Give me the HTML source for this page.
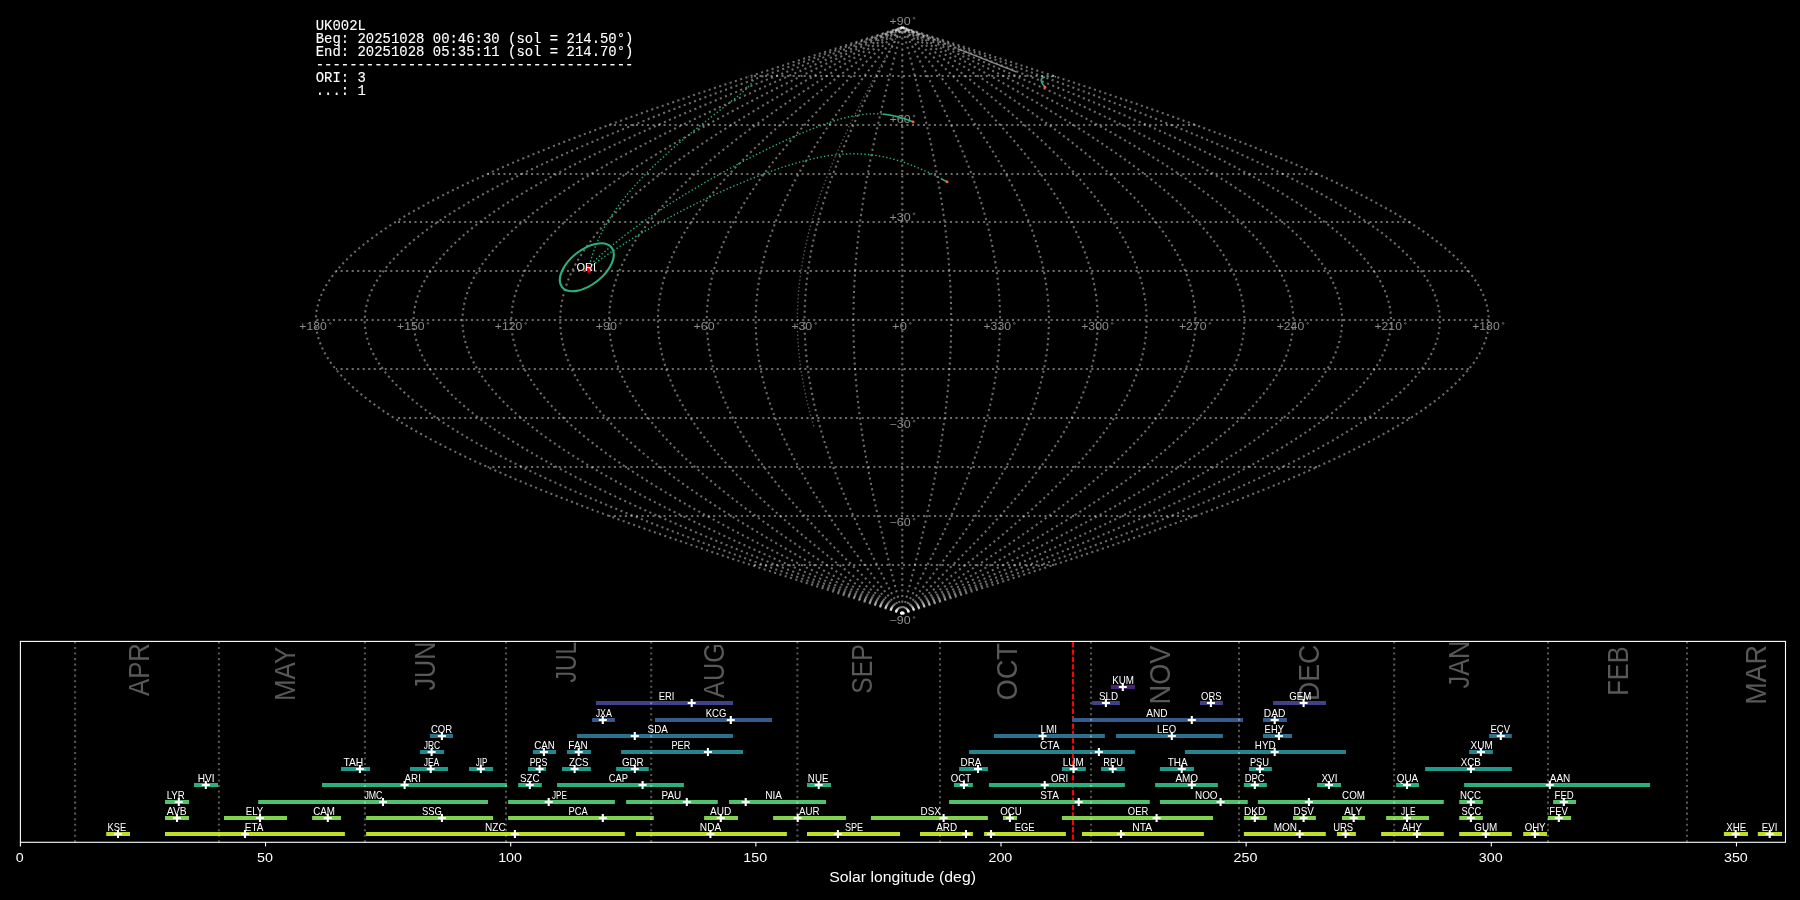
<!DOCTYPE html>
<html><head><meta charset="utf-8"><title>UK002L</title>
<style>html,body{margin:0;padding:0;background:#000;width:1800px;height:900px;overflow:hidden}svg{display:block;will-change:transform}</style>
</head><body><svg width="1800" height="900" viewBox="0 0 1800 900" font-family="Liberation Sans, sans-serif"><g fill="none" stroke="#ffffff" stroke-opacity="0.42" stroke-width="2.08" stroke-dasharray="2.08 3.44"><polyline points="1054.08,565 1053.24,565 1052.4,565 1051.55,565 1050.71,565 1049.87,565 1049.02,565 1048.18,565 1047.34,565 1046.49,565 1045.65,565 1044.81,565 1043.96,565 1043.12,565 1042.28,565 1041.43,565 1040.59,565 1039.75,565 1038.9,565 1038.06,565 1037.22,565 1036.37,565 1035.53,565 1034.69,565 1033.84,565 1033,565 1032.16,565 1031.31,565 1030.47,565 1029.63,565 1028.78,565 1027.94,565 1027.1,565 1026.26,565 1025.41,565 1024.57,565 1023.73,565 1022.88,565 1022.04,565 1021.2,565 1020.35,565 1019.51,565 1018.67,565 1017.82,565 1016.98,565 1016.14,565 1015.29,565 1014.45,565 1013.61,565 1012.76,565 1011.92,565 1011.08,565 1010.23,565 1009.39,565 1008.55,565 1007.7,565 1006.86,565 1006.02,565 1005.17,565 1004.33,565 1003.49,565 1002.64,565 1001.8,565 1000.96,565 1000.11,565 999.27,565 998.43,565 997.59,565 996.74,565 995.9,565 995.06,565 994.21,565 993.37,565 992.53,565 991.68,565 990.84,565 990,565 989.15,565 988.31,565 987.47,565 986.62,565 985.78,565 984.94,565 984.09,565 983.25,565 982.41,565 981.56,565 980.72,565 979.88,565 979.03,565 978.19,565 977.35,565 976.5,565 975.66,565 974.82,565 973.97,565 973.13,565 972.29,565 971.45,565 970.6,565 969.76,565 968.92,565 968.07,565 967.23,565 966.39,565 965.54,565 964.7,565 963.86,565 963.01,565 962.17,565 961.33,565 960.48,565 959.64,565 958.8,565 957.95,565 957.11,565 956.27,565 955.42,565 954.58,565 953.74,565 952.89,565 952.05,565 951.21,565 950.36,565 949.52,565 948.68,565 947.83,565 946.99,565 946.15,565 945.3,565 944.46,565 943.62,565 942.78,565 941.93,565 941.09,565 940.25,565 939.4,565 938.56,565 937.72,565 936.87,565 936.03,565 935.19,565 934.34,565 933.5,565 932.66,565 931.81,565 930.97,565 930.13,565 929.28,565 928.44,565 927.6,565 926.75,565 925.91,565 925.07,565 924.22,565 923.38,565 922.54,565 921.69,565 920.85,565 920.01,565 919.16,565 918.32,565 917.48,565 916.63,565 915.79,565 914.95,565 914.11,565 913.26,565 912.42,565 911.58,565 910.73,565 909.89,565 909.05,565 908.2,565 907.36,565 906.52,565 905.67,565 904.83,565 903.99,565 903.14,565 902.3,565 901.46,565 900.61,565 899.77,565 898.93,565 898.08,565 897.24,565 896.4,565 895.55,565 894.71,565 893.87,565 893.02,565 892.18,565 891.34,565 890.49,565 889.65,565 888.81,565 887.97,565 887.12,565 886.28,565 885.44,565 884.59,565 883.75,565 882.91,565 882.06,565 881.22,565 880.38,565 879.53,565 878.69,565 877.85,565 877,565 876.16,565 875.32,565 874.47,565 873.63,565 872.79,565 871.94,565 871.1,565 870.26,565 869.41,565 868.57,565 867.73,565 866.88,565 866.04,565 865.2,565 864.35,565 863.51,565 862.67,565 861.82,565 860.98,565 860.14,565 859.3,565 858.45,565 857.61,565 856.77,565 855.92,565 855.08,565 854.24,565 853.39,565 852.55,565 851.71,565 850.86,565 850.02,565 849.18,565 848.33,565 847.49,565 846.65,565 845.8,565 844.96,565 844.12,565 843.27,565 842.43,565 841.59,565 840.74,565 839.9,565 839.06,565 838.21,565 837.37,565 836.53,565 835.68,565 834.84,565 834,565 833.15,565 832.31,565 831.47,565 830.63,565 829.78,565 828.94,565 828.1,565 827.25,565 826.41,565 825.57,565 824.72,565 823.88,565 823.04,565 822.19,565 821.35,565 820.51,565 819.66,565 818.82,565 817.98,565 817.13,565 816.29,565 815.45,565 814.6,565 813.76,565 812.92,565 812.07,565 811.23,565 810.39,565 809.54,565 808.7,565 807.86,565 807.01,565 806.17,565 805.33,565 804.49,565 803.64,565 802.8,565 801.96,565 801.11,565 800.27,565 799.43,565 798.58,565 797.74,565 796.9,565 796.05,565 795.21,565 794.37,565 793.52,565 792.68,565 791.84,565 790.99,565 790.15,565 789.31,565 788.46,565 787.62,565 786.78,565 785.93,565 785.09,565 784.25,565 783.4,565 782.56,565 781.72,565 780.87,565 780.03,565 779.19,565 778.34,565 777.5,565 776.66,565 775.82,565 774.97,565 774.13,565 773.29,565 772.44,565 771.6,565 770.76,565 769.91,565 769.07,565 768.23,565 767.38,565 766.54,565 765.7,565 764.85,565 764.01,565 763.17,565 762.32,565 761.48,565 760.64,565 759.79,565 758.95,565 758.11,565 757.26,565 756.42,565 755.58,565 754.73,565 753.89,565 753.05,565 752.2,565 751.36,565 750.52,565"/><polyline points="1195.52,516 1193.89,516 1192.26,516 1190.63,516 1189,516 1187.38,516 1185.75,516 1184.12,516 1182.49,516 1180.86,516 1179.23,516 1177.6,516 1175.97,516 1174.34,516 1172.71,516 1171.09,516 1169.46,516 1167.83,516 1166.2,516 1164.57,516 1162.94,516 1161.31,516 1159.68,516 1158.05,516 1156.42,516 1154.8,516 1153.17,516 1151.54,516 1149.91,516 1148.28,516 1146.65,516 1145.02,516 1143.39,516 1141.76,516 1140.13,516 1138.51,516 1136.88,516 1135.25,516 1133.62,516 1131.99,516 1130.36,516 1128.73,516 1127.1,516 1125.47,516 1123.84,516 1122.21,516 1120.59,516 1118.96,516 1117.33,516 1115.7,516 1114.07,516 1112.44,516 1110.81,516 1109.18,516 1107.55,516 1105.92,516 1104.3,516 1102.67,516 1101.04,516 1099.41,516 1097.78,516 1096.15,516 1094.52,516 1092.89,516 1091.26,516 1089.63,516 1088.01,516 1086.38,516 1084.75,516 1083.12,516 1081.49,516 1079.86,516 1078.23,516 1076.6,516 1074.97,516 1073.35,516 1071.72,516 1070.09,516 1068.46,516 1066.83,516 1065.2,516 1063.57,516 1061.94,516 1060.31,516 1058.68,516 1057.06,516 1055.43,516 1053.8,516 1052.17,516 1050.54,516 1048.91,516 1047.28,516 1045.65,516 1044.02,516 1042.39,516 1040.76,516 1039.14,516 1037.51,516 1035.88,516 1034.25,516 1032.62,516 1030.99,516 1029.36,516 1027.73,516 1026.1,516 1024.47,516 1022.85,516 1021.22,516 1019.59,516 1017.96,516 1016.33,516 1014.7,516 1013.07,516 1011.44,516 1009.81,516 1008.18,516 1006.56,516 1004.93,516 1003.3,516 1001.67,516 1000.04,516 998.41,516 996.78,516 995.15,516 993.52,516 991.89,516 990.27,516 988.64,516 987.01,516 985.38,516 983.75,516 982.12,516 980.49,516 978.86,516 977.23,516 975.61,516 973.98,516 972.35,516 970.72,516 969.09,516 967.46,516 965.83,516 964.2,516 962.57,516 960.94,516 959.31,516 957.69,516 956.06,516 954.43,516 952.8,516 951.17,516 949.54,516 947.91,516 946.28,516 944.65,516 943.02,516 941.4,516 939.77,516 938.14,516 936.51,516 934.88,516 933.25,516 931.62,516 929.99,516 928.36,516 926.74,516 925.11,516 923.48,516 921.85,516 920.22,516 918.59,516 916.96,516 915.33,516 913.7,516 912.07,516 910.44,516 908.82,516 907.19,516 905.56,516 903.93,516 902.3,516 900.67,516 899.04,516 897.41,516 895.78,516 894.15,516 892.53,516 890.9,516 889.27,516 887.64,516 886.01,516 884.38,516 882.75,516 881.12,516 879.49,516 877.86,516 876.24,516 874.61,516 872.98,516 871.35,516 869.72,516 868.09,516 866.46,516 864.83,516 863.2,516 861.57,516 859.95,516 858.32,516 856.69,516 855.06,516 853.43,516 851.8,516 850.17,516 848.54,516 846.91,516 845.28,516 843.66,516 842.03,516 840.4,516 838.77,516 837.14,516 835.51,516 833.88,516 832.25,516 830.62,516 828.99,516 827.37,516 825.74,516 824.11,516 822.48,516 820.85,516 819.22,516 817.59,516 815.96,516 814.33,516 812.7,516 811.08,516 809.45,516 807.82,516 806.19,516 804.56,516 802.93,516 801.3,516 799.67,516 798.04,516 796.41,516 794.79,516 793.16,516 791.53,516 789.9,516 788.27,516 786.64,516 785.01,516 783.38,516 781.75,516 780.12,516 778.5,516 776.87,516 775.24,516 773.61,516 771.98,516 770.35,516 768.72,516 767.09,516 765.46,516 763.83,516 762.21,516 760.58,516 758.95,516 757.32,516 755.69,516 754.06,516 752.43,516 750.8,516 749.17,516 747.54,516 745.92,516 744.29,516 742.66,516 741.03,516 739.4,516 737.77,516 736.14,516 734.51,516 732.88,516 731.25,516 729.63,516 728,516 726.37,516 724.74,516 723.11,516 721.48,516 719.85,516 718.22,516 716.59,516 714.96,516 713.34,516 711.71,516 710.08,516 708.45,516 706.82,516 705.19,516 703.56,516 701.93,516 700.3,516 698.67,516 697.05,516 695.42,516 693.79,516 692.16,516 690.53,516 688.9,516 687.27,516 685.64,516 684.01,516 682.38,516 680.76,516 679.13,516 677.5,516 675.87,516 674.24,516 672.61,516 670.98,516 669.35,516 667.72,516 666.09,516 664.47,516 662.84,516 661.21,516 659.58,516 657.95,516 656.32,516 654.69,516 653.06,516 651.43,516 649.8,516 648.18,516 646.55,516 644.92,516 643.29,516 641.66,516 640.03,516 638.4,516 636.77,516 635.14,516 633.51,516 631.89,516 630.26,516 628.63,516 627,516 625.37,516 623.74,516 622.11,516 620.48,516 618.85,516 617.22,516 615.6,516 613.97,516 612.34,516 610.71,516 609.08,516"/><polyline points="1316.98,467 1314.67,467 1312.37,467 1310.06,467 1307.76,467 1305.46,467 1303.15,467 1300.85,467 1298.55,467 1296.24,467 1293.94,467 1291.63,467 1289.33,467 1287.03,467 1284.72,467 1282.42,467 1280.12,467 1277.81,467 1275.51,467 1273.2,467 1270.9,467 1268.6,467 1266.29,467 1263.99,467 1261.69,467 1259.38,467 1257.08,467 1254.77,467 1252.47,467 1250.17,467 1247.86,467 1245.56,467 1243.26,467 1240.95,467 1238.65,467 1236.34,467 1234.04,467 1231.74,467 1229.43,467 1227.13,467 1224.83,467 1222.52,467 1220.22,467 1217.91,467 1215.61,467 1213.31,467 1211,467 1208.7,467 1206.4,467 1204.09,467 1201.79,467 1199.48,467 1197.18,467 1194.88,467 1192.57,467 1190.27,467 1187.97,467 1185.66,467 1183.36,467 1181.05,467 1178.75,467 1176.45,467 1174.14,467 1171.84,467 1169.54,467 1167.23,467 1164.93,467 1162.62,467 1160.32,467 1158.02,467 1155.71,467 1153.41,467 1151.11,467 1148.8,467 1146.5,467 1144.19,467 1141.89,467 1139.59,467 1137.28,467 1134.98,467 1132.68,467 1130.37,467 1128.07,467 1125.76,467 1123.46,467 1121.16,467 1118.85,467 1116.55,467 1114.25,467 1111.94,467 1109.64,467 1107.33,467 1105.03,467 1102.73,467 1100.42,467 1098.12,467 1095.82,467 1093.51,467 1091.21,467 1088.9,467 1086.6,467 1084.3,467 1081.99,467 1079.69,467 1077.39,467 1075.08,467 1072.78,467 1070.47,467 1068.17,467 1065.87,467 1063.56,467 1061.26,467 1058.96,467 1056.65,467 1054.35,467 1052.04,467 1049.74,467 1047.44,467 1045.13,467 1042.83,467 1040.53,467 1038.22,467 1035.92,467 1033.61,467 1031.31,467 1029.01,467 1026.7,467 1024.4,467 1022.1,467 1019.79,467 1017.49,467 1015.18,467 1012.88,467 1010.58,467 1008.27,467 1005.97,467 1003.67,467 1001.36,467 999.06,467 996.75,467 994.45,467 992.15,467 989.84,467 987.54,467 985.24,467 982.93,467 980.63,467 978.32,467 976.02,467 973.72,467 971.41,467 969.11,467 966.81,467 964.5,467 962.2,467 959.89,467 957.59,467 955.29,467 952.98,467 950.68,467 948.38,467 946.07,467 943.77,467 941.46,467 939.16,467 936.86,467 934.55,467 932.25,467 929.95,467 927.64,467 925.34,467 923.03,467 920.73,467 918.43,467 916.12,467 913.82,467 911.52,467 909.21,467 906.91,467 904.6,467 902.3,467 900,467 897.69,467 895.39,467 893.08,467 890.78,467 888.48,467 886.17,467 883.87,467 881.57,467 879.26,467 876.96,467 874.65,467 872.35,467 870.05,467 867.74,467 865.44,467 863.14,467 860.83,467 858.53,467 856.22,467 853.92,467 851.62,467 849.31,467 847.01,467 844.71,467 842.4,467 840.1,467 837.79,467 835.49,467 833.19,467 830.88,467 828.58,467 826.28,467 823.97,467 821.67,467 819.36,467 817.06,467 814.76,467 812.45,467 810.15,467 807.85,467 805.54,467 803.24,467 800.93,467 798.63,467 796.33,467 794.02,467 791.72,467 789.42,467 787.11,467 784.81,467 782.5,467 780.2,467 777.9,467 775.59,467 773.29,467 770.99,467 768.68,467 766.38,467 764.07,467 761.77,467 759.47,467 757.16,467 754.86,467 752.56,467 750.25,467 747.95,467 745.64,467 743.34,467 741.04,467 738.73,467 736.43,467 734.13,467 731.82,467 729.52,467 727.21,467 724.91,467 722.61,467 720.3,467 718,467 715.7,467 713.39,467 711.09,467 708.78,467 706.48,467 704.18,467 701.87,467 699.57,467 697.27,467 694.96,467 692.66,467 690.35,467 688.05,467 685.75,467 683.44,467 681.14,467 678.84,467 676.53,467 674.23,467 671.92,467 669.62,467 667.32,467 665.01,467 662.71,467 660.41,467 658.1,467 655.8,467 653.49,467 651.19,467 648.89,467 646.58,467 644.28,467 641.98,467 639.67,467 637.37,467 635.06,467 632.76,467 630.46,467 628.15,467 625.85,467 623.55,467 621.24,467 618.94,467 616.63,467 614.33,467 612.03,467 609.72,467 607.42,467 605.12,467 602.81,467 600.51,467 598.2,467 595.9,467 593.6,467 591.29,467 588.99,467 586.69,467 584.38,467 582.08,467 579.77,467 577.47,467 575.17,467 572.86,467 570.56,467 568.26,467 565.95,467 563.65,467 561.34,467 559.04,467 556.74,467 554.43,467 552.13,467 549.83,467 547.52,467 545.22,467 542.91,467 540.61,467 538.31,467 536,467 533.7,467 531.4,467 529.09,467 526.79,467 524.48,467 522.18,467 519.88,467 517.57,467 515.27,467 512.97,467 510.66,467 508.36,467 506.05,467 503.75,467 501.45,467 499.14,467 496.84,467 494.54,467 492.23,467 489.93,467 487.62,467"/><polyline points="1410.17,418 1407.35,418 1404.53,418 1401.71,418 1398.89,418 1396.06,418 1393.24,418 1390.42,418 1387.6,418 1384.78,418 1381.96,418 1379.14,418 1376.31,418 1373.49,418 1370.67,418 1367.85,418 1365.03,418 1362.21,418 1359.38,418 1356.56,418 1353.74,418 1350.92,418 1348.1,418 1345.28,418 1342.46,418 1339.63,418 1336.81,418 1333.99,418 1331.17,418 1328.35,418 1325.53,418 1322.71,418 1319.88,418 1317.06,418 1314.24,418 1311.42,418 1308.6,418 1305.78,418 1302.95,418 1300.13,418 1297.31,418 1294.49,418 1291.67,418 1288.85,418 1286.03,418 1283.2,418 1280.38,418 1277.56,418 1274.74,418 1271.92,418 1269.1,418 1266.27,418 1263.45,418 1260.63,418 1257.81,418 1254.99,418 1252.17,418 1249.35,418 1246.52,418 1243.7,418 1240.88,418 1238.06,418 1235.24,418 1232.42,418 1229.6,418 1226.77,418 1223.95,418 1221.13,418 1218.31,418 1215.49,418 1212.67,418 1209.84,418 1207.02,418 1204.2,418 1201.38,418 1198.56,418 1195.74,418 1192.92,418 1190.09,418 1187.27,418 1184.45,418 1181.63,418 1178.81,418 1175.99,418 1173.17,418 1170.34,418 1167.52,418 1164.7,418 1161.88,418 1159.06,418 1156.24,418 1153.41,418 1150.59,418 1147.77,418 1144.95,418 1142.13,418 1139.31,418 1136.49,418 1133.66,418 1130.84,418 1128.02,418 1125.2,418 1122.38,418 1119.56,418 1116.73,418 1113.91,418 1111.09,418 1108.27,418 1105.45,418 1102.63,418 1099.81,418 1096.98,418 1094.16,418 1091.34,418 1088.52,418 1085.7,418 1082.88,418 1080.06,418 1077.23,418 1074.41,418 1071.59,418 1068.77,418 1065.95,418 1063.13,418 1060.3,418 1057.48,418 1054.66,418 1051.84,418 1049.02,418 1046.2,418 1043.38,418 1040.55,418 1037.73,418 1034.91,418 1032.09,418 1029.27,418 1026.45,418 1023.62,418 1020.8,418 1017.98,418 1015.16,418 1012.34,418 1009.52,418 1006.7,418 1003.87,418 1001.05,418 998.23,418 995.41,418 992.59,418 989.77,418 986.95,418 984.12,418 981.3,418 978.48,418 975.66,418 972.84,418 970.02,418 967.19,418 964.37,418 961.55,418 958.73,418 955.91,418 953.09,418 950.27,418 947.44,418 944.62,418 941.8,418 938.98,418 936.16,418 933.34,418 930.52,418 927.69,418 924.87,418 922.05,418 919.23,418 916.41,418 913.59,418 910.76,418 907.94,418 905.12,418 902.3,418 899.48,418 896.66,418 893.84,418 891.01,418 888.19,418 885.37,418 882.55,418 879.73,418 876.91,418 874.08,418 871.26,418 868.44,418 865.62,418 862.8,418 859.98,418 857.16,418 854.33,418 851.51,418 848.69,418 845.87,418 843.05,418 840.23,418 837.41,418 834.58,418 831.76,418 828.94,418 826.12,418 823.3,418 820.48,418 817.65,418 814.83,418 812.01,418 809.19,418 806.37,418 803.55,418 800.73,418 797.9,418 795.08,418 792.26,418 789.44,418 786.62,418 783.8,418 780.98,418 778.15,418 775.33,418 772.51,418 769.69,418 766.87,418 764.05,418 761.22,418 758.4,418 755.58,418 752.76,418 749.94,418 747.12,418 744.3,418 741.47,418 738.65,418 735.83,418 733.01,418 730.19,418 727.37,418 724.54,418 721.72,418 718.9,418 716.08,418 713.26,418 710.44,418 707.62,418 704.79,418 701.97,418 699.15,418 696.33,418 693.51,418 690.69,418 687.87,418 685.04,418 682.22,418 679.4,418 676.58,418 673.76,418 670.94,418 668.11,418 665.29,418 662.47,418 659.65,418 656.83,418 654.01,418 651.19,418 648.36,418 645.54,418 642.72,418 639.9,418 637.08,418 634.26,418 631.43,418 628.61,418 625.79,418 622.97,418 620.15,418 617.33,418 614.51,418 611.68,418 608.86,418 606.04,418 603.22,418 600.4,418 597.58,418 594.76,418 591.93,418 589.11,418 586.29,418 583.47,418 580.65,418 577.83,418 575,418 572.18,418 569.36,418 566.54,418 563.72,418 560.9,418 558.08,418 555.25,418 552.43,418 549.61,418 546.79,418 543.97,418 541.15,418 538.33,418 535.5,418 532.68,418 529.86,418 527.04,418 524.22,418 521.4,418 518.57,418 515.75,418 512.93,418 510.11,418 507.29,418 504.47,418 501.65,418 498.82,418 496,418 493.18,418 490.36,418 487.54,418 484.72,418 481.89,418 479.07,418 476.25,418 473.43,418 470.61,418 467.79,418 464.97,418 462.14,418 459.32,418 456.5,418 453.68,418 450.86,418 448.04,418 445.22,418 442.39,418 439.57,418 436.75,418 433.93,418 431.11,418 428.29,418 425.46,418 422.64,418 419.82,418 417,418 414.18,418 411.36,418 408.54,418 405.71,418 402.89,418 400.07,418 397.25,418 394.43,418"/><polyline points="1468.76,369 1465.61,369 1462.46,369 1459.32,369 1456.17,369 1453.02,369 1449.88,369 1446.73,369 1443.58,369 1440.43,369 1437.29,369 1434.14,369 1430.99,369 1427.85,369 1424.7,369 1421.55,369 1418.41,369 1415.26,369 1412.11,369 1408.96,369 1405.82,369 1402.67,369 1399.52,369 1396.38,369 1393.23,369 1390.08,369 1386.94,369 1383.79,369 1380.64,369 1377.49,369 1374.35,369 1371.2,369 1368.05,369 1364.91,369 1361.76,369 1358.61,369 1355.47,369 1352.32,369 1349.17,369 1346.03,369 1342.88,369 1339.73,369 1336.58,369 1333.44,369 1330.29,369 1327.14,369 1324,369 1320.85,369 1317.7,369 1314.56,369 1311.41,369 1308.26,369 1305.11,369 1301.97,369 1298.82,369 1295.67,369 1292.53,369 1289.38,369 1286.23,369 1283.09,369 1279.94,369 1276.79,369 1273.64,369 1270.5,369 1267.35,369 1264.2,369 1261.06,369 1257.91,369 1254.76,369 1251.62,369 1248.47,369 1245.32,369 1242.17,369 1239.03,369 1235.88,369 1232.73,369 1229.59,369 1226.44,369 1223.29,369 1220.15,369 1217,369 1213.85,369 1210.7,369 1207.56,369 1204.41,369 1201.26,369 1198.12,369 1194.97,369 1191.82,369 1188.68,369 1185.53,369 1182.38,369 1179.23,369 1176.09,369 1172.94,369 1169.79,369 1166.65,369 1163.5,369 1160.35,369 1157.21,369 1154.06,369 1150.91,369 1147.76,369 1144.62,369 1141.47,369 1138.32,369 1135.18,369 1132.03,369 1128.88,369 1125.74,369 1122.59,369 1119.44,369 1116.3,369 1113.15,369 1110,369 1106.85,369 1103.71,369 1100.56,369 1097.41,369 1094.27,369 1091.12,369 1087.97,369 1084.83,369 1081.68,369 1078.53,369 1075.38,369 1072.24,369 1069.09,369 1065.94,369 1062.8,369 1059.65,369 1056.5,369 1053.36,369 1050.21,369 1047.06,369 1043.91,369 1040.77,369 1037.62,369 1034.47,369 1031.33,369 1028.18,369 1025.03,369 1021.89,369 1018.74,369 1015.59,369 1012.44,369 1009.3,369 1006.15,369 1003,369 999.86,369 996.71,369 993.56,369 990.42,369 987.27,369 984.12,369 980.97,369 977.83,369 974.68,369 971.53,369 968.39,369 965.24,369 962.09,369 958.95,369 955.8,369 952.65,369 949.5,369 946.36,369 943.21,369 940.06,369 936.92,369 933.77,369 930.62,369 927.48,369 924.33,369 921.18,369 918.03,369 914.89,369 911.74,369 908.59,369 905.45,369 902.3,369 899.15,369 896.01,369 892.86,369 889.71,369 886.57,369 883.42,369 880.27,369 877.12,369 873.98,369 870.83,369 867.68,369 864.54,369 861.39,369 858.24,369 855.1,369 851.95,369 848.8,369 845.65,369 842.51,369 839.36,369 836.21,369 833.07,369 829.92,369 826.77,369 823.63,369 820.48,369 817.33,369 814.18,369 811.04,369 807.89,369 804.74,369 801.6,369 798.45,369 795.3,369 792.16,369 789.01,369 785.86,369 782.71,369 779.57,369 776.42,369 773.27,369 770.13,369 766.98,369 763.83,369 760.69,369 757.54,369 754.39,369 751.24,369 748.1,369 744.95,369 741.8,369 738.66,369 735.51,369 732.36,369 729.22,369 726.07,369 722.92,369 719.77,369 716.63,369 713.48,369 710.33,369 707.19,369 704.04,369 700.89,369 697.75,369 694.6,369 691.45,369 688.3,369 685.16,369 682.01,369 678.86,369 675.72,369 672.57,369 669.42,369 666.28,369 663.13,369 659.98,369 656.84,369 653.69,369 650.54,369 647.39,369 644.25,369 641.1,369 637.95,369 634.81,369 631.66,369 628.51,369 625.37,369 622.22,369 619.07,369 615.92,369 612.78,369 609.63,369 606.48,369 603.34,369 600.19,369 597.04,369 593.9,369 590.75,369 587.6,369 584.45,369 581.31,369 578.16,369 575.01,369 571.87,369 568.72,369 565.57,369 562.43,369 559.28,369 556.13,369 552.98,369 549.84,369 546.69,369 543.54,369 540.4,369 537.25,369 534.1,369 530.96,369 527.81,369 524.66,369 521.51,369 518.37,369 515.22,369 512.07,369 508.93,369 505.78,369 502.63,369 499.49,369 496.34,369 493.19,369 490.04,369 486.9,369 483.75,369 480.6,369 477.46,369 474.31,369 471.16,369 468.02,369 464.87,369 461.72,369 458.57,369 455.43,369 452.28,369 449.13,369 445.99,369 442.84,369 439.69,369 436.55,369 433.4,369 430.25,369 427.11,369 423.96,369 420.81,369 417.66,369 414.52,369 411.37,369 408.22,369 405.08,369 401.93,369 398.78,369 395.64,369 392.49,369 389.34,369 386.19,369 383.05,369 379.9,369 376.75,369 373.61,369 370.46,369 367.31,369 364.17,369 361.02,369 357.87,369 354.72,369 351.58,369 348.43,369 345.28,369 342.14,369 338.99,369 335.84,369"/><polyline points="1488.74,320 1485.48,320 1482.22,320 1478.97,320 1475.71,320 1472.45,320 1469.19,320 1465.93,320 1462.68,320 1459.42,320 1456.16,320 1452.9,320 1449.64,320 1446.39,320 1443.13,320 1439.87,320 1436.61,320 1433.35,320 1430.1,320 1426.84,320 1423.58,320 1420.32,320 1417.06,320 1413.81,320 1410.55,320 1407.29,320 1404.03,320 1400.77,320 1397.52,320 1394.26,320 1391,320 1387.74,320 1384.48,320 1381.23,320 1377.97,320 1374.71,320 1371.45,320 1368.19,320 1364.94,320 1361.68,320 1358.42,320 1355.16,320 1351.9,320 1348.65,320 1345.39,320 1342.13,320 1338.87,320 1335.61,320 1332.36,320 1329.1,320 1325.84,320 1322.58,320 1319.32,320 1316.07,320 1312.81,320 1309.55,320 1306.29,320 1303.03,320 1299.78,320 1296.52,320 1293.26,320 1290,320 1286.74,320 1283.49,320 1280.23,320 1276.97,320 1273.71,320 1270.45,320 1267.2,320 1263.94,320 1260.68,320 1257.42,320 1254.16,320 1250.91,320 1247.65,320 1244.39,320 1241.13,320 1237.87,320 1234.62,320 1231.36,320 1228.1,320 1224.84,320 1221.58,320 1218.33,320 1215.07,320 1211.81,320 1208.55,320 1205.29,320 1202.04,320 1198.78,320 1195.52,320 1192.26,320 1189,320 1185.75,320 1182.49,320 1179.23,320 1175.97,320 1172.71,320 1169.46,320 1166.2,320 1162.94,320 1159.68,320 1156.42,320 1153.17,320 1149.91,320 1146.65,320 1143.39,320 1140.13,320 1136.88,320 1133.62,320 1130.36,320 1127.1,320 1123.84,320 1120.59,320 1117.33,320 1114.07,320 1110.81,320 1107.55,320 1104.3,320 1101.04,320 1097.78,320 1094.52,320 1091.26,320 1088.01,320 1084.75,320 1081.49,320 1078.23,320 1074.97,320 1071.72,320 1068.46,320 1065.2,320 1061.94,320 1058.68,320 1055.43,320 1052.17,320 1048.91,320 1045.65,320 1042.39,320 1039.14,320 1035.88,320 1032.62,320 1029.36,320 1026.1,320 1022.85,320 1019.59,320 1016.33,320 1013.07,320 1009.81,320 1006.56,320 1003.3,320 1000.04,320 996.78,320 993.52,320 990.27,320 987.01,320 983.75,320 980.49,320 977.23,320 973.98,320 970.72,320 967.46,320 964.2,320 960.94,320 957.69,320 954.43,320 951.17,320 947.91,320 944.65,320 941.4,320 938.14,320 934.88,320 931.62,320 928.36,320 925.11,320 921.85,320 918.59,320 915.33,320 912.07,320 908.82,320 905.56,320 902.3,320 899.04,320 895.78,320 892.53,320 889.27,320 886.01,320 882.75,320 879.49,320 876.24,320 872.98,320 869.72,320 866.46,320 863.2,320 859.95,320 856.69,320 853.43,320 850.17,320 846.91,320 843.66,320 840.4,320 837.14,320 833.88,320 830.62,320 827.37,320 824.11,320 820.85,320 817.59,320 814.33,320 811.08,320 807.82,320 804.56,320 801.3,320 798.04,320 794.79,320 791.53,320 788.27,320 785.01,320 781.75,320 778.5,320 775.24,320 771.98,320 768.72,320 765.46,320 762.21,320 758.95,320 755.69,320 752.43,320 749.17,320 745.92,320 742.66,320 739.4,320 736.14,320 732.88,320 729.63,320 726.37,320 723.11,320 719.85,320 716.59,320 713.34,320 710.08,320 706.82,320 703.56,320 700.3,320 697.05,320 693.79,320 690.53,320 687.27,320 684.01,320 680.76,320 677.5,320 674.24,320 670.98,320 667.72,320 664.47,320 661.21,320 657.95,320 654.69,320 651.43,320 648.18,320 644.92,320 641.66,320 638.4,320 635.14,320 631.89,320 628.63,320 625.37,320 622.11,320 618.85,320 615.6,320 612.34,320 609.08,320 605.82,320 602.56,320 599.31,320 596.05,320 592.79,320 589.53,320 586.27,320 583.02,320 579.76,320 576.5,320 573.24,320 569.98,320 566.73,320 563.47,320 560.21,320 556.95,320 553.69,320 550.44,320 547.18,320 543.92,320 540.66,320 537.4,320 534.15,320 530.89,320 527.63,320 524.37,320 521.11,320 517.86,320 514.6,320 511.34,320 508.08,320 504.82,320 501.57,320 498.31,320 495.05,320 491.79,320 488.53,320 485.28,320 482.02,320 478.76,320 475.5,320 472.24,320 468.99,320 465.73,320 462.47,320 459.21,320 455.95,320 452.7,320 449.44,320 446.18,320 442.92,320 439.66,320 436.41,320 433.15,320 429.89,320 426.63,320 423.37,320 420.12,320 416.86,320 413.6,320 410.34,320 407.08,320 403.83,320 400.57,320 397.31,320 394.05,320 390.79,320 387.54,320 384.28,320 381.02,320 377.76,320 374.5,320 371.25,320 367.99,320 364.73,320 361.47,320 358.21,320 354.96,320 351.7,320 348.44,320 345.18,320 341.92,320 338.67,320 335.41,320 332.15,320 328.89,320 325.63,320 322.38,320 319.12,320 315.86,320"/><polyline points="1468.76,271 1465.61,271 1462.46,271 1459.32,271 1456.17,271 1453.02,271 1449.88,271 1446.73,271 1443.58,271 1440.43,271 1437.29,271 1434.14,271 1430.99,271 1427.85,271 1424.7,271 1421.55,271 1418.41,271 1415.26,271 1412.11,271 1408.96,271 1405.82,271 1402.67,271 1399.52,271 1396.38,271 1393.23,271 1390.08,271 1386.94,271 1383.79,271 1380.64,271 1377.49,271 1374.35,271 1371.2,271 1368.05,271 1364.91,271 1361.76,271 1358.61,271 1355.47,271 1352.32,271 1349.17,271 1346.03,271 1342.88,271 1339.73,271 1336.58,271 1333.44,271 1330.29,271 1327.14,271 1324,271 1320.85,271 1317.7,271 1314.56,271 1311.41,271 1308.26,271 1305.11,271 1301.97,271 1298.82,271 1295.67,271 1292.53,271 1289.38,271 1286.23,271 1283.09,271 1279.94,271 1276.79,271 1273.64,271 1270.5,271 1267.35,271 1264.2,271 1261.06,271 1257.91,271 1254.76,271 1251.62,271 1248.47,271 1245.32,271 1242.17,271 1239.03,271 1235.88,271 1232.73,271 1229.59,271 1226.44,271 1223.29,271 1220.15,271 1217,271 1213.85,271 1210.7,271 1207.56,271 1204.41,271 1201.26,271 1198.12,271 1194.97,271 1191.82,271 1188.68,271 1185.53,271 1182.38,271 1179.23,271 1176.09,271 1172.94,271 1169.79,271 1166.65,271 1163.5,271 1160.35,271 1157.21,271 1154.06,271 1150.91,271 1147.76,271 1144.62,271 1141.47,271 1138.32,271 1135.18,271 1132.03,271 1128.88,271 1125.74,271 1122.59,271 1119.44,271 1116.3,271 1113.15,271 1110,271 1106.85,271 1103.71,271 1100.56,271 1097.41,271 1094.27,271 1091.12,271 1087.97,271 1084.83,271 1081.68,271 1078.53,271 1075.38,271 1072.24,271 1069.09,271 1065.94,271 1062.8,271 1059.65,271 1056.5,271 1053.36,271 1050.21,271 1047.06,271 1043.91,271 1040.77,271 1037.62,271 1034.47,271 1031.33,271 1028.18,271 1025.03,271 1021.89,271 1018.74,271 1015.59,271 1012.44,271 1009.3,271 1006.15,271 1003,271 999.86,271 996.71,271 993.56,271 990.42,271 987.27,271 984.12,271 980.97,271 977.83,271 974.68,271 971.53,271 968.39,271 965.24,271 962.09,271 958.95,271 955.8,271 952.65,271 949.5,271 946.36,271 943.21,271 940.06,271 936.92,271 933.77,271 930.62,271 927.48,271 924.33,271 921.18,271 918.03,271 914.89,271 911.74,271 908.59,271 905.45,271 902.3,271 899.15,271 896.01,271 892.86,271 889.71,271 886.57,271 883.42,271 880.27,271 877.12,271 873.98,271 870.83,271 867.68,271 864.54,271 861.39,271 858.24,271 855.1,271 851.95,271 848.8,271 845.65,271 842.51,271 839.36,271 836.21,271 833.07,271 829.92,271 826.77,271 823.63,271 820.48,271 817.33,271 814.18,271 811.04,271 807.89,271 804.74,271 801.6,271 798.45,271 795.3,271 792.16,271 789.01,271 785.86,271 782.71,271 779.57,271 776.42,271 773.27,271 770.13,271 766.98,271 763.83,271 760.69,271 757.54,271 754.39,271 751.24,271 748.1,271 744.95,271 741.8,271 738.66,271 735.51,271 732.36,271 729.22,271 726.07,271 722.92,271 719.77,271 716.63,271 713.48,271 710.33,271 707.19,271 704.04,271 700.89,271 697.75,271 694.6,271 691.45,271 688.3,271 685.16,271 682.01,271 678.86,271 675.72,271 672.57,271 669.42,271 666.28,271 663.13,271 659.98,271 656.84,271 653.69,271 650.54,271 647.39,271 644.25,271 641.1,271 637.95,271 634.81,271 631.66,271 628.51,271 625.37,271 622.22,271 619.07,271 615.92,271 612.78,271 609.63,271 606.48,271 603.34,271 600.19,271 597.04,271 593.9,271 590.75,271 587.6,271 584.45,271 581.31,271 578.16,271 575.01,271 571.87,271 568.72,271 565.57,271 562.43,271 559.28,271 556.13,271 552.98,271 549.84,271 546.69,271 543.54,271 540.4,271 537.25,271 534.1,271 530.96,271 527.81,271 524.66,271 521.51,271 518.37,271 515.22,271 512.07,271 508.93,271 505.78,271 502.63,271 499.49,271 496.34,271 493.19,271 490.04,271 486.9,271 483.75,271 480.6,271 477.46,271 474.31,271 471.16,271 468.02,271 464.87,271 461.72,271 458.57,271 455.43,271 452.28,271 449.13,271 445.99,271 442.84,271 439.69,271 436.55,271 433.4,271 430.25,271 427.11,271 423.96,271 420.81,271 417.66,271 414.52,271 411.37,271 408.22,271 405.08,271 401.93,271 398.78,271 395.64,271 392.49,271 389.34,271 386.19,271 383.05,271 379.9,271 376.75,271 373.61,271 370.46,271 367.31,271 364.17,271 361.02,271 357.87,271 354.72,271 351.58,271 348.43,271 345.28,271 342.14,271 338.99,271 335.84,271"/><polyline points="1410.17,222 1407.35,222 1404.53,222 1401.71,222 1398.89,222 1396.06,222 1393.24,222 1390.42,222 1387.6,222 1384.78,222 1381.96,222 1379.14,222 1376.31,222 1373.49,222 1370.67,222 1367.85,222 1365.03,222 1362.21,222 1359.38,222 1356.56,222 1353.74,222 1350.92,222 1348.1,222 1345.28,222 1342.46,222 1339.63,222 1336.81,222 1333.99,222 1331.17,222 1328.35,222 1325.53,222 1322.71,222 1319.88,222 1317.06,222 1314.24,222 1311.42,222 1308.6,222 1305.78,222 1302.95,222 1300.13,222 1297.31,222 1294.49,222 1291.67,222 1288.85,222 1286.03,222 1283.2,222 1280.38,222 1277.56,222 1274.74,222 1271.92,222 1269.1,222 1266.27,222 1263.45,222 1260.63,222 1257.81,222 1254.99,222 1252.17,222 1249.35,222 1246.52,222 1243.7,222 1240.88,222 1238.06,222 1235.24,222 1232.42,222 1229.6,222 1226.77,222 1223.95,222 1221.13,222 1218.31,222 1215.49,222 1212.67,222 1209.84,222 1207.02,222 1204.2,222 1201.38,222 1198.56,222 1195.74,222 1192.92,222 1190.09,222 1187.27,222 1184.45,222 1181.63,222 1178.81,222 1175.99,222 1173.17,222 1170.34,222 1167.52,222 1164.7,222 1161.88,222 1159.06,222 1156.24,222 1153.41,222 1150.59,222 1147.77,222 1144.95,222 1142.13,222 1139.31,222 1136.49,222 1133.66,222 1130.84,222 1128.02,222 1125.2,222 1122.38,222 1119.56,222 1116.73,222 1113.91,222 1111.09,222 1108.27,222 1105.45,222 1102.63,222 1099.81,222 1096.98,222 1094.16,222 1091.34,222 1088.52,222 1085.7,222 1082.88,222 1080.06,222 1077.23,222 1074.41,222 1071.59,222 1068.77,222 1065.95,222 1063.13,222 1060.3,222 1057.48,222 1054.66,222 1051.84,222 1049.02,222 1046.2,222 1043.38,222 1040.55,222 1037.73,222 1034.91,222 1032.09,222 1029.27,222 1026.45,222 1023.62,222 1020.8,222 1017.98,222 1015.16,222 1012.34,222 1009.52,222 1006.7,222 1003.87,222 1001.05,222 998.23,222 995.41,222 992.59,222 989.77,222 986.95,222 984.12,222 981.3,222 978.48,222 975.66,222 972.84,222 970.02,222 967.19,222 964.37,222 961.55,222 958.73,222 955.91,222 953.09,222 950.27,222 947.44,222 944.62,222 941.8,222 938.98,222 936.16,222 933.34,222 930.52,222 927.69,222 924.87,222 922.05,222 919.23,222 916.41,222 913.59,222 910.76,222 907.94,222 905.12,222 902.3,222 899.48,222 896.66,222 893.84,222 891.01,222 888.19,222 885.37,222 882.55,222 879.73,222 876.91,222 874.08,222 871.26,222 868.44,222 865.62,222 862.8,222 859.98,222 857.16,222 854.33,222 851.51,222 848.69,222 845.87,222 843.05,222 840.23,222 837.41,222 834.58,222 831.76,222 828.94,222 826.12,222 823.3,222 820.48,222 817.65,222 814.83,222 812.01,222 809.19,222 806.37,222 803.55,222 800.73,222 797.9,222 795.08,222 792.26,222 789.44,222 786.62,222 783.8,222 780.98,222 778.15,222 775.33,222 772.51,222 769.69,222 766.87,222 764.05,222 761.22,222 758.4,222 755.58,222 752.76,222 749.94,222 747.12,222 744.3,222 741.47,222 738.65,222 735.83,222 733.01,222 730.19,222 727.37,222 724.54,222 721.72,222 718.9,222 716.08,222 713.26,222 710.44,222 707.62,222 704.79,222 701.97,222 699.15,222 696.33,222 693.51,222 690.69,222 687.87,222 685.04,222 682.22,222 679.4,222 676.58,222 673.76,222 670.94,222 668.11,222 665.29,222 662.47,222 659.65,222 656.83,222 654.01,222 651.19,222 648.36,222 645.54,222 642.72,222 639.9,222 637.08,222 634.26,222 631.43,222 628.61,222 625.79,222 622.97,222 620.15,222 617.33,222 614.51,222 611.68,222 608.86,222 606.04,222 603.22,222 600.4,222 597.58,222 594.76,222 591.93,222 589.11,222 586.29,222 583.47,222 580.65,222 577.83,222 575,222 572.18,222 569.36,222 566.54,222 563.72,222 560.9,222 558.08,222 555.25,222 552.43,222 549.61,222 546.79,222 543.97,222 541.15,222 538.33,222 535.5,222 532.68,222 529.86,222 527.04,222 524.22,222 521.4,222 518.57,222 515.75,222 512.93,222 510.11,222 507.29,222 504.47,222 501.65,222 498.82,222 496,222 493.18,222 490.36,222 487.54,222 484.72,222 481.89,222 479.07,222 476.25,222 473.43,222 470.61,222 467.79,222 464.97,222 462.14,222 459.32,222 456.5,222 453.68,222 450.86,222 448.04,222 445.22,222 442.39,222 439.57,222 436.75,222 433.93,222 431.11,222 428.29,222 425.46,222 422.64,222 419.82,222 417,222 414.18,222 411.36,222 408.54,222 405.71,222 402.89,222 400.07,222 397.25,222 394.43,222"/><polyline points="1316.98,174 1314.67,174 1312.37,174 1310.06,174 1307.76,174 1305.46,174 1303.15,174 1300.85,174 1298.55,174 1296.24,174 1293.94,174 1291.63,174 1289.33,174 1287.03,174 1284.72,174 1282.42,174 1280.12,174 1277.81,174 1275.51,174 1273.2,174 1270.9,174 1268.6,174 1266.29,174 1263.99,174 1261.69,174 1259.38,174 1257.08,174 1254.77,174 1252.47,174 1250.17,174 1247.86,174 1245.56,174 1243.26,174 1240.95,174 1238.65,174 1236.34,174 1234.04,174 1231.74,174 1229.43,174 1227.13,174 1224.83,174 1222.52,174 1220.22,174 1217.91,174 1215.61,174 1213.31,174 1211,174 1208.7,174 1206.4,174 1204.09,174 1201.79,174 1199.48,174 1197.18,174 1194.88,174 1192.57,174 1190.27,174 1187.97,174 1185.66,174 1183.36,174 1181.05,174 1178.75,174 1176.45,174 1174.14,174 1171.84,174 1169.54,174 1167.23,174 1164.93,174 1162.62,174 1160.32,174 1158.02,174 1155.71,174 1153.41,174 1151.11,174 1148.8,174 1146.5,174 1144.19,174 1141.89,174 1139.59,174 1137.28,174 1134.98,174 1132.68,174 1130.37,174 1128.07,174 1125.76,174 1123.46,174 1121.16,174 1118.85,174 1116.55,174 1114.25,174 1111.94,174 1109.64,174 1107.33,174 1105.03,174 1102.73,174 1100.42,174 1098.12,174 1095.82,174 1093.51,174 1091.21,174 1088.9,174 1086.6,174 1084.3,174 1081.99,174 1079.69,174 1077.39,174 1075.08,174 1072.78,174 1070.47,174 1068.17,174 1065.87,174 1063.56,174 1061.26,174 1058.96,174 1056.65,174 1054.35,174 1052.04,174 1049.74,174 1047.44,174 1045.13,174 1042.83,174 1040.53,174 1038.22,174 1035.92,174 1033.61,174 1031.31,174 1029.01,174 1026.7,174 1024.4,174 1022.1,174 1019.79,174 1017.49,174 1015.18,174 1012.88,174 1010.58,174 1008.27,174 1005.97,174 1003.67,174 1001.36,174 999.06,174 996.75,174 994.45,174 992.15,174 989.84,174 987.54,174 985.24,174 982.93,174 980.63,174 978.32,174 976.02,174 973.72,174 971.41,174 969.11,174 966.81,174 964.5,174 962.2,174 959.89,174 957.59,174 955.29,174 952.98,174 950.68,174 948.38,174 946.07,174 943.77,174 941.46,174 939.16,174 936.86,174 934.55,174 932.25,174 929.95,174 927.64,174 925.34,174 923.03,174 920.73,174 918.43,174 916.12,174 913.82,174 911.52,174 909.21,174 906.91,174 904.6,174 902.3,174 900,174 897.69,174 895.39,174 893.08,174 890.78,174 888.48,174 886.17,174 883.87,174 881.57,174 879.26,174 876.96,174 874.65,174 872.35,174 870.05,174 867.74,174 865.44,174 863.14,174 860.83,174 858.53,174 856.22,174 853.92,174 851.62,174 849.31,174 847.01,174 844.71,174 842.4,174 840.1,174 837.79,174 835.49,174 833.19,174 830.88,174 828.58,174 826.28,174 823.97,174 821.67,174 819.36,174 817.06,174 814.76,174 812.45,174 810.15,174 807.85,174 805.54,174 803.24,174 800.93,174 798.63,174 796.33,174 794.02,174 791.72,174 789.42,174 787.11,174 784.81,174 782.5,174 780.2,174 777.9,174 775.59,174 773.29,174 770.99,174 768.68,174 766.38,174 764.07,174 761.77,174 759.47,174 757.16,174 754.86,174 752.56,174 750.25,174 747.95,174 745.64,174 743.34,174 741.04,174 738.73,174 736.43,174 734.13,174 731.82,174 729.52,174 727.21,174 724.91,174 722.61,174 720.3,174 718,174 715.7,174 713.39,174 711.09,174 708.78,174 706.48,174 704.18,174 701.87,174 699.57,174 697.27,174 694.96,174 692.66,174 690.35,174 688.05,174 685.75,174 683.44,174 681.14,174 678.84,174 676.53,174 674.23,174 671.92,174 669.62,174 667.32,174 665.01,174 662.71,174 660.41,174 658.1,174 655.8,174 653.49,174 651.19,174 648.89,174 646.58,174 644.28,174 641.98,174 639.67,174 637.37,174 635.06,174 632.76,174 630.46,174 628.15,174 625.85,174 623.55,174 621.24,174 618.94,174 616.63,174 614.33,174 612.03,174 609.72,174 607.42,174 605.12,174 602.81,174 600.51,174 598.2,174 595.9,174 593.6,174 591.29,174 588.99,174 586.69,174 584.38,174 582.08,174 579.77,174 577.47,174 575.17,174 572.86,174 570.56,174 568.26,174 565.95,174 563.65,174 561.34,174 559.04,174 556.74,174 554.43,174 552.13,174 549.83,174 547.52,174 545.22,174 542.91,174 540.61,174 538.31,174 536,174 533.7,174 531.4,174 529.09,174 526.79,174 524.48,174 522.18,174 519.88,174 517.57,174 515.27,174 512.97,174 510.66,174 508.36,174 506.05,174 503.75,174 501.45,174 499.14,174 496.84,174 494.54,174 492.23,174 489.93,174 487.62,174"/><polyline points="1195.52,125 1193.89,125 1192.26,125 1190.63,125 1189,125 1187.38,125 1185.75,125 1184.12,125 1182.49,125 1180.86,125 1179.23,125 1177.6,125 1175.97,125 1174.34,125 1172.71,125 1171.09,125 1169.46,125 1167.83,125 1166.2,125 1164.57,125 1162.94,125 1161.31,125 1159.68,125 1158.05,125 1156.42,125 1154.8,125 1153.17,125 1151.54,125 1149.91,125 1148.28,125 1146.65,125 1145.02,125 1143.39,125 1141.76,125 1140.13,125 1138.51,125 1136.88,125 1135.25,125 1133.62,125 1131.99,125 1130.36,125 1128.73,125 1127.1,125 1125.47,125 1123.84,125 1122.21,125 1120.59,125 1118.96,125 1117.33,125 1115.7,125 1114.07,125 1112.44,125 1110.81,125 1109.18,125 1107.55,125 1105.92,125 1104.3,125 1102.67,125 1101.04,125 1099.41,125 1097.78,125 1096.15,125 1094.52,125 1092.89,125 1091.26,125 1089.63,125 1088.01,125 1086.38,125 1084.75,125 1083.12,125 1081.49,125 1079.86,125 1078.23,125 1076.6,125 1074.97,125 1073.35,125 1071.72,125 1070.09,125 1068.46,125 1066.83,125 1065.2,125 1063.57,125 1061.94,125 1060.31,125 1058.68,125 1057.06,125 1055.43,125 1053.8,125 1052.17,125 1050.54,125 1048.91,125 1047.28,125 1045.65,125 1044.02,125 1042.39,125 1040.76,125 1039.14,125 1037.51,125 1035.88,125 1034.25,125 1032.62,125 1030.99,125 1029.36,125 1027.73,125 1026.1,125 1024.47,125 1022.85,125 1021.22,125 1019.59,125 1017.96,125 1016.33,125 1014.7,125 1013.07,125 1011.44,125 1009.81,125 1008.18,125 1006.56,125 1004.93,125 1003.3,125 1001.67,125 1000.04,125 998.41,125 996.78,125 995.15,125 993.52,125 991.89,125 990.27,125 988.64,125 987.01,125 985.38,125 983.75,125 982.12,125 980.49,125 978.86,125 977.23,125 975.61,125 973.98,125 972.35,125 970.72,125 969.09,125 967.46,125 965.83,125 964.2,125 962.57,125 960.94,125 959.31,125 957.69,125 956.06,125 954.43,125 952.8,125 951.17,125 949.54,125 947.91,125 946.28,125 944.65,125 943.02,125 941.4,125 939.77,125 938.14,125 936.51,125 934.88,125 933.25,125 931.62,125 929.99,125 928.36,125 926.74,125 925.11,125 923.48,125 921.85,125 920.22,125 918.59,125 916.96,125 915.33,125 913.7,125 912.07,125 910.44,125 908.82,125 907.19,125 905.56,125 903.93,125 902.3,125 900.67,125 899.04,125 897.41,125 895.78,125 894.15,125 892.53,125 890.9,125 889.27,125 887.64,125 886.01,125 884.38,125 882.75,125 881.12,125 879.49,125 877.86,125 876.24,125 874.61,125 872.98,125 871.35,125 869.72,125 868.09,125 866.46,125 864.83,125 863.2,125 861.57,125 859.95,125 858.32,125 856.69,125 855.06,125 853.43,125 851.8,125 850.17,125 848.54,125 846.91,125 845.28,125 843.66,125 842.03,125 840.4,125 838.77,125 837.14,125 835.51,125 833.88,125 832.25,125 830.62,125 828.99,125 827.37,125 825.74,125 824.11,125 822.48,125 820.85,125 819.22,125 817.59,125 815.96,125 814.33,125 812.7,125 811.08,125 809.45,125 807.82,125 806.19,125 804.56,125 802.93,125 801.3,125 799.67,125 798.04,125 796.41,125 794.79,125 793.16,125 791.53,125 789.9,125 788.27,125 786.64,125 785.01,125 783.38,125 781.75,125 780.12,125 778.5,125 776.87,125 775.24,125 773.61,125 771.98,125 770.35,125 768.72,125 767.09,125 765.46,125 763.83,125 762.21,125 760.58,125 758.95,125 757.32,125 755.69,125 754.06,125 752.43,125 750.8,125 749.17,125 747.54,125 745.92,125 744.29,125 742.66,125 741.03,125 739.4,125 737.77,125 736.14,125 734.51,125 732.88,125 731.25,125 729.63,125 728,125 726.37,125 724.74,125 723.11,125 721.48,125 719.85,125 718.22,125 716.59,125 714.96,125 713.34,125 711.71,125 710.08,125 708.45,125 706.82,125 705.19,125 703.56,125 701.93,125 700.3,125 698.67,125 697.05,125 695.42,125 693.79,125 692.16,125 690.53,125 688.9,125 687.27,125 685.64,125 684.01,125 682.38,125 680.76,125 679.13,125 677.5,125 675.87,125 674.24,125 672.61,125 670.98,125 669.35,125 667.72,125 666.09,125 664.47,125 662.84,125 661.21,125 659.58,125 657.95,125 656.32,125 654.69,125 653.06,125 651.43,125 649.8,125 648.18,125 646.55,125 644.92,125 643.29,125 641.66,125 640.03,125 638.4,125 636.77,125 635.14,125 633.51,125 631.89,125 630.26,125 628.63,125 627,125 625.37,125 623.74,125 622.11,125 620.48,125 618.85,125 617.22,125 615.6,125 613.97,125 612.34,125 610.71,125 609.08,125"/><polyline points="1054.08,76 1053.24,76 1052.4,76 1051.55,76 1050.71,76 1049.87,76 1049.02,76 1048.18,76 1047.34,76 1046.49,76 1045.65,76 1044.81,76 1043.96,76 1043.12,76 1042.28,76 1041.43,76 1040.59,76 1039.75,76 1038.9,76 1038.06,76 1037.22,76 1036.37,76 1035.53,76 1034.69,76 1033.84,76 1033,76 1032.16,76 1031.31,76 1030.47,76 1029.63,76 1028.78,76 1027.94,76 1027.1,76 1026.26,76 1025.41,76 1024.57,76 1023.73,76 1022.88,76 1022.04,76 1021.2,76 1020.35,76 1019.51,76 1018.67,76 1017.82,76 1016.98,76 1016.14,76 1015.29,76 1014.45,76 1013.61,76 1012.76,76 1011.92,76 1011.08,76 1010.23,76 1009.39,76 1008.55,76 1007.7,76 1006.86,76 1006.02,76 1005.17,76 1004.33,76 1003.49,76 1002.64,76 1001.8,76 1000.96,76 1000.11,76 999.27,76 998.43,76 997.59,76 996.74,76 995.9,76 995.06,76 994.21,76 993.37,76 992.53,76 991.68,76 990.84,76 990,76 989.15,76 988.31,76 987.47,76 986.62,76 985.78,76 984.94,76 984.09,76 983.25,76 982.41,76 981.56,76 980.72,76 979.88,76 979.03,76 978.19,76 977.35,76 976.5,76 975.66,76 974.82,76 973.97,76 973.13,76 972.29,76 971.45,76 970.6,76 969.76,76 968.92,76 968.07,76 967.23,76 966.39,76 965.54,76 964.7,76 963.86,76 963.01,76 962.17,76 961.33,76 960.48,76 959.64,76 958.8,76 957.95,76 957.11,76 956.27,76 955.42,76 954.58,76 953.74,76 952.89,76 952.05,76 951.21,76 950.36,76 949.52,76 948.68,76 947.83,76 946.99,76 946.15,76 945.3,76 944.46,76 943.62,76 942.78,76 941.93,76 941.09,76 940.25,76 939.4,76 938.56,76 937.72,76 936.87,76 936.03,76 935.19,76 934.34,76 933.5,76 932.66,76 931.81,76 930.97,76 930.13,76 929.28,76 928.44,76 927.6,76 926.75,76 925.91,76 925.07,76 924.22,76 923.38,76 922.54,76 921.69,76 920.85,76 920.01,76 919.16,76 918.32,76 917.48,76 916.63,76 915.79,76 914.95,76 914.11,76 913.26,76 912.42,76 911.58,76 910.73,76 909.89,76 909.05,76 908.2,76 907.36,76 906.52,76 905.67,76 904.83,76 903.99,76 903.14,76 902.3,76 901.46,76 900.61,76 899.77,76 898.93,76 898.08,76 897.24,76 896.4,76 895.55,76 894.71,76 893.87,76 893.02,76 892.18,76 891.34,76 890.49,76 889.65,76 888.81,76 887.97,76 887.12,76 886.28,76 885.44,76 884.59,76 883.75,76 882.91,76 882.06,76 881.22,76 880.38,76 879.53,76 878.69,76 877.85,76 877,76 876.16,76 875.32,76 874.47,76 873.63,76 872.79,76 871.94,76 871.1,76 870.26,76 869.41,76 868.57,76 867.73,76 866.88,76 866.04,76 865.2,76 864.35,76 863.51,76 862.67,76 861.82,76 860.98,76 860.14,76 859.3,76 858.45,76 857.61,76 856.77,76 855.92,76 855.08,76 854.24,76 853.39,76 852.55,76 851.71,76 850.86,76 850.02,76 849.18,76 848.33,76 847.49,76 846.65,76 845.8,76 844.96,76 844.12,76 843.27,76 842.43,76 841.59,76 840.74,76 839.9,76 839.06,76 838.21,76 837.37,76 836.53,76 835.68,76 834.84,76 834,76 833.15,76 832.31,76 831.47,76 830.63,76 829.78,76 828.94,76 828.1,76 827.25,76 826.41,76 825.57,76 824.72,76 823.88,76 823.04,76 822.19,76 821.35,76 820.51,76 819.66,76 818.82,76 817.98,76 817.13,76 816.29,76 815.45,76 814.6,76 813.76,76 812.92,76 812.07,76 811.23,76 810.39,76 809.54,76 808.7,76 807.86,76 807.01,76 806.17,76 805.33,76 804.49,76 803.64,76 802.8,76 801.96,76 801.11,76 800.27,76 799.43,76 798.58,76 797.74,76 796.9,76 796.05,76 795.21,76 794.37,76 793.52,76 792.68,76 791.84,76 790.99,76 790.15,76 789.31,76 788.46,76 787.62,76 786.78,76 785.93,76 785.09,76 784.25,76 783.4,76 782.56,76 781.72,76 780.87,76 780.03,76 779.19,76 778.34,76 777.5,76 776.66,76 775.82,76 774.97,76 774.13,76 773.29,76 772.44,76 771.6,76 770.76,76 769.91,76 769.07,76 768.23,76 767.38,76 766.54,76 765.7,76 764.85,76 764.01,76 763.17,76 762.32,76 761.48,76 760.64,76 759.79,76 758.95,76 758.11,76 757.26,76 756.42,76 755.58,76 754.73,76 753.89,76 753.05,76 752.2,76 751.36,76 750.52,76"/><polyline points="902.3,613.67 907.42,612.04 912.53,610.41 917.65,608.78 922.77,607.15 927.88,605.52 932.99,603.9 938.1,602.27 943.21,600.64 948.31,599.01 953.41,597.38 958.51,595.75 963.6,594.12 968.69,592.49 973.77,590.86 978.85,589.24 983.92,587.61 988.98,585.98 994.04,584.35 999.09,582.72 1004.13,581.09 1009.17,579.46 1014.2,577.83 1019.22,576.2 1024.23,574.57 1029.23,572.94 1034.22,571.32 1039.2,569.69 1044.17,568.06 1049.13,566.43 1054.08,564.8 1059.02,563.17 1063.94,561.54 1068.86,559.91 1073.76,558.28 1078.65,556.65 1083.52,555.03 1088.38,553.4 1093.23,551.77 1098.06,550.14 1102.87,548.51 1107.68,546.88 1112.46,545.25 1117.23,543.62 1121.98,541.99 1126.72,540.37 1131.44,538.74 1136.14,537.11 1140.83,535.48 1145.49,533.85 1150.14,532.22 1154.77,530.59 1159.38,528.96 1163.97,527.33 1168.54,525.7 1173.09,524.08 1177.62,522.45 1182.12,520.82 1186.61,519.19 1191.08,517.56 1195.52,515.93 1199.94,514.3 1204.34,512.67 1208.71,511.04 1213.07,509.41 1217.39,507.78 1221.7,506.16 1225.98,504.53 1230.23,502.9 1234.46,501.27 1238.67,499.64 1242.85,498.01 1247,496.38 1251.13,494.75 1255.23,493.12 1259.3,491.5 1263.35,489.87 1267.37,488.24 1271.36,486.61 1275.32,484.98 1279.26,483.35 1283.16,481.72 1287.04,480.09 1290.89,478.46 1294.7,476.83 1298.49,475.2 1302.25,473.58 1305.98,471.95 1309.68,470.32 1313.34,468.69 1316.98,467.06 1320.58,465.43 1324.15,463.8 1327.69,462.17 1331.2,460.54 1334.67,458.91 1338.11,457.29 1341.52,455.66 1344.89,454.03 1348.23,452.4 1351.54,450.77 1354.81,449.14 1358.05,447.51 1361.25,445.88 1364.42,444.25 1367.55,442.62 1370.65,441 1373.71,439.37 1376.74,437.74 1379.73,436.11 1382.68,434.48 1385.6,432.85 1388.48,431.22 1391.32,429.59 1394.13,427.96 1396.9,426.33 1399.63,424.71 1402.32,423.08 1404.98,421.45 1407.59,419.82 1410.17,418.19 1412.71,416.56 1415.21,414.93 1417.67,413.3 1420.1,411.67 1422.48,410.04 1424.82,408.42 1427.13,406.79 1429.39,405.16 1431.61,403.53 1433.8,401.9 1435.94,400.27 1438.04,398.64 1440.1,397.01 1442.12,395.38 1444.1,393.75 1446.04,392.13 1447.93,390.5 1449.79,388.87 1451.6,387.24 1453.37,385.61 1455.1,383.98 1456.79,382.35 1458.43,380.72 1460.04,379.09 1461.6,377.46 1463.12,375.84 1464.59,374.21 1466.02,372.58 1467.41,370.95 1468.76,369.32 1470.06,367.69 1471.32,366.06 1472.54,364.43 1473.71,362.8 1474.84,361.18 1475.92,359.55 1476.97,357.92 1477.97,356.29 1478.92,354.66 1479.83,353.03 1480.7,351.4 1481.52,349.77 1482.3,348.14 1483.03,346.51 1483.72,344.88 1484.37,343.26 1484.97,341.63 1485.53,340 1486.04,338.37 1486.51,336.74 1486.93,335.11 1487.31,333.48 1487.65,331.85 1487.94,330.22 1488.18,328.59 1488.38,326.97 1488.54,325.34 1488.65,323.71 1488.72,322.08 1488.74,320.45 1488.72,318.82 1488.65,317.19 1488.54,315.56 1488.38,313.93 1488.18,312.31 1487.94,310.68 1487.65,309.05 1487.31,307.42 1486.93,305.79 1486.51,304.16 1486.04,302.53 1485.53,300.9 1484.97,299.27 1484.37,297.64 1483.72,296.01 1483.03,294.39 1482.3,292.76 1481.52,291.13 1480.7,289.5 1479.83,287.87 1478.92,286.24 1477.97,284.61 1476.97,282.98 1475.92,281.35 1474.84,279.72 1473.71,278.1 1472.54,276.47 1471.32,274.84 1470.06,273.21 1468.76,271.58 1467.41,269.95 1466.02,268.32 1464.59,266.69 1463.12,265.06 1461.6,263.44 1460.04,261.81 1458.43,260.18 1456.79,258.55 1455.1,256.92 1453.37,255.29 1451.6,253.66 1449.79,252.03 1447.93,250.4 1446.04,248.77 1444.1,247.14 1442.12,245.52 1440.1,243.89 1438.04,242.26 1435.94,240.63 1433.8,239 1431.61,237.37 1429.39,235.74 1427.13,234.11 1424.82,232.48 1422.48,230.85 1420.1,229.23 1417.67,227.6 1415.21,225.97 1412.71,224.34 1410.17,222.71 1407.59,221.08 1404.98,219.45 1402.32,217.82 1399.63,216.19 1396.9,214.56 1394.13,212.94 1391.32,211.31 1388.48,209.68 1385.6,208.05 1382.68,206.42 1379.73,204.79 1376.74,203.16 1373.71,201.53 1370.65,199.9 1367.55,198.27 1364.42,196.65 1361.25,195.02 1358.05,193.39 1354.81,191.76 1351.54,190.13 1348.23,188.5 1344.89,186.87 1341.52,185.24 1338.11,183.61 1334.67,181.98 1331.2,180.36 1327.69,178.73 1324.15,177.1 1320.58,175.47 1316.98,173.84 1313.34,172.21 1309.68,170.58 1305.98,168.95 1302.25,167.32 1298.49,165.69 1294.7,164.07 1290.89,162.44 1287.04,160.81 1283.16,159.18 1279.26,157.55 1275.32,155.92 1271.36,154.29 1267.37,152.66 1263.35,151.03 1259.3,149.41 1255.23,147.78 1251.13,146.15 1247,144.52 1242.85,142.89 1238.67,141.26 1234.46,139.63 1230.23,138 1225.98,136.37 1221.7,134.74 1217.39,133.11 1213.07,131.49 1208.71,129.86 1204.34,128.23 1199.94,126.6 1195.52,124.97 1191.08,123.34 1186.61,121.71 1182.12,120.08 1177.62,118.45 1173.09,116.82 1168.54,115.2 1163.97,113.57 1159.38,111.94 1154.77,110.31 1150.14,108.68 1145.49,107.05 1140.83,105.42 1136.14,103.79 1131.44,102.16 1126.72,100.53 1121.98,98.91 1117.23,97.28 1112.46,95.65 1107.68,94.02 1102.87,92.39 1098.06,90.76 1093.23,89.13 1088.38,87.5 1083.52,85.87 1078.65,84.24 1073.76,82.62 1068.86,80.99 1063.94,79.36 1059.02,77.73 1054.08,76.1 1049.13,74.47 1044.17,72.84 1039.2,71.21 1034.22,69.58 1029.23,67.95 1024.23,66.33 1019.22,64.7 1014.2,63.07 1009.17,61.44 1004.13,59.81 999.09,58.18 994.04,56.55 988.98,54.92 983.92,53.29 978.85,51.66 973.77,50.04 968.69,48.41 963.6,46.78 958.51,45.15 953.41,43.52 948.31,41.89 943.21,40.26 938.1,38.63 932.99,37 927.88,35.38 922.77,33.75 917.65,32.12 912.53,30.49 907.42,28.86 902.3,27.23"/><polyline points="902.3,613.67 906.99,612.04 911.68,610.41 916.37,608.78 921.06,607.15 925.75,605.52 930.43,603.9 935.12,602.27 939.8,600.64 944.48,599.01 949.15,597.38 953.82,595.75 958.49,594.12 963.15,592.49 967.81,590.86 972.47,589.24 977.12,587.61 981.76,585.98 986.39,584.35 991.02,582.72 995.65,581.09 1000.26,579.46 1004.87,577.83 1009.47,576.2 1014.07,574.57 1018.65,572.94 1023.23,571.32 1027.79,569.69 1032.35,568.06 1036.9,566.43 1041.43,564.8 1045.96,563.17 1050.47,561.54 1054.98,559.91 1059.47,558.28 1063.95,556.65 1068.42,555.03 1072.87,553.4 1077.32,551.77 1081.74,550.14 1086.16,548.51 1090.56,546.88 1094.95,545.25 1099.32,543.62 1103.68,541.99 1108.02,540.37 1112.35,538.74 1116.66,537.11 1120.95,535.48 1125.23,533.85 1129.49,532.22 1133.73,530.59 1137.96,528.96 1142.16,527.33 1146.35,525.7 1150.52,524.08 1154.67,522.45 1158.81,520.82 1162.92,519.19 1167.01,517.56 1171.09,515.93 1175.14,514.3 1179.17,512.67 1183.18,511.04 1187.17,509.41 1191.14,507.78 1195.08,506.16 1199,504.53 1202.91,502.9 1206.78,501.27 1210.64,499.64 1214.47,498.01 1218.28,496.38 1222.06,494.75 1225.82,493.12 1229.55,491.5 1233.26,489.87 1236.95,488.24 1240.6,486.61 1244.24,484.98 1247.84,483.35 1251.42,481.72 1254.98,480.09 1258.5,478.46 1262,476.83 1265.48,475.2 1268.92,473.58 1272.34,471.95 1275.73,470.32 1279.09,468.69 1282.42,467.06 1285.72,465.43 1289,463.8 1292.24,462.17 1295.45,460.54 1298.64,458.91 1301.79,457.29 1304.92,455.66 1308.01,454.03 1311.07,452.4 1314.1,450.77 1317.1,449.14 1320.07,447.51 1323.01,445.88 1325.91,444.25 1328.78,442.62 1331.62,441 1334.43,439.37 1337.2,437.74 1339.94,436.11 1342.65,434.48 1345.33,432.85 1347.97,431.22 1350.57,429.59 1353.14,427.96 1355.68,426.33 1358.19,424.71 1360.65,423.08 1363.09,421.45 1365.49,419.82 1367.85,418.19 1370.18,416.56 1372.47,414.93 1374.73,413.3 1376.95,411.67 1379.13,410.04 1381.28,408.42 1383.39,406.79 1385.46,405.16 1387.5,403.53 1389.5,401.9 1391.47,400.27 1393.39,398.64 1395.28,397.01 1397.14,395.38 1398.95,393.75 1400.73,392.13 1402.46,390.5 1404.16,388.87 1405.83,387.24 1407.45,385.61 1409.04,383.98 1410.58,382.35 1412.09,380.72 1413.56,379.09 1414.99,377.46 1416.38,375.84 1417.73,374.21 1419.05,372.58 1420.32,370.95 1421.55,369.32 1422.75,367.69 1423.9,366.06 1425.02,364.43 1426.09,362.8 1427.13,361.18 1428.12,359.55 1429.08,357.92 1429.99,356.29 1430.87,354.66 1431.7,353.03 1432.5,351.4 1433.25,349.77 1433.97,348.14 1434.64,346.51 1435.27,344.88 1435.86,343.26 1436.41,341.63 1436.93,340 1437.4,338.37 1437.82,336.74 1438.21,335.11 1438.56,333.48 1438.87,331.85 1439.13,330.22 1439.36,328.59 1439.54,326.97 1439.69,325.34 1439.79,323.71 1439.85,322.08 1439.87,320.45 1439.85,318.82 1439.79,317.19 1439.69,315.56 1439.54,313.93 1439.36,312.31 1439.13,310.68 1438.87,309.05 1438.56,307.42 1438.21,305.79 1437.82,304.16 1437.4,302.53 1436.93,300.9 1436.41,299.27 1435.86,297.64 1435.27,296.01 1434.64,294.39 1433.97,292.76 1433.25,291.13 1432.5,289.5 1431.7,287.87 1430.87,286.24 1429.99,284.61 1429.08,282.98 1428.12,281.35 1427.13,279.72 1426.09,278.1 1425.02,276.47 1423.9,274.84 1422.75,273.21 1421.55,271.58 1420.32,269.95 1419.05,268.32 1417.73,266.69 1416.38,265.06 1414.99,263.44 1413.56,261.81 1412.09,260.18 1410.58,258.55 1409.04,256.92 1407.45,255.29 1405.83,253.66 1404.16,252.03 1402.46,250.4 1400.73,248.77 1398.95,247.14 1397.14,245.52 1395.28,243.89 1393.39,242.26 1391.47,240.63 1389.5,239 1387.5,237.37 1385.46,235.74 1383.39,234.11 1381.28,232.48 1379.13,230.85 1376.95,229.23 1374.73,227.6 1372.47,225.97 1370.18,224.34 1367.85,222.71 1365.49,221.08 1363.09,219.45 1360.65,217.82 1358.19,216.19 1355.68,214.56 1353.14,212.94 1350.57,211.31 1347.97,209.68 1345.33,208.05 1342.65,206.42 1339.94,204.79 1337.2,203.16 1334.43,201.53 1331.62,199.9 1328.78,198.27 1325.91,196.65 1323.01,195.02 1320.07,193.39 1317.1,191.76 1314.1,190.13 1311.07,188.5 1308.01,186.87 1304.92,185.24 1301.79,183.61 1298.64,181.98 1295.45,180.36 1292.24,178.73 1289,177.1 1285.72,175.47 1282.42,173.84 1279.09,172.21 1275.73,170.58 1272.34,168.95 1268.92,167.32 1265.48,165.69 1262,164.07 1258.5,162.44 1254.98,160.81 1251.42,159.18 1247.84,157.55 1244.24,155.92 1240.6,154.29 1236.95,152.66 1233.26,151.03 1229.55,149.41 1225.82,147.78 1222.06,146.15 1218.28,144.52 1214.47,142.89 1210.64,141.26 1206.78,139.63 1202.91,138 1199,136.37 1195.08,134.74 1191.14,133.11 1187.17,131.49 1183.18,129.86 1179.17,128.23 1175.14,126.6 1171.09,124.97 1167.01,123.34 1162.92,121.71 1158.81,120.08 1154.67,118.45 1150.52,116.82 1146.35,115.2 1142.16,113.57 1137.96,111.94 1133.73,110.31 1129.49,108.68 1125.23,107.05 1120.95,105.42 1116.66,103.79 1112.35,102.16 1108.02,100.53 1103.68,98.91 1099.32,97.28 1094.95,95.65 1090.56,94.02 1086.16,92.39 1081.74,90.76 1077.32,89.13 1072.87,87.5 1068.42,85.87 1063.95,84.24 1059.47,82.62 1054.98,80.99 1050.47,79.36 1045.96,77.73 1041.43,76.1 1036.9,74.47 1032.35,72.84 1027.79,71.21 1023.23,69.58 1018.65,67.95 1014.07,66.33 1009.47,64.7 1004.87,63.07 1000.26,61.44 995.65,59.81 991.02,58.18 986.39,56.55 981.76,54.92 977.12,53.29 972.47,51.66 967.81,50.04 963.15,48.41 958.49,46.78 953.82,45.15 949.15,43.52 944.48,41.89 939.8,40.26 935.12,38.63 930.43,37 925.75,35.38 921.06,33.75 916.37,32.12 911.68,30.49 906.99,28.86 902.3,27.23"/><polyline points="902.3,613.67 906.56,612.04 910.83,610.41 915.09,608.78 919.36,607.15 923.62,605.52 927.88,603.9 932.13,602.27 936.39,600.64 940.64,599.01 944.89,597.38 949.14,595.75 953.38,594.12 957.62,592.49 961.86,590.86 966.09,589.24 970.31,587.61 974.53,585.98 978.75,584.35 982.96,582.72 987.16,581.09 991.36,579.46 995.55,577.83 999.73,576.2 1003.91,574.57 1008.07,572.94 1012.23,571.32 1016.38,569.69 1020.53,568.06 1024.66,566.43 1028.78,564.8 1032.9,563.17 1037,561.54 1041.1,559.91 1045.18,558.28 1049.25,556.65 1053.32,555.03 1057.37,553.4 1061.41,551.77 1065.43,550.14 1069.45,548.51 1073.45,546.88 1077.43,545.25 1081.41,543.62 1085.37,541.99 1089.32,540.37 1093.25,538.74 1097.17,537.11 1101.07,535.48 1104.96,533.85 1108.83,532.22 1112.69,530.59 1116.53,528.96 1120.36,527.33 1124.17,525.7 1127.96,524.08 1131.73,522.45 1135.49,520.82 1139.23,519.19 1142.95,517.56 1146.65,515.93 1150.33,514.3 1154,512.67 1157.65,511.04 1161.27,509.41 1164.88,507.78 1168.47,506.16 1172.03,504.53 1175.58,502.9 1179.1,501.27 1182.61,499.64 1186.09,498.01 1189.55,496.38 1192.99,494.75 1196.41,493.12 1199.8,491.5 1203.17,489.87 1206.52,488.24 1209.85,486.61 1213.15,484.98 1216.43,483.35 1219.69,481.72 1222.92,480.09 1226.12,478.46 1229.3,476.83 1232.46,475.2 1235.59,473.58 1238.7,471.95 1241.78,470.32 1244.83,468.69 1247.86,467.06 1250.87,465.43 1253.84,463.8 1256.79,462.17 1259.71,460.54 1262.61,458.91 1265.47,457.29 1268.31,455.66 1271.13,454.03 1273.91,452.4 1276.67,450.77 1279.39,449.14 1282.09,447.51 1284.76,445.88 1287.4,444.25 1290.01,442.62 1292.59,441 1295.14,439.37 1297.67,437.74 1300.16,436.11 1302.62,434.48 1305.05,432.85 1307.45,431.22 1309.82,429.59 1312.16,427.96 1314.47,426.33 1316.74,424.71 1318.99,423.08 1321.2,421.45 1323.38,419.82 1325.53,418.19 1327.64,416.56 1329.73,414.93 1331.78,413.3 1333.8,411.67 1335.78,410.04 1337.73,408.42 1339.65,406.79 1341.54,405.16 1343.39,403.53 1345.21,401.9 1347,400.27 1348.75,398.64 1350.47,397.01 1352.15,395.38 1353.8,393.75 1355.41,392.13 1357,390.5 1358.54,388.87 1360.05,387.24 1361.53,385.61 1362.97,383.98 1364.37,382.35 1365.75,380.72 1367.08,379.09 1368.38,377.46 1369.65,375.84 1370.88,374.21 1372.07,372.58 1373.23,370.95 1374.35,369.32 1375.43,367.69 1376.48,366.06 1377.5,364.43 1378.47,362.8 1379.42,361.18 1380.32,359.55 1381.19,357.92 1382.02,356.29 1382.82,354.66 1383.58,353.03 1384.3,351.4 1384.98,349.77 1385.63,348.14 1386.24,346.51 1386.82,344.88 1387.36,343.26 1387.86,341.63 1388.32,340 1388.75,338.37 1389.14,336.74 1389.49,335.11 1389.81,333.48 1390.09,331.85 1390.33,330.22 1390.53,328.59 1390.7,326.97 1390.83,325.34 1390.93,323.71 1390.98,322.08 1391,320.45 1390.98,318.82 1390.93,317.19 1390.83,315.56 1390.7,313.93 1390.53,312.31 1390.33,310.68 1390.09,309.05 1389.81,307.42 1389.49,305.79 1389.14,304.16 1388.75,302.53 1388.32,300.9 1387.86,299.27 1387.36,297.64 1386.82,296.01 1386.24,294.39 1385.63,292.76 1384.98,291.13 1384.3,289.5 1383.58,287.87 1382.82,286.24 1382.02,284.61 1381.19,282.98 1380.32,281.35 1379.42,279.72 1378.47,278.1 1377.5,276.47 1376.48,274.84 1375.43,273.21 1374.35,271.58 1373.23,269.95 1372.07,268.32 1370.88,266.69 1369.65,265.06 1368.38,263.44 1367.08,261.81 1365.75,260.18 1364.37,258.55 1362.97,256.92 1361.53,255.29 1360.05,253.66 1358.54,252.03 1357,250.4 1355.41,248.77 1353.8,247.14 1352.15,245.52 1350.47,243.89 1348.75,242.26 1347,240.63 1345.21,239 1343.39,237.37 1341.54,235.74 1339.65,234.11 1337.73,232.48 1335.78,230.85 1333.8,229.23 1331.78,227.6 1329.73,225.97 1327.64,224.34 1325.53,222.71 1323.38,221.08 1321.2,219.45 1318.99,217.82 1316.74,216.19 1314.47,214.56 1312.16,212.94 1309.82,211.31 1307.45,209.68 1305.05,208.05 1302.62,206.42 1300.16,204.79 1297.67,203.16 1295.14,201.53 1292.59,199.9 1290.01,198.27 1287.4,196.65 1284.76,195.02 1282.09,193.39 1279.39,191.76 1276.67,190.13 1273.91,188.5 1271.13,186.87 1268.31,185.24 1265.47,183.61 1262.61,181.98 1259.71,180.36 1256.79,178.73 1253.84,177.1 1250.87,175.47 1247.86,173.84 1244.83,172.21 1241.78,170.58 1238.7,168.95 1235.59,167.32 1232.46,165.69 1229.3,164.07 1226.12,162.44 1222.92,160.81 1219.69,159.18 1216.43,157.55 1213.15,155.92 1209.85,154.29 1206.52,152.66 1203.17,151.03 1199.8,149.41 1196.41,147.78 1192.99,146.15 1189.55,144.52 1186.09,142.89 1182.61,141.26 1179.1,139.63 1175.58,138 1172.03,136.37 1168.47,134.74 1164.88,133.11 1161.27,131.49 1157.65,129.86 1154,128.23 1150.33,126.6 1146.65,124.97 1142.95,123.34 1139.23,121.71 1135.49,120.08 1131.73,118.45 1127.96,116.82 1124.17,115.2 1120.36,113.57 1116.53,111.94 1112.69,110.31 1108.83,108.68 1104.96,107.05 1101.07,105.42 1097.17,103.79 1093.25,102.16 1089.32,100.53 1085.37,98.91 1081.41,97.28 1077.43,95.65 1073.45,94.02 1069.45,92.39 1065.43,90.76 1061.41,89.13 1057.37,87.5 1053.32,85.87 1049.25,84.24 1045.18,82.62 1041.1,80.99 1037,79.36 1032.9,77.73 1028.78,76.1 1024.66,74.47 1020.53,72.84 1016.38,71.21 1012.23,69.58 1008.07,67.95 1003.91,66.33 999.73,64.7 995.55,63.07 991.36,61.44 987.16,59.81 982.96,58.18 978.75,56.55 974.53,54.92 970.31,53.29 966.09,51.66 961.86,50.04 957.62,48.41 953.38,46.78 949.14,45.15 944.89,43.52 940.64,41.89 936.39,40.26 932.13,38.63 927.88,37 923.62,35.38 919.36,33.75 915.09,32.12 910.83,30.49 906.56,28.86 902.3,27.23"/><polyline points="902.3,613.67 906.14,612.04 909.98,610.41 913.81,608.78 917.65,607.15 921.49,605.52 925.32,603.9 929.15,602.27 932.98,600.64 936.81,599.01 940.63,597.38 944.46,595.75 948.27,594.12 952.09,592.49 955.9,590.86 959.71,589.24 963.51,587.61 967.31,585.98 971.1,584.35 974.89,582.72 978.68,581.09 982.45,579.46 986.22,577.83 989.99,576.2 993.75,574.57 997.5,572.94 1001.24,571.32 1004.98,569.69 1008.7,568.06 1012.42,566.43 1016.14,564.8 1019.84,563.17 1023.53,561.54 1027.22,559.91 1030.89,558.28 1034.56,556.65 1038.21,555.03 1041.86,553.4 1045.49,551.77 1049.12,550.14 1052.73,548.51 1056.33,546.88 1059.92,545.25 1063.5,543.62 1067.06,541.99 1070.62,540.37 1074.16,538.74 1077.68,537.11 1081.19,535.48 1084.69,533.85 1088.18,532.22 1091.65,530.59 1095.11,528.96 1098.55,527.33 1101.98,525.7 1105.39,524.08 1108.79,522.45 1112.17,520.82 1115.53,519.19 1118.88,517.56 1122.21,515.93 1125.53,514.3 1128.83,512.67 1132.11,511.04 1135.37,509.41 1138.62,507.78 1141.85,506.16 1145.06,504.53 1148.25,502.9 1151.42,501.27 1154.58,499.64 1157.71,498.01 1160.83,496.38 1163.92,494.75 1167,493.12 1170.05,491.5 1173.09,489.87 1176.1,488.24 1179.09,486.61 1182.07,484.98 1185.02,483.35 1187.95,481.72 1190.85,480.09 1193.74,478.46 1196.6,476.83 1199.44,475.2 1202.26,473.58 1205.06,471.95 1207.83,470.32 1210.58,468.69 1213.31,467.06 1216.01,465.43 1218.69,463.8 1221.34,462.17 1223.97,460.54 1226.58,458.91 1229.16,457.29 1231.71,455.66 1234.24,454.03 1236.75,452.4 1239.23,450.77 1241.68,449.14 1244.11,447.51 1246.51,445.88 1248.89,444.25 1251.24,442.62 1253.56,441 1255.86,439.37 1258.13,437.74 1260.37,436.11 1262.59,434.48 1264.78,432.85 1266.94,431.22 1269.07,429.59 1271.17,427.96 1273.25,426.33 1275.3,424.71 1277.32,423.08 1279.31,421.45 1281.27,419.82 1283.2,418.19 1285.11,416.56 1286.98,414.93 1288.83,413.3 1290.65,411.67 1292.43,410.04 1294.19,408.42 1295.92,406.79 1297.62,405.16 1299.28,403.53 1300.92,401.9 1302.53,400.27 1304.1,398.64 1305.65,397.01 1307.17,395.38 1308.65,393.75 1310.1,392.13 1311.53,390.5 1312.92,388.87 1314.28,387.24 1315.61,385.61 1316.9,383.98 1318.17,382.35 1319.4,380.72 1320.6,379.09 1321.77,377.46 1322.91,375.84 1324.02,374.21 1325.09,372.58 1326.13,370.95 1327.14,369.32 1328.12,367.69 1329.07,366.06 1329.98,364.43 1330.86,362.8 1331.7,361.18 1332.52,359.55 1333.3,357.92 1334.05,356.29 1334.77,354.66 1335.45,353.03 1336.1,351.4 1336.71,349.77 1337.3,348.14 1337.85,346.51 1338.37,344.88 1338.85,343.26 1339.3,341.63 1339.72,340 1340.11,338.37 1340.46,336.74 1340.77,335.11 1341.06,333.48 1341.31,331.85 1341.53,330.22 1341.71,328.59 1341.86,326.97 1341.98,325.34 1342.06,323.71 1342.11,322.08 1342.13,320.45 1342.11,318.82 1342.06,317.19 1341.98,315.56 1341.86,313.93 1341.71,312.31 1341.53,310.68 1341.31,309.05 1341.06,307.42 1340.77,305.79 1340.46,304.16 1340.11,302.53 1339.72,300.9 1339.3,299.27 1338.85,297.64 1338.37,296.01 1337.85,294.39 1337.3,292.76 1336.71,291.13 1336.1,289.5 1335.45,287.87 1334.77,286.24 1334.05,284.61 1333.3,282.98 1332.52,281.35 1331.7,279.72 1330.86,278.1 1329.98,276.47 1329.07,274.84 1328.12,273.21 1327.14,271.58 1326.13,269.95 1325.09,268.32 1324.02,266.69 1322.91,265.06 1321.77,263.44 1320.6,261.81 1319.4,260.18 1318.17,258.55 1316.9,256.92 1315.61,255.29 1314.28,253.66 1312.92,252.03 1311.53,250.4 1310.1,248.77 1308.65,247.14 1307.17,245.52 1305.65,243.89 1304.1,242.26 1302.53,240.63 1300.92,239 1299.28,237.37 1297.62,235.74 1295.92,234.11 1294.19,232.48 1292.43,230.85 1290.65,229.23 1288.83,227.6 1286.98,225.97 1285.11,224.34 1283.2,222.71 1281.27,221.08 1279.31,219.45 1277.32,217.82 1275.3,216.19 1273.25,214.56 1271.17,212.94 1269.07,211.31 1266.94,209.68 1264.78,208.05 1262.59,206.42 1260.37,204.79 1258.13,203.16 1255.86,201.53 1253.56,199.9 1251.24,198.27 1248.89,196.65 1246.51,195.02 1244.11,193.39 1241.68,191.76 1239.23,190.13 1236.75,188.5 1234.24,186.87 1231.71,185.24 1229.16,183.61 1226.58,181.98 1223.97,180.36 1221.34,178.73 1218.69,177.1 1216.01,175.47 1213.31,173.84 1210.58,172.21 1207.83,170.58 1205.06,168.95 1202.26,167.32 1199.44,165.69 1196.6,164.07 1193.74,162.44 1190.85,160.81 1187.95,159.18 1185.02,157.55 1182.07,155.92 1179.09,154.29 1176.1,152.66 1173.09,151.03 1170.05,149.41 1167,147.78 1163.92,146.15 1160.83,144.52 1157.71,142.89 1154.58,141.26 1151.42,139.63 1148.25,138 1145.06,136.37 1141.85,134.74 1138.62,133.11 1135.37,131.49 1132.11,129.86 1128.83,128.23 1125.53,126.6 1122.21,124.97 1118.88,123.34 1115.53,121.71 1112.17,120.08 1108.79,118.45 1105.39,116.82 1101.98,115.2 1098.55,113.57 1095.11,111.94 1091.65,110.31 1088.18,108.68 1084.69,107.05 1081.19,105.42 1077.68,103.79 1074.16,102.16 1070.62,100.53 1067.06,98.91 1063.5,97.28 1059.92,95.65 1056.33,94.02 1052.73,92.39 1049.12,90.76 1045.49,89.13 1041.86,87.5 1038.21,85.87 1034.56,84.24 1030.89,82.62 1027.22,80.99 1023.53,79.36 1019.84,77.73 1016.14,76.1 1012.42,74.47 1008.7,72.84 1004.98,71.21 1001.24,69.58 997.5,67.95 993.75,66.33 989.99,64.7 986.22,63.07 982.45,61.44 978.68,59.81 974.89,58.18 971.1,56.55 967.31,54.92 963.51,53.29 959.71,51.66 955.9,50.04 952.09,48.41 948.27,46.78 944.46,45.15 940.63,43.52 936.81,41.89 932.98,40.26 929.15,38.63 925.32,37 921.49,35.38 917.65,33.75 913.81,32.12 909.98,30.49 906.14,28.86 902.3,27.23"/><polyline points="902.3,613.67 905.71,612.04 909.12,610.41 912.53,608.78 915.94,607.15 919.35,605.52 922.76,603.9 926.17,602.27 929.57,600.64 932.97,599.01 936.37,597.38 939.77,595.75 943.17,594.12 946.56,592.49 949.95,590.86 953.33,589.24 956.71,587.61 960.09,585.98 963.46,584.35 966.83,582.72 970.19,581.09 973.55,579.46 976.9,577.83 980.24,576.2 983.59,574.57 986.92,572.94 990.25,571.32 993.57,569.69 996.88,568.06 1000.19,566.43 1003.49,564.8 1006.78,563.17 1010.06,561.54 1013.34,559.91 1016.61,558.28 1019.86,556.65 1023.11,555.03 1026.35,553.4 1029.58,551.77 1032.81,550.14 1036.02,548.51 1039.22,546.88 1042.41,545.25 1045.59,543.62 1048.76,541.99 1051.91,540.37 1055.06,538.74 1058.19,537.11 1061.32,535.48 1064.43,533.85 1067.53,532.22 1070.61,530.59 1073.69,528.96 1076.75,527.33 1079.79,525.7 1082.83,524.08 1085.84,522.45 1088.85,520.82 1091.84,519.19 1094.82,517.56 1097.78,515.93 1100.73,514.3 1103.66,512.67 1106.58,511.04 1109.48,509.41 1112.36,507.78 1115.23,506.16 1118.09,504.53 1120.92,502.9 1123.74,501.27 1126.55,499.64 1129.33,498.01 1132.1,496.38 1134.85,494.75 1137.59,493.12 1140.3,491.5 1143,489.87 1145.68,488.24 1148.34,486.61 1150.98,484.98 1153.6,483.35 1156.21,481.72 1158.79,480.09 1161.36,478.46 1163.9,476.83 1166.43,475.2 1168.93,473.58 1171.42,471.95 1173.88,470.32 1176.33,468.69 1178.75,467.06 1181.15,465.43 1183.53,463.8 1185.89,462.17 1188.23,460.54 1190.55,458.91 1192.84,457.29 1195.11,455.66 1197.36,454.03 1199.59,452.4 1201.79,450.77 1203.97,449.14 1206.13,447.51 1208.27,445.88 1210.38,444.25 1212.47,442.62 1214.53,441 1216.58,439.37 1218.59,437.74 1220.59,436.11 1222.56,434.48 1224.5,432.85 1226.42,431.22 1228.32,429.59 1230.19,427.96 1232.03,426.33 1233.85,424.71 1235.65,423.08 1237.42,421.45 1239.16,419.82 1240.88,418.19 1242.57,416.56 1244.24,414.93 1245.88,413.3 1247.5,411.67 1249.09,410.04 1250.65,408.42 1252.18,406.79 1253.69,405.16 1255.17,403.53 1256.63,401.9 1258.06,400.27 1259.46,398.64 1260.83,397.01 1262.18,395.38 1263.5,393.75 1264.79,392.13 1266.06,390.5 1267.29,388.87 1268.5,387.24 1269.68,385.61 1270.84,383.98 1271.96,382.35 1273.06,380.72 1274.13,379.09 1275.17,377.46 1276.18,375.84 1277.16,374.21 1278.11,372.58 1279.04,370.95 1279.94,369.32 1280.81,367.69 1281.65,366.06 1282.46,364.43 1283.24,362.8 1283.99,361.18 1284.72,359.55 1285.41,357.92 1286.08,356.29 1286.71,354.66 1287.32,353.03 1287.9,351.4 1288.45,349.77 1288.97,348.14 1289.46,346.51 1289.92,344.88 1290.35,343.26 1290.75,341.63 1291.12,340 1291.46,338.37 1291.77,336.74 1292.05,335.11 1292.31,333.48 1292.53,331.85 1292.72,330.22 1292.89,328.59 1293.02,326.97 1293.13,325.34 1293.2,323.71 1293.25,322.08 1293.26,320.45 1293.25,318.82 1293.2,317.19 1293.13,315.56 1293.02,313.93 1292.89,312.31 1292.72,310.68 1292.53,309.05 1292.31,307.42 1292.05,305.79 1291.77,304.16 1291.46,302.53 1291.12,300.9 1290.75,299.27 1290.35,297.64 1289.92,296.01 1289.46,294.39 1288.97,292.76 1288.45,291.13 1287.9,289.5 1287.32,287.87 1286.71,286.24 1286.08,284.61 1285.41,282.98 1284.72,281.35 1283.99,279.72 1283.24,278.1 1282.46,276.47 1281.65,274.84 1280.81,273.21 1279.94,271.58 1279.04,269.95 1278.11,268.32 1277.16,266.69 1276.18,265.06 1275.17,263.44 1274.13,261.81 1273.06,260.18 1271.96,258.55 1270.84,256.92 1269.68,255.29 1268.5,253.66 1267.29,252.03 1266.06,250.4 1264.79,248.77 1263.5,247.14 1262.18,245.52 1260.83,243.89 1259.46,242.26 1258.06,240.63 1256.63,239 1255.17,237.37 1253.69,235.74 1252.18,234.11 1250.65,232.48 1249.09,230.85 1247.5,229.23 1245.88,227.6 1244.24,225.97 1242.57,224.34 1240.88,222.71 1239.16,221.08 1237.42,219.45 1235.65,217.82 1233.85,216.19 1232.03,214.56 1230.19,212.94 1228.32,211.31 1226.42,209.68 1224.5,208.05 1222.56,206.42 1220.59,204.79 1218.59,203.16 1216.58,201.53 1214.53,199.9 1212.47,198.27 1210.38,196.65 1208.27,195.02 1206.13,193.39 1203.97,191.76 1201.79,190.13 1199.59,188.5 1197.36,186.87 1195.11,185.24 1192.84,183.61 1190.55,181.98 1188.23,180.36 1185.89,178.73 1183.53,177.1 1181.15,175.47 1178.75,173.84 1176.33,172.21 1173.88,170.58 1171.42,168.95 1168.93,167.32 1166.43,165.69 1163.9,164.07 1161.36,162.44 1158.79,160.81 1156.21,159.18 1153.6,157.55 1150.98,155.92 1148.34,154.29 1145.68,152.66 1143,151.03 1140.3,149.41 1137.59,147.78 1134.85,146.15 1132.1,144.52 1129.33,142.89 1126.55,141.26 1123.74,139.63 1120.92,138 1118.09,136.37 1115.23,134.74 1112.36,133.11 1109.48,131.49 1106.58,129.86 1103.66,128.23 1100.73,126.6 1097.78,124.97 1094.82,123.34 1091.84,121.71 1088.85,120.08 1085.84,118.45 1082.83,116.82 1079.79,115.2 1076.75,113.57 1073.69,111.94 1070.61,110.31 1067.53,108.68 1064.43,107.05 1061.32,105.42 1058.19,103.79 1055.06,102.16 1051.91,100.53 1048.76,98.91 1045.59,97.28 1042.41,95.65 1039.22,94.02 1036.02,92.39 1032.81,90.76 1029.58,89.13 1026.35,87.5 1023.11,85.87 1019.86,84.24 1016.61,82.62 1013.34,80.99 1010.06,79.36 1006.78,77.73 1003.49,76.1 1000.19,74.47 996.88,72.84 993.57,71.21 990.25,69.58 986.92,67.95 983.59,66.33 980.24,64.7 976.9,63.07 973.55,61.44 970.19,59.81 966.83,58.18 963.46,56.55 960.09,54.92 956.71,53.29 953.33,51.66 949.95,50.04 946.56,48.41 943.17,46.78 939.77,45.15 936.37,43.52 932.97,41.89 929.57,40.26 926.17,38.63 922.76,37 919.35,35.38 915.94,33.75 912.53,32.12 909.12,30.49 905.71,28.86 902.3,27.23"/><polyline points="902.3,613.67 905.29,612.04 908.27,610.41 911.25,608.78 914.24,607.15 917.22,605.52 920.2,603.9 923.18,602.27 926.16,600.64 929.14,599.01 932.12,597.38 935.09,595.75 938.06,594.12 941.03,592.49 943.99,590.86 946.95,589.24 949.91,587.61 952.86,585.98 955.81,584.35 958.76,582.72 961.7,581.09 964.64,579.46 967.57,577.83 970.5,576.2 973.42,574.57 976.34,572.94 979.25,571.32 982.16,569.69 985.06,568.06 987.95,566.43 990.84,564.8 993.72,563.17 996.59,561.54 999.46,559.91 1002.32,558.28 1005.17,556.65 1008.01,555.03 1010.85,553.4 1013.67,551.77 1016.49,550.14 1019.3,548.51 1022.1,546.88 1024.89,545.25 1027.68,543.62 1030.45,541.99 1033.21,540.37 1035.97,538.74 1038.71,537.11 1041.44,535.48 1044.16,533.85 1046.87,532.22 1049.57,530.59 1052.26,528.96 1054.94,527.33 1057.61,525.7 1060.26,524.08 1062.9,522.45 1065.53,520.82 1068.15,519.19 1070.75,517.56 1073.35,515.93 1075.92,514.3 1078.49,512.67 1081.04,511.04 1083.58,509.41 1086.1,507.78 1088.62,506.16 1091.11,504.53 1093.59,502.9 1096.06,501.27 1098.51,499.64 1100.95,498.01 1103.38,496.38 1105.78,494.75 1108.17,493.12 1110.55,491.5 1112.91,489.87 1115.26,488.24 1117.58,486.61 1119.9,484.98 1122.19,483.35 1124.47,481.72 1126.73,480.09 1128.98,478.46 1131.2,476.83 1133.41,475.2 1135.6,473.58 1137.78,471.95 1139.94,470.32 1142.07,468.69 1144.19,467.06 1146.3,465.43 1148.38,463.8 1150.44,462.17 1152.49,460.54 1154.52,458.91 1156.52,457.29 1158.51,455.66 1160.48,454.03 1162.43,452.4 1164.36,450.77 1166.27,449.14 1168.15,447.51 1170.02,445.88 1171.87,444.25 1173.7,442.62 1175.51,441 1177.29,439.37 1179.06,437.74 1180.8,436.11 1182.52,434.48 1184.23,432.85 1185.91,431.22 1187.56,429.59 1189.2,427.96 1190.82,426.33 1192.41,424.71 1193.98,423.08 1195.53,421.45 1197.05,419.82 1198.56,418.19 1200.04,416.56 1201.5,414.93 1202.93,413.3 1204.35,411.67 1205.74,410.04 1207.1,408.42 1208.45,406.79 1209.77,405.16 1211.07,403.53 1212.34,401.9 1213.59,400.27 1214.81,398.64 1216.02,397.01 1217.2,395.38 1218.35,393.75 1219.48,392.13 1220.59,390.5 1221.67,388.87 1222.73,387.24 1223.76,385.61 1224.77,383.98 1225.75,382.35 1226.71,380.72 1227.65,379.09 1228.56,377.46 1229.44,375.84 1230.3,374.21 1231.14,372.58 1231.95,370.95 1232.73,369.32 1233.49,367.69 1234.23,366.06 1234.94,364.43 1235.62,362.8 1236.28,361.18 1236.91,359.55 1237.52,357.92 1238.1,356.29 1238.66,354.66 1239.19,353.03 1239.7,351.4 1240.18,349.77 1240.63,348.14 1241.06,346.51 1241.46,344.88 1241.84,343.26 1242.19,341.63 1242.52,340 1242.82,338.37 1243.09,336.74 1243.34,335.11 1243.56,333.48 1243.75,331.85 1243.92,330.22 1244.06,328.59 1244.18,326.97 1244.27,325.34 1244.34,323.71 1244.38,322.08 1244.39,320.45 1244.38,318.82 1244.34,317.19 1244.27,315.56 1244.18,313.93 1244.06,312.31 1243.92,310.68 1243.75,309.05 1243.56,307.42 1243.34,305.79 1243.09,304.16 1242.82,302.53 1242.52,300.9 1242.19,299.27 1241.84,297.64 1241.46,296.01 1241.06,294.39 1240.63,292.76 1240.18,291.13 1239.7,289.5 1239.19,287.87 1238.66,286.24 1238.1,284.61 1237.52,282.98 1236.91,281.35 1236.28,279.72 1235.62,278.1 1234.94,276.47 1234.23,274.84 1233.49,273.21 1232.73,271.58 1231.95,269.95 1231.14,268.32 1230.3,266.69 1229.44,265.06 1228.56,263.44 1227.65,261.81 1226.71,260.18 1225.75,258.55 1224.77,256.92 1223.76,255.29 1222.73,253.66 1221.67,252.03 1220.59,250.4 1219.48,248.77 1218.35,247.14 1217.2,245.52 1216.02,243.89 1214.81,242.26 1213.59,240.63 1212.34,239 1211.07,237.37 1209.77,235.74 1208.45,234.11 1207.1,232.48 1205.74,230.85 1204.35,229.23 1202.93,227.6 1201.5,225.97 1200.04,224.34 1198.56,222.71 1197.05,221.08 1195.53,219.45 1193.98,217.82 1192.41,216.19 1190.82,214.56 1189.2,212.94 1187.56,211.31 1185.91,209.68 1184.23,208.05 1182.52,206.42 1180.8,204.79 1179.06,203.16 1177.29,201.53 1175.51,199.9 1173.7,198.27 1171.87,196.65 1170.02,195.02 1168.15,193.39 1166.27,191.76 1164.36,190.13 1162.43,188.5 1160.48,186.87 1158.51,185.24 1156.52,183.61 1154.52,181.98 1152.49,180.36 1150.44,178.73 1148.38,177.1 1146.3,175.47 1144.19,173.84 1142.07,172.21 1139.94,170.58 1137.78,168.95 1135.6,167.32 1133.41,165.69 1131.2,164.07 1128.98,162.44 1126.73,160.81 1124.47,159.18 1122.19,157.55 1119.9,155.92 1117.58,154.29 1115.26,152.66 1112.91,151.03 1110.55,149.41 1108.17,147.78 1105.78,146.15 1103.38,144.52 1100.95,142.89 1098.51,141.26 1096.06,139.63 1093.59,138 1091.11,136.37 1088.62,134.74 1086.1,133.11 1083.58,131.49 1081.04,129.86 1078.49,128.23 1075.92,126.6 1073.35,124.97 1070.75,123.34 1068.15,121.71 1065.53,120.08 1062.9,118.45 1060.26,116.82 1057.61,115.2 1054.94,113.57 1052.26,111.94 1049.57,110.31 1046.87,108.68 1044.16,107.05 1041.44,105.42 1038.71,103.79 1035.97,102.16 1033.21,100.53 1030.45,98.91 1027.68,97.28 1024.89,95.65 1022.1,94.02 1019.3,92.39 1016.49,90.76 1013.67,89.13 1010.85,87.5 1008.01,85.87 1005.17,84.24 1002.32,82.62 999.46,80.99 996.59,79.36 993.72,77.73 990.84,76.1 987.95,74.47 985.06,72.84 982.16,71.21 979.25,69.58 976.34,67.95 973.42,66.33 970.5,64.7 967.57,63.07 964.64,61.44 961.7,59.81 958.76,58.18 955.81,56.55 952.86,54.92 949.91,53.29 946.95,51.66 943.99,50.04 941.03,48.41 938.06,46.78 935.09,45.15 932.12,43.52 929.14,41.89 926.16,40.26 923.18,38.63 920.2,37 917.22,35.38 914.24,33.75 911.25,32.12 908.27,30.49 905.29,28.86 902.3,27.23"/><polyline points="902.3,613.67 904.86,612.04 907.42,610.41 909.98,608.78 912.53,607.15 915.09,605.52 917.65,603.9 920.2,602.27 922.75,600.64 925.31,599.01 927.86,597.38 930.4,595.75 932.95,594.12 935.49,592.49 938.03,590.86 940.57,589.24 943.11,587.61 945.64,585.98 948.17,584.35 950.7,582.72 953.22,581.09 955.74,579.46 958.25,577.83 960.76,576.2 963.26,574.57 965.76,572.94 968.26,571.32 970.75,569.69 973.24,568.06 975.72,566.43 978.19,564.8 980.66,563.17 983.12,561.54 985.58,559.91 988.03,558.28 990.47,556.65 992.91,555.03 995.34,553.4 997.76,551.77 1000.18,550.14 1002.59,548.51 1004.99,546.88 1007.38,545.25 1009.77,543.62 1012.14,541.99 1014.51,540.37 1016.87,538.74 1019.22,537.11 1021.56,535.48 1023.9,533.85 1026.22,532.22 1028.53,530.59 1030.84,528.96 1033.13,527.33 1035.42,525.7 1037.69,524.08 1039.96,522.45 1042.21,520.82 1044.46,519.19 1046.69,517.56 1048.91,515.93 1051.12,514.3 1053.32,512.67 1055.51,511.04 1057.68,509.41 1059.85,507.78 1062,506.16 1064.14,504.53 1066.27,502.9 1068.38,501.27 1070.48,499.64 1072.57,498.01 1074.65,496.38 1076.71,494.75 1078.76,493.12 1080.8,491.5 1082.82,489.87 1084.83,488.24 1086.83,486.61 1088.81,484.98 1090.78,483.35 1092.73,481.72 1094.67,480.09 1096.59,478.46 1098.5,476.83 1100.4,475.2 1102.28,473.58 1104.14,471.95 1105.99,470.32 1107.82,468.69 1109.64,467.06 1111.44,465.43 1113.22,463.8 1114.99,462.17 1116.75,460.54 1118.48,458.91 1120.2,457.29 1121.91,455.66 1123.6,454.03 1125.27,452.4 1126.92,450.77 1128.56,449.14 1130.17,447.51 1131.78,445.88 1133.36,444.25 1134.93,442.62 1136.48,441 1138.01,439.37 1139.52,437.74 1141.01,436.11 1142.49,434.48 1143.95,432.85 1145.39,431.22 1146.81,429.59 1148.21,427.96 1149.6,426.33 1150.96,424.71 1152.31,423.08 1153.64,421.45 1154.95,419.82 1156.24,418.19 1157.51,416.56 1158.76,414.93 1159.99,413.3 1161.2,411.67 1162.39,410.04 1163.56,408.42 1164.71,406.79 1165.84,405.16 1166.96,403.53 1168.05,401.9 1169.12,400.27 1170.17,398.64 1171.2,397.01 1172.21,395.38 1173.2,393.75 1174.17,392.13 1175.12,390.5 1176.04,388.87 1176.95,387.24 1177.84,385.61 1178.7,383.98 1179.54,382.35 1180.37,380.72 1181.17,379.09 1181.95,377.46 1182.71,375.84 1183.45,374.21 1184.16,372.58 1184.86,370.95 1185.53,369.32 1186.18,367.69 1186.81,366.06 1187.42,364.43 1188,362.8 1188.57,361.18 1189.11,359.55 1189.63,357.92 1190.13,356.29 1190.61,354.66 1191.07,353.03 1191.5,351.4 1191.91,349.77 1192.3,348.14 1192.67,346.51 1193.01,344.88 1193.33,343.26 1193.64,341.63 1193.91,340 1194.17,338.37 1194.4,336.74 1194.62,335.11 1194.81,333.48 1194.97,331.85 1195.12,330.22 1195.24,328.59 1195.34,326.97 1195.42,325.34 1195.48,323.71 1195.51,322.08 1195.52,320.45 1195.51,318.82 1195.48,317.19 1195.42,315.56 1195.34,313.93 1195.24,312.31 1195.12,310.68 1194.97,309.05 1194.81,307.42 1194.62,305.79 1194.4,304.16 1194.17,302.53 1193.91,300.9 1193.64,299.27 1193.33,297.64 1193.01,296.01 1192.67,294.39 1192.3,292.76 1191.91,291.13 1191.5,289.5 1191.07,287.87 1190.61,286.24 1190.13,284.61 1189.63,282.98 1189.11,281.35 1188.57,279.72 1188,278.1 1187.42,276.47 1186.81,274.84 1186.18,273.21 1185.53,271.58 1184.86,269.95 1184.16,268.32 1183.45,266.69 1182.71,265.06 1181.95,263.44 1181.17,261.81 1180.37,260.18 1179.54,258.55 1178.7,256.92 1177.84,255.29 1176.95,253.66 1176.04,252.03 1175.12,250.4 1174.17,248.77 1173.2,247.14 1172.21,245.52 1171.2,243.89 1170.17,242.26 1169.12,240.63 1168.05,239 1166.96,237.37 1165.84,235.74 1164.71,234.11 1163.56,232.48 1162.39,230.85 1161.2,229.23 1159.99,227.6 1158.76,225.97 1157.51,224.34 1156.24,222.71 1154.95,221.08 1153.64,219.45 1152.31,217.82 1150.96,216.19 1149.6,214.56 1148.21,212.94 1146.81,211.31 1145.39,209.68 1143.95,208.05 1142.49,206.42 1141.01,204.79 1139.52,203.16 1138.01,201.53 1136.48,199.9 1134.93,198.27 1133.36,196.65 1131.78,195.02 1130.17,193.39 1128.56,191.76 1126.92,190.13 1125.27,188.5 1123.6,186.87 1121.91,185.24 1120.2,183.61 1118.48,181.98 1116.75,180.36 1114.99,178.73 1113.22,177.1 1111.44,175.47 1109.64,173.84 1107.82,172.21 1105.99,170.58 1104.14,168.95 1102.28,167.32 1100.4,165.69 1098.5,164.07 1096.59,162.44 1094.67,160.81 1092.73,159.18 1090.78,157.55 1088.81,155.92 1086.83,154.29 1084.83,152.66 1082.82,151.03 1080.8,149.41 1078.76,147.78 1076.71,146.15 1074.65,144.52 1072.57,142.89 1070.48,141.26 1068.38,139.63 1066.27,138 1064.14,136.37 1062,134.74 1059.85,133.11 1057.68,131.49 1055.51,129.86 1053.32,128.23 1051.12,126.6 1048.91,124.97 1046.69,123.34 1044.46,121.71 1042.21,120.08 1039.96,118.45 1037.69,116.82 1035.42,115.2 1033.13,113.57 1030.84,111.94 1028.53,110.31 1026.22,108.68 1023.9,107.05 1021.56,105.42 1019.22,103.79 1016.87,102.16 1014.51,100.53 1012.14,98.91 1009.77,97.28 1007.38,95.65 1004.99,94.02 1002.59,92.39 1000.18,90.76 997.76,89.13 995.34,87.5 992.91,85.87 990.47,84.24 988.03,82.62 985.58,80.99 983.12,79.36 980.66,77.73 978.19,76.1 975.72,74.47 973.24,72.84 970.75,71.21 968.26,69.58 965.76,67.95 963.26,66.33 960.76,64.7 958.25,63.07 955.74,61.44 953.22,59.81 950.7,58.18 948.17,56.55 945.64,54.92 943.11,53.29 940.57,51.66 938.03,50.04 935.49,48.41 932.95,46.78 930.4,45.15 927.86,43.52 925.31,41.89 922.75,40.26 920.2,38.63 917.65,37 915.09,35.38 912.53,33.75 909.98,32.12 907.42,30.49 904.86,28.86 902.3,27.23"/><polyline points="902.3,613.67 904.43,612.04 906.56,610.41 908.7,608.78 910.83,607.15 912.96,605.52 915.09,603.9 917.22,602.27 919.34,600.64 921.47,599.01 923.6,597.38 925.72,595.75 927.84,594.12 929.96,592.49 932.08,590.86 934.19,589.24 936.31,587.61 938.42,585.98 940.52,584.35 942.63,582.72 944.73,581.09 946.83,579.46 948.92,577.83 951.02,576.2 953.1,574.57 955.19,572.94 957.27,571.32 959.34,569.69 961.41,568.06 963.48,566.43 965.54,564.8 967.6,563.17 969.65,561.54 971.7,559.91 973.74,558.28 975.78,556.65 977.81,555.03 979.83,553.4 981.85,551.77 983.87,550.14 985.87,548.51 987.87,546.88 989.87,545.25 991.85,543.62 993.84,541.99 995.81,540.37 997.78,538.74 999.73,537.11 1001.69,535.48 1003.63,533.85 1005.57,532.22 1007.5,530.59 1009.42,528.96 1011.33,527.33 1013.23,525.7 1015.13,524.08 1017.02,522.45 1018.89,520.82 1020.76,519.19 1022.62,517.56 1024.47,515.93 1026.32,514.3 1028.15,512.67 1029.97,511.04 1031.79,509.41 1033.59,507.78 1035.38,506.16 1037.17,504.53 1038.94,502.9 1040.7,501.27 1042.45,499.64 1044.19,498.01 1045.93,496.38 1047.64,494.75 1049.35,493.12 1051.05,491.5 1052.74,489.87 1054.41,488.24 1056.07,486.61 1057.73,484.98 1059.37,483.35 1060.99,481.72 1062.61,480.09 1064.21,478.46 1065.8,476.83 1067.38,475.2 1068.95,473.58 1070.5,471.95 1072.04,470.32 1073.57,468.69 1075.08,467.06 1076.58,465.43 1078.07,463.8 1079.55,462.17 1081.01,460.54 1082.45,458.91 1083.89,457.29 1085.31,455.66 1086.71,454.03 1088.11,452.4 1089.48,450.77 1090.85,449.14 1092.2,447.51 1093.53,445.88 1094.85,444.25 1096.16,442.62 1097.45,441 1098.72,439.37 1099.98,437.74 1101.23,436.11 1102.46,434.48 1103.68,432.85 1104.88,431.22 1106.06,429.59 1107.23,427.96 1108.38,426.33 1109.52,424.71 1110.64,423.08 1111.75,421.45 1112.84,419.82 1113.91,418.19 1114.97,416.56 1116.01,414.93 1117.04,413.3 1118.05,411.67 1119.04,410.04 1120.02,408.42 1120.98,406.79 1121.92,405.16 1122.85,403.53 1123.76,401.9 1124.65,400.27 1125.52,398.64 1126.38,397.01 1127.23,395.38 1128.05,393.75 1128.86,392.13 1129.65,390.5 1130.42,388.87 1131.18,387.24 1131.91,385.61 1132.63,383.98 1133.34,382.35 1134.02,380.72 1134.69,379.09 1135.34,377.46 1135.97,375.84 1136.59,374.21 1137.18,372.58 1137.76,370.95 1138.32,369.32 1138.87,367.69 1139.39,366.06 1139.9,364.43 1140.39,362.8 1140.86,361.18 1141.31,359.55 1141.74,357.92 1142.16,356.29 1142.56,354.66 1142.94,353.03 1143.3,351.4 1143.64,349.77 1143.97,348.14 1144.27,346.51 1144.56,344.88 1144.83,343.26 1145.08,341.63 1145.31,340 1145.53,338.37 1145.72,336.74 1145.9,335.11 1146.05,333.48 1146.19,331.85 1146.32,330.22 1146.42,328.59 1146.5,326.97 1146.57,325.34 1146.61,323.71 1146.64,322.08 1146.65,320.45 1146.64,318.82 1146.61,317.19 1146.57,315.56 1146.5,313.93 1146.42,312.31 1146.32,310.68 1146.19,309.05 1146.05,307.42 1145.9,305.79 1145.72,304.16 1145.53,302.53 1145.31,300.9 1145.08,299.27 1144.83,297.64 1144.56,296.01 1144.27,294.39 1143.97,292.76 1143.64,291.13 1143.3,289.5 1142.94,287.87 1142.56,286.24 1142.16,284.61 1141.74,282.98 1141.31,281.35 1140.86,279.72 1140.39,278.1 1139.9,276.47 1139.39,274.84 1138.87,273.21 1138.32,271.58 1137.76,269.95 1137.18,268.32 1136.59,266.69 1135.97,265.06 1135.34,263.44 1134.69,261.81 1134.02,260.18 1133.34,258.55 1132.63,256.92 1131.91,255.29 1131.18,253.66 1130.42,252.03 1129.65,250.4 1128.86,248.77 1128.05,247.14 1127.23,245.52 1126.38,243.89 1125.52,242.26 1124.65,240.63 1123.76,239 1122.85,237.37 1121.92,235.74 1120.98,234.11 1120.02,232.48 1119.04,230.85 1118.05,229.23 1117.04,227.6 1116.01,225.97 1114.97,224.34 1113.91,222.71 1112.84,221.08 1111.75,219.45 1110.64,217.82 1109.52,216.19 1108.38,214.56 1107.23,212.94 1106.06,211.31 1104.88,209.68 1103.68,208.05 1102.46,206.42 1101.23,204.79 1099.98,203.16 1098.72,201.53 1097.45,199.9 1096.16,198.27 1094.85,196.65 1093.53,195.02 1092.2,193.39 1090.85,191.76 1089.48,190.13 1088.11,188.5 1086.71,186.87 1085.31,185.24 1083.89,183.61 1082.45,181.98 1081.01,180.36 1079.55,178.73 1078.07,177.1 1076.58,175.47 1075.08,173.84 1073.57,172.21 1072.04,170.58 1070.5,168.95 1068.95,167.32 1067.38,165.69 1065.8,164.07 1064.21,162.44 1062.61,160.81 1060.99,159.18 1059.37,157.55 1057.73,155.92 1056.07,154.29 1054.41,152.66 1052.74,151.03 1051.05,149.41 1049.35,147.78 1047.64,146.15 1045.93,144.52 1044.19,142.89 1042.45,141.26 1040.7,139.63 1038.94,138 1037.17,136.37 1035.38,134.74 1033.59,133.11 1031.79,131.49 1029.97,129.86 1028.15,128.23 1026.32,126.6 1024.47,124.97 1022.62,123.34 1020.76,121.71 1018.89,120.08 1017.02,118.45 1015.13,116.82 1013.23,115.2 1011.33,113.57 1009.42,111.94 1007.5,110.31 1005.57,108.68 1003.63,107.05 1001.69,105.42 999.73,103.79 997.78,102.16 995.81,100.53 993.84,98.91 991.85,97.28 989.87,95.65 987.87,94.02 985.87,92.39 983.87,90.76 981.85,89.13 979.83,87.5 977.81,85.87 975.78,84.24 973.74,82.62 971.7,80.99 969.65,79.36 967.6,77.73 965.54,76.1 963.48,74.47 961.41,72.84 959.34,71.21 957.27,69.58 955.19,67.95 953.1,66.33 951.02,64.7 948.92,63.07 946.83,61.44 944.73,59.81 942.63,58.18 940.52,56.55 938.42,54.92 936.31,53.29 934.19,51.66 932.08,50.04 929.96,48.41 927.84,46.78 925.72,45.15 923.6,43.52 921.47,41.89 919.34,40.26 917.22,38.63 915.09,37 912.96,35.38 910.83,33.75 908.7,32.12 906.56,30.49 904.43,28.86 902.3,27.23"/><polyline points="902.3,613.67 904.01,612.04 905.71,610.41 907.42,608.78 909.12,607.15 910.83,605.52 912.53,603.9 914.23,602.27 915.94,600.64 917.64,599.01 919.34,597.38 921.04,595.75 922.73,594.12 924.43,592.49 926.12,590.86 927.82,589.24 929.51,587.61 931.19,585.98 932.88,584.35 934.56,582.72 936.24,581.09 937.92,579.46 939.6,577.83 941.27,576.2 942.94,574.57 944.61,572.94 946.27,571.32 947.93,569.69 949.59,568.06 951.24,566.43 952.89,564.8 954.54,563.17 956.18,561.54 957.82,559.91 959.45,558.28 961.08,556.65 962.71,555.03 964.33,553.4 965.94,551.77 967.55,550.14 969.16,548.51 970.76,546.88 972.35,545.25 973.94,543.62 975.53,541.99 977.11,540.37 978.68,538.74 980.25,537.11 981.81,535.48 983.36,533.85 984.91,532.22 986.46,530.59 987.99,528.96 989.52,527.33 991.05,525.7 992.56,524.08 994.07,522.45 995.57,520.82 997.07,519.19 998.56,517.56 1000.04,515.93 1001.51,514.3 1002.98,512.67 1004.44,511.04 1005.89,509.41 1007.33,507.78 1008.77,506.16 1010.19,504.53 1011.61,502.9 1013.02,501.27 1014.42,499.64 1015.82,498.01 1017.2,496.38 1018.58,494.75 1019.94,493.12 1021.3,491.5 1022.65,489.87 1023.99,488.24 1025.32,486.61 1026.64,484.98 1027.95,483.35 1029.25,481.72 1030.55,480.09 1031.83,478.46 1033.1,476.83 1034.36,475.2 1035.62,473.58 1036.86,471.95 1038.09,470.32 1039.31,468.69 1040.53,467.06 1041.73,465.43 1042.92,463.8 1044.1,462.17 1045.27,460.54 1046.42,458.91 1047.57,457.29 1048.71,455.66 1049.83,454.03 1050.94,452.4 1052.05,450.77 1053.14,449.14 1054.22,447.51 1055.28,445.88 1056.34,444.25 1057.38,442.62 1058.42,441 1059.44,439.37 1060.45,437.74 1061.44,436.11 1062.43,434.48 1063.4,432.85 1064.36,431.22 1065.31,429.59 1066.24,427.96 1067.17,426.33 1068.08,424.71 1068.97,423.08 1069.86,421.45 1070.73,419.82 1071.59,418.19 1072.44,416.56 1073.27,414.93 1074.09,413.3 1074.9,411.67 1075.69,410.04 1076.47,408.42 1077.24,406.79 1078,405.16 1078.74,403.53 1079.47,401.9 1080.18,400.27 1080.88,398.64 1081.57,397.01 1082.24,395.38 1082.9,393.75 1083.55,392.13 1084.18,390.5 1084.8,388.87 1085.4,387.24 1085.99,385.61 1086.57,383.98 1087.13,382.35 1087.68,380.72 1088.21,379.09 1088.73,377.46 1089.24,375.84 1089.73,374.21 1090.21,372.58 1090.67,370.95 1091.12,369.32 1091.55,367.69 1091.97,366.06 1092.38,364.43 1092.77,362.8 1093.15,361.18 1093.51,359.55 1093.86,357.92 1094.19,356.29 1094.51,354.66 1094.81,353.03 1095.1,351.4 1095.37,349.77 1095.63,348.14 1095.88,346.51 1096.11,344.88 1096.32,343.26 1096.52,341.63 1096.71,340 1096.88,338.37 1097.04,336.74 1097.18,335.11 1097.3,333.48 1097.42,331.85 1097.51,330.22 1097.59,328.59 1097.66,326.97 1097.71,325.34 1097.75,323.71 1097.77,322.08 1097.78,320.45 1097.77,318.82 1097.75,317.19 1097.71,315.56 1097.66,313.93 1097.59,312.31 1097.51,310.68 1097.42,309.05 1097.3,307.42 1097.18,305.79 1097.04,304.16 1096.88,302.53 1096.71,300.9 1096.52,299.27 1096.32,297.64 1096.11,296.01 1095.88,294.39 1095.63,292.76 1095.37,291.13 1095.1,289.5 1094.81,287.87 1094.51,286.24 1094.19,284.61 1093.86,282.98 1093.51,281.35 1093.15,279.72 1092.77,278.1 1092.38,276.47 1091.97,274.84 1091.55,273.21 1091.12,271.58 1090.67,269.95 1090.21,268.32 1089.73,266.69 1089.24,265.06 1088.73,263.44 1088.21,261.81 1087.68,260.18 1087.13,258.55 1086.57,256.92 1085.99,255.29 1085.4,253.66 1084.8,252.03 1084.18,250.4 1083.55,248.77 1082.9,247.14 1082.24,245.52 1081.57,243.89 1080.88,242.26 1080.18,240.63 1079.47,239 1078.74,237.37 1078,235.74 1077.24,234.11 1076.47,232.48 1075.69,230.85 1074.9,229.23 1074.09,227.6 1073.27,225.97 1072.44,224.34 1071.59,222.71 1070.73,221.08 1069.86,219.45 1068.97,217.82 1068.08,216.19 1067.17,214.56 1066.24,212.94 1065.31,211.31 1064.36,209.68 1063.4,208.05 1062.43,206.42 1061.44,204.79 1060.45,203.16 1059.44,201.53 1058.42,199.9 1057.38,198.27 1056.34,196.65 1055.28,195.02 1054.22,193.39 1053.14,191.76 1052.05,190.13 1050.94,188.5 1049.83,186.87 1048.71,185.24 1047.57,183.61 1046.42,181.98 1045.27,180.36 1044.1,178.73 1042.92,177.1 1041.73,175.47 1040.53,173.84 1039.31,172.21 1038.09,170.58 1036.86,168.95 1035.62,167.32 1034.36,165.69 1033.1,164.07 1031.83,162.44 1030.55,160.81 1029.25,159.18 1027.95,157.55 1026.64,155.92 1025.32,154.29 1023.99,152.66 1022.65,151.03 1021.3,149.41 1019.94,147.78 1018.58,146.15 1017.2,144.52 1015.82,142.89 1014.42,141.26 1013.02,139.63 1011.61,138 1010.19,136.37 1008.77,134.74 1007.33,133.11 1005.89,131.49 1004.44,129.86 1002.98,128.23 1001.51,126.6 1000.04,124.97 998.56,123.34 997.07,121.71 995.57,120.08 994.07,118.45 992.56,116.82 991.05,115.2 989.52,113.57 987.99,111.94 986.46,110.31 984.91,108.68 983.36,107.05 981.81,105.42 980.25,103.79 978.68,102.16 977.11,100.53 975.53,98.91 973.94,97.28 972.35,95.65 970.76,94.02 969.16,92.39 967.55,90.76 965.94,89.13 964.33,87.5 962.71,85.87 961.08,84.24 959.45,82.62 957.82,80.99 956.18,79.36 954.54,77.73 952.89,76.1 951.24,74.47 949.59,72.84 947.93,71.21 946.27,69.58 944.61,67.95 942.94,66.33 941.27,64.7 939.6,63.07 937.92,61.44 936.24,59.81 934.56,58.18 932.88,56.55 931.19,54.92 929.51,53.29 927.82,51.66 926.12,50.04 924.43,48.41 922.73,46.78 921.04,45.15 919.34,43.52 917.64,41.89 915.94,40.26 914.23,38.63 912.53,37 910.83,35.38 909.12,33.75 907.42,32.12 905.71,30.49 904.01,28.86 902.3,27.23"/><polyline points="902.3,613.67 903.58,612.04 904.86,610.41 906.14,608.78 907.42,607.15 908.7,605.52 909.97,603.9 911.25,602.27 912.53,600.64 913.8,599.01 915.08,597.38 916.35,595.75 917.62,594.12 918.9,592.49 920.17,590.86 921.44,589.24 922.7,587.61 923.97,585.98 925.23,584.35 926.5,582.72 927.76,581.09 929.02,579.46 930.27,577.83 931.53,576.2 932.78,574.57 934.03,572.94 935.28,571.32 936.53,569.69 937.77,568.06 939.01,566.43 940.25,564.8 941.48,563.17 942.71,561.54 943.94,559.91 945.16,558.28 946.39,556.65 947.6,555.03 948.82,553.4 950.03,551.77 951.24,550.14 952.44,548.51 953.64,546.88 954.84,545.25 956.03,543.62 957.22,541.99 958.41,540.37 959.59,538.74 960.76,537.11 961.93,535.48 963.1,533.85 964.26,532.22 965.42,530.59 966.57,528.96 967.72,527.33 968.86,525.7 970,524.08 971.13,522.45 972.26,520.82 973.38,519.19 974.49,517.56 975.61,515.93 976.71,514.3 977.81,512.67 978.9,511.04 979.99,509.41 981.07,507.78 982.15,506.16 983.22,504.53 984.28,502.9 985.34,501.27 986.39,499.64 987.44,498.01 988.48,496.38 989.51,494.75 990.53,493.12 991.55,491.5 992.56,489.87 993.57,488.24 994.56,486.61 995.56,484.98 996.54,483.35 997.52,481.72 998.48,480.09 999.45,478.46 1000.4,476.83 1001.35,475.2 1002.29,473.58 1003.22,471.95 1004.14,470.32 1005.06,468.69 1005.97,467.06 1006.87,465.43 1007.76,463.8 1008.65,462.17 1009.52,460.54 1010.39,458.91 1011.25,457.29 1012.1,455.66 1012.95,454.03 1013.78,452.4 1014.61,450.77 1015.43,449.14 1016.24,447.51 1017.04,445.88 1017.83,444.25 1018.61,442.62 1019.39,441 1020.15,439.37 1020.91,437.74 1021.66,436.11 1022.4,434.48 1023.13,432.85 1023.85,431.22 1024.56,429.59 1025.26,427.96 1025.95,426.33 1026.63,424.71 1027.31,423.08 1027.97,421.45 1028.62,419.82 1029.27,418.19 1029.9,416.56 1030.53,414.93 1031.14,413.3 1031.75,411.67 1032.34,410.04 1032.93,408.42 1033.51,406.79 1034.07,405.16 1034.63,403.53 1035.17,401.9 1035.71,400.27 1036.23,398.64 1036.75,397.01 1037.26,395.38 1037.75,393.75 1038.23,392.13 1038.71,390.5 1039.17,388.87 1039.63,387.24 1040.07,385.61 1040.5,383.98 1040.92,382.35 1041.33,380.72 1041.73,379.09 1042.12,377.46 1042.5,375.84 1042.87,374.21 1043.23,372.58 1043.58,370.95 1043.91,369.32 1044.24,367.69 1044.56,366.06 1044.86,364.43 1045.15,362.8 1045.43,361.18 1045.71,359.55 1045.97,357.92 1046.22,356.29 1046.46,354.66 1046.68,353.03 1046.9,351.4 1047.1,349.77 1047.3,348.14 1047.48,346.51 1047.66,344.88 1047.82,343.26 1047.97,341.63 1048.11,340 1048.24,338.37 1048.35,336.74 1048.46,335.11 1048.55,333.48 1048.64,331.85 1048.71,330.22 1048.77,328.59 1048.82,326.97 1048.86,325.34 1048.89,323.71 1048.9,322.08 1048.91,320.45 1048.9,318.82 1048.89,317.19 1048.86,315.56 1048.82,313.93 1048.77,312.31 1048.71,310.68 1048.64,309.05 1048.55,307.42 1048.46,305.79 1048.35,304.16 1048.24,302.53 1048.11,300.9 1047.97,299.27 1047.82,297.64 1047.66,296.01 1047.48,294.39 1047.3,292.76 1047.1,291.13 1046.9,289.5 1046.68,287.87 1046.46,286.24 1046.22,284.61 1045.97,282.98 1045.71,281.35 1045.43,279.72 1045.15,278.1 1044.86,276.47 1044.56,274.84 1044.24,273.21 1043.91,271.58 1043.58,269.95 1043.23,268.32 1042.87,266.69 1042.5,265.06 1042.12,263.44 1041.73,261.81 1041.33,260.18 1040.92,258.55 1040.5,256.92 1040.07,255.29 1039.63,253.66 1039.17,252.03 1038.71,250.4 1038.23,248.77 1037.75,247.14 1037.26,245.52 1036.75,243.89 1036.23,242.26 1035.71,240.63 1035.17,239 1034.63,237.37 1034.07,235.74 1033.51,234.11 1032.93,232.48 1032.34,230.85 1031.75,229.23 1031.14,227.6 1030.53,225.97 1029.9,224.34 1029.27,222.71 1028.62,221.08 1027.97,219.45 1027.31,217.82 1026.63,216.19 1025.95,214.56 1025.26,212.94 1024.56,211.31 1023.85,209.68 1023.13,208.05 1022.4,206.42 1021.66,204.79 1020.91,203.16 1020.15,201.53 1019.39,199.9 1018.61,198.27 1017.83,196.65 1017.04,195.02 1016.24,193.39 1015.43,191.76 1014.61,190.13 1013.78,188.5 1012.95,186.87 1012.1,185.24 1011.25,183.61 1010.39,181.98 1009.52,180.36 1008.65,178.73 1007.76,177.1 1006.87,175.47 1005.97,173.84 1005.06,172.21 1004.14,170.58 1003.22,168.95 1002.29,167.32 1001.35,165.69 1000.4,164.07 999.45,162.44 998.48,160.81 997.52,159.18 996.54,157.55 995.56,155.92 994.56,154.29 993.57,152.66 992.56,151.03 991.55,149.41 990.53,147.78 989.51,146.15 988.48,144.52 987.44,142.89 986.39,141.26 985.34,139.63 984.28,138 983.22,136.37 982.15,134.74 981.07,133.11 979.99,131.49 978.9,129.86 977.81,128.23 976.71,126.6 975.61,124.97 974.49,123.34 973.38,121.71 972.26,120.08 971.13,118.45 970,116.82 968.86,115.2 967.72,113.57 966.57,111.94 965.42,110.31 964.26,108.68 963.1,107.05 961.93,105.42 960.76,103.79 959.59,102.16 958.41,100.53 957.22,98.91 956.03,97.28 954.84,95.65 953.64,94.02 952.44,92.39 951.24,90.76 950.03,89.13 948.82,87.5 947.6,85.87 946.39,84.24 945.16,82.62 943.94,80.99 942.71,79.36 941.48,77.73 940.25,76.1 939.01,74.47 937.77,72.84 936.53,71.21 935.28,69.58 934.03,67.95 932.78,66.33 931.53,64.7 930.27,63.07 929.02,61.44 927.76,59.81 926.5,58.18 925.23,56.55 923.97,54.92 922.7,53.29 921.44,51.66 920.17,50.04 918.9,48.41 917.62,46.78 916.35,45.15 915.08,43.52 913.8,41.89 912.53,40.26 911.25,38.63 909.97,37 908.7,35.38 907.42,33.75 906.14,32.12 904.86,30.49 903.58,28.86 902.3,27.23"/><polyline points="902.3,613.67 903.15,612.04 904.01,610.41 904.86,608.78 905.71,607.15 906.56,605.52 907.42,603.9 908.27,602.27 909.12,600.64 909.97,599.01 910.82,597.38 911.67,595.75 912.52,594.12 913.36,592.49 914.21,590.86 915.06,589.24 915.9,587.61 916.75,585.98 917.59,584.35 918.43,582.72 919.27,581.09 920.11,579.46 920.95,577.83 921.79,576.2 922.62,574.57 923.45,572.94 924.29,571.32 925.12,569.69 925.95,568.06 926.77,566.43 927.6,564.8 928.42,563.17 929.24,561.54 930.06,559.91 930.88,558.28 931.69,556.65 932.5,555.03 933.31,553.4 934.12,551.77 934.93,550.14 935.73,548.51 936.53,546.88 937.33,545.25 938.12,543.62 938.91,541.99 939.7,540.37 940.49,538.74 941.27,537.11 942.05,535.48 942.83,533.85 943.61,532.22 944.38,530.59 945.15,528.96 945.91,527.33 946.67,525.7 947.43,524.08 948.19,522.45 948.94,520.82 949.69,519.19 950.43,517.56 951.17,515.93 951.91,514.3 952.64,512.67 953.37,511.04 954.09,509.41 954.82,507.78 955.53,506.16 956.25,504.53 956.96,502.9 957.66,501.27 958.36,499.64 959.06,498.01 959.75,496.38 960.44,494.75 961.12,493.12 961.8,491.5 962.47,489.87 963.14,488.24 963.81,486.61 964.47,484.98 965.13,483.35 965.78,481.72 966.42,480.09 967.06,478.46 967.7,476.83 968.33,475.2 968.96,473.58 969.58,471.95 970.2,470.32 970.81,468.69 971.41,467.06 972.01,465.43 972.61,463.8 973.2,462.17 973.78,460.54 974.36,458.91 974.93,457.29 975.5,455.66 976.07,454.03 976.62,452.4 977.17,450.77 977.72,449.14 978.26,447.51 978.79,445.88 979.32,444.25 979.84,442.62 980.36,441 980.87,439.37 981.37,437.74 981.87,436.11 982.36,434.48 982.85,432.85 983.33,431.22 983.8,429.59 984.27,427.96 984.73,426.33 985.19,424.71 985.64,423.08 986.08,421.45 986.52,419.82 986.95,418.19 987.37,416.56 987.79,414.93 988.2,413.3 988.6,411.67 989,410.04 989.39,408.42 989.77,406.79 990.15,405.16 990.52,403.53 990.88,401.9 991.24,400.27 991.59,398.64 991.93,397.01 992.27,395.38 992.6,393.75 992.92,392.13 993.24,390.5 993.55,388.87 993.85,387.24 994.15,385.61 994.43,383.98 994.71,382.35 994.99,380.72 995.26,379.09 995.52,377.46 995.77,375.84 996.02,374.21 996.25,372.58 996.49,370.95 996.71,369.32 996.93,367.69 997.14,366.06 997.34,364.43 997.53,362.8 997.72,361.18 997.9,359.55 998.08,357.92 998.24,356.29 998.4,354.66 998.56,353.03 998.7,351.4 998.84,349.77 998.97,348.14 999.09,346.51 999.2,344.88 999.31,343.26 999.41,341.63 999.5,340 999.59,338.37 999.67,336.74 999.74,335.11 999.8,333.48 999.86,331.85 999.91,330.22 999.95,328.59 999.98,326.97 1000.01,325.34 1000.03,323.71 1000.04,322.08 1000.04,320.45 1000.04,318.82 1000.03,317.19 1000.01,315.56 999.98,313.93 999.95,312.31 999.91,310.68 999.86,309.05 999.8,307.42 999.74,305.79 999.67,304.16 999.59,302.53 999.5,300.9 999.41,299.27 999.31,297.64 999.2,296.01 999.09,294.39 998.97,292.76 998.84,291.13 998.7,289.5 998.56,287.87 998.4,286.24 998.24,284.61 998.08,282.98 997.9,281.35 997.72,279.72 997.53,278.1 997.34,276.47 997.14,274.84 996.93,273.21 996.71,271.58 996.49,269.95 996.25,268.32 996.02,266.69 995.77,265.06 995.52,263.44 995.26,261.81 994.99,260.18 994.71,258.55 994.43,256.92 994.15,255.29 993.85,253.66 993.55,252.03 993.24,250.4 992.92,248.77 992.6,247.14 992.27,245.52 991.93,243.89 991.59,242.26 991.24,240.63 990.88,239 990.52,237.37 990.15,235.74 989.77,234.11 989.39,232.48 989,230.85 988.6,229.23 988.2,227.6 987.79,225.97 987.37,224.34 986.95,222.71 986.52,221.08 986.08,219.45 985.64,217.82 985.19,216.19 984.73,214.56 984.27,212.94 983.8,211.31 983.33,209.68 982.85,208.05 982.36,206.42 981.87,204.79 981.37,203.16 980.87,201.53 980.36,199.9 979.84,198.27 979.32,196.65 978.79,195.02 978.26,193.39 977.72,191.76 977.17,190.13 976.62,188.5 976.07,186.87 975.5,185.24 974.93,183.61 974.36,181.98 973.78,180.36 973.2,178.73 972.61,177.1 972.01,175.47 971.41,173.84 970.81,172.21 970.2,170.58 969.58,168.95 968.96,167.32 968.33,165.69 967.7,164.07 967.06,162.44 966.42,160.81 965.78,159.18 965.13,157.55 964.47,155.92 963.81,154.29 963.14,152.66 962.47,151.03 961.8,149.41 961.12,147.78 960.44,146.15 959.75,144.52 959.06,142.89 958.36,141.26 957.66,139.63 956.96,138 956.25,136.37 955.53,134.74 954.82,133.11 954.09,131.49 953.37,129.86 952.64,128.23 951.91,126.6 951.17,124.97 950.43,123.34 949.69,121.71 948.94,120.08 948.19,118.45 947.43,116.82 946.67,115.2 945.91,113.57 945.15,111.94 944.38,110.31 943.61,108.68 942.83,107.05 942.05,105.42 941.27,103.79 940.49,102.16 939.7,100.53 938.91,98.91 938.12,97.28 937.33,95.65 936.53,94.02 935.73,92.39 934.93,90.76 934.12,89.13 933.31,87.5 932.5,85.87 931.69,84.24 930.88,82.62 930.06,80.99 929.24,79.36 928.42,77.73 927.6,76.1 926.77,74.47 925.95,72.84 925.12,71.21 924.29,69.58 923.45,67.95 922.62,66.33 921.79,64.7 920.95,63.07 920.11,61.44 919.27,59.81 918.43,58.18 917.59,56.55 916.75,54.92 915.9,53.29 915.06,51.66 914.21,50.04 913.36,48.41 912.52,46.78 911.67,45.15 910.82,43.52 909.97,41.89 909.12,40.26 908.27,38.63 907.42,37 906.56,35.38 905.71,33.75 904.86,32.12 904.01,30.49 903.15,28.86 902.3,27.23"/><polyline points="902.3,613.67 902.73,612.04 903.15,610.41 903.58,608.78 904.01,607.15 904.43,605.52 904.86,603.9 905.28,602.27 905.71,600.64 906.13,599.01 906.56,597.38 906.98,595.75 907.41,594.12 907.83,592.49 908.26,590.86 908.68,589.24 909.1,587.61 909.52,585.98 909.94,584.35 910.37,582.72 910.79,581.09 911.21,579.46 911.62,577.83 912.04,576.2 912.46,574.57 912.88,572.94 913.29,571.32 913.71,569.69 914.12,568.06 914.54,566.43 914.95,564.8 915.36,563.17 915.77,561.54 916.18,559.91 916.59,558.28 917,556.65 917.4,555.03 917.81,553.4 918.21,551.77 918.61,550.14 919.01,548.51 919.41,546.88 919.81,545.25 920.21,543.62 920.61,541.99 921,540.37 921.4,538.74 921.79,537.11 922.18,535.48 922.57,533.85 922.95,532.22 923.34,530.59 923.72,528.96 924.11,527.33 924.49,525.7 924.87,524.08 925.24,522.45 925.62,520.82 925.99,519.19 926.36,517.56 926.74,515.93 927.1,514.3 927.47,512.67 927.83,511.04 928.2,509.41 928.56,507.78 928.92,506.16 929.27,504.53 929.63,502.9 929.98,501.27 930.33,499.64 930.68,498.01 931.03,496.38 931.37,494.75 931.71,493.12 932.05,491.5 932.39,489.87 932.72,488.24 933.05,486.61 933.39,484.98 933.71,483.35 934.04,481.72 934.36,480.09 934.68,478.46 935,476.83 935.32,475.2 935.63,473.58 935.94,471.95 936.25,470.32 936.55,468.69 936.86,467.06 937.16,465.43 937.45,463.8 937.75,462.17 938.04,460.54 938.33,458.91 938.62,457.29 938.9,455.66 939.18,454.03 939.46,452.4 939.74,450.77 940.01,449.14 940.28,447.51 940.55,445.88 940.81,444.25 941.07,442.62 941.33,441 941.58,439.37 941.84,437.74 942.09,436.11 942.33,434.48 942.58,432.85 942.82,431.22 943.05,429.59 943.29,427.96 943.52,426.33 943.74,424.71 943.97,423.08 944.19,421.45 944.41,419.82 944.62,418.19 944.83,416.56 945.04,414.93 945.25,413.3 945.45,411.67 945.65,410.04 945.84,408.42 946.04,406.79 946.22,405.16 946.41,403.53 946.59,401.9 946.77,400.27 946.94,398.64 947.12,397.01 947.29,395.38 947.45,393.75 947.61,392.13 947.77,390.5 947.92,388.87 948.08,387.24 948.22,385.61 948.37,383.98 948.51,382.35 948.64,380.72 948.78,379.09 948.91,377.46 949.03,375.84 949.16,374.21 949.28,372.58 949.39,370.95 949.5,369.32 949.61,367.69 949.72,366.06 949.82,364.43 949.92,362.8 950.01,361.18 950.1,359.55 950.19,357.92 950.27,356.29 950.35,354.66 950.43,353.03 950.5,351.4 950.57,349.77 950.63,348.14 950.69,346.51 950.75,344.88 950.81,343.26 950.86,341.63 950.9,340 950.95,338.37 950.98,336.74 951.02,335.11 951.05,333.48 951.08,331.85 951.1,330.22 951.12,328.59 951.14,326.97 951.15,325.34 951.16,323.71 951.17,322.08 951.17,320.45 951.17,318.82 951.16,317.19 951.15,315.56 951.14,313.93 951.12,312.31 951.1,310.68 951.08,309.05 951.05,307.42 951.02,305.79 950.98,304.16 950.95,302.53 950.9,300.9 950.86,299.27 950.81,297.64 950.75,296.01 950.69,294.39 950.63,292.76 950.57,291.13 950.5,289.5 950.43,287.87 950.35,286.24 950.27,284.61 950.19,282.98 950.1,281.35 950.01,279.72 949.92,278.1 949.82,276.47 949.72,274.84 949.61,273.21 949.5,271.58 949.39,269.95 949.28,268.32 949.16,266.69 949.03,265.06 948.91,263.44 948.78,261.81 948.64,260.18 948.51,258.55 948.37,256.92 948.22,255.29 948.08,253.66 947.92,252.03 947.77,250.4 947.61,248.77 947.45,247.14 947.29,245.52 947.12,243.89 946.94,242.26 946.77,240.63 946.59,239 946.41,237.37 946.22,235.74 946.04,234.11 945.84,232.48 945.65,230.85 945.45,229.23 945.25,227.6 945.04,225.97 944.83,224.34 944.62,222.71 944.41,221.08 944.19,219.45 943.97,217.82 943.74,216.19 943.52,214.56 943.29,212.94 943.05,211.31 942.82,209.68 942.58,208.05 942.33,206.42 942.09,204.79 941.84,203.16 941.58,201.53 941.33,199.9 941.07,198.27 940.81,196.65 940.55,195.02 940.28,193.39 940.01,191.76 939.74,190.13 939.46,188.5 939.18,186.87 938.9,185.24 938.62,183.61 938.33,181.98 938.04,180.36 937.75,178.73 937.45,177.1 937.16,175.47 936.86,173.84 936.55,172.21 936.25,170.58 935.94,168.95 935.63,167.32 935.32,165.69 935,164.07 934.68,162.44 934.36,160.81 934.04,159.18 933.71,157.55 933.39,155.92 933.05,154.29 932.72,152.66 932.39,151.03 932.05,149.41 931.71,147.78 931.37,146.15 931.03,144.52 930.68,142.89 930.33,141.26 929.98,139.63 929.63,138 929.27,136.37 928.92,134.74 928.56,133.11 928.2,131.49 927.83,129.86 927.47,128.23 927.1,126.6 926.74,124.97 926.36,123.34 925.99,121.71 925.62,120.08 925.24,118.45 924.87,116.82 924.49,115.2 924.11,113.57 923.72,111.94 923.34,110.31 922.95,108.68 922.57,107.05 922.18,105.42 921.79,103.79 921.4,102.16 921,100.53 920.61,98.91 920.21,97.28 919.81,95.65 919.41,94.02 919.01,92.39 918.61,90.76 918.21,89.13 917.81,87.5 917.4,85.87 917,84.24 916.59,82.62 916.18,80.99 915.77,79.36 915.36,77.73 914.95,76.1 914.54,74.47 914.12,72.84 913.71,71.21 913.29,69.58 912.88,67.95 912.46,66.33 912.04,64.7 911.62,63.07 911.21,61.44 910.79,59.81 910.37,58.18 909.94,56.55 909.52,54.92 909.1,53.29 908.68,51.66 908.26,50.04 907.83,48.41 907.41,46.78 906.98,45.15 906.56,43.52 906.13,41.89 905.71,40.26 905.28,38.63 904.86,37 904.43,35.38 904.01,33.75 903.58,32.12 903.15,30.49 902.73,28.86 902.3,27.23"/><polyline points="902.3,613.67 902.3,612.04 902.3,610.41 902.3,608.78 902.3,607.15 902.3,605.52 902.3,603.9 902.3,602.27 902.3,600.64 902.3,599.01 902.3,597.38 902.3,595.75 902.3,594.12 902.3,592.49 902.3,590.86 902.3,589.24 902.3,587.61 902.3,585.98 902.3,584.35 902.3,582.72 902.3,581.09 902.3,579.46 902.3,577.83 902.3,576.2 902.3,574.57 902.3,572.94 902.3,571.32 902.3,569.69 902.3,568.06 902.3,566.43 902.3,564.8 902.3,563.17 902.3,561.54 902.3,559.91 902.3,558.28 902.3,556.65 902.3,555.03 902.3,553.4 902.3,551.77 902.3,550.14 902.3,548.51 902.3,546.88 902.3,545.25 902.3,543.62 902.3,541.99 902.3,540.37 902.3,538.74 902.3,537.11 902.3,535.48 902.3,533.85 902.3,532.22 902.3,530.59 902.3,528.96 902.3,527.33 902.3,525.7 902.3,524.08 902.3,522.45 902.3,520.82 902.3,519.19 902.3,517.56 902.3,515.93 902.3,514.3 902.3,512.67 902.3,511.04 902.3,509.41 902.3,507.78 902.3,506.16 902.3,504.53 902.3,502.9 902.3,501.27 902.3,499.64 902.3,498.01 902.3,496.38 902.3,494.75 902.3,493.12 902.3,491.5 902.3,489.87 902.3,488.24 902.3,486.61 902.3,484.98 902.3,483.35 902.3,481.72 902.3,480.09 902.3,478.46 902.3,476.83 902.3,475.2 902.3,473.58 902.3,471.95 902.3,470.32 902.3,468.69 902.3,467.06 902.3,465.43 902.3,463.8 902.3,462.17 902.3,460.54 902.3,458.91 902.3,457.29 902.3,455.66 902.3,454.03 902.3,452.4 902.3,450.77 902.3,449.14 902.3,447.51 902.3,445.88 902.3,444.25 902.3,442.62 902.3,441 902.3,439.37 902.3,437.74 902.3,436.11 902.3,434.48 902.3,432.85 902.3,431.22 902.3,429.59 902.3,427.96 902.3,426.33 902.3,424.71 902.3,423.08 902.3,421.45 902.3,419.82 902.3,418.19 902.3,416.56 902.3,414.93 902.3,413.3 902.3,411.67 902.3,410.04 902.3,408.42 902.3,406.79 902.3,405.16 902.3,403.53 902.3,401.9 902.3,400.27 902.3,398.64 902.3,397.01 902.3,395.38 902.3,393.75 902.3,392.13 902.3,390.5 902.3,388.87 902.3,387.24 902.3,385.61 902.3,383.98 902.3,382.35 902.3,380.72 902.3,379.09 902.3,377.46 902.3,375.84 902.3,374.21 902.3,372.58 902.3,370.95 902.3,369.32 902.3,367.69 902.3,366.06 902.3,364.43 902.3,362.8 902.3,361.18 902.3,359.55 902.3,357.92 902.3,356.29 902.3,354.66 902.3,353.03 902.3,351.4 902.3,349.77 902.3,348.14 902.3,346.51 902.3,344.88 902.3,343.26 902.3,341.63 902.3,340 902.3,338.37 902.3,336.74 902.3,335.11 902.3,333.48 902.3,331.85 902.3,330.22 902.3,328.59 902.3,326.97 902.3,325.34 902.3,323.71 902.3,322.08 902.3,320.45 902.3,318.82 902.3,317.19 902.3,315.56 902.3,313.93 902.3,312.31 902.3,310.68 902.3,309.05 902.3,307.42 902.3,305.79 902.3,304.16 902.3,302.53 902.3,300.9 902.3,299.27 902.3,297.64 902.3,296.01 902.3,294.39 902.3,292.76 902.3,291.13 902.3,289.5 902.3,287.87 902.3,286.24 902.3,284.61 902.3,282.98 902.3,281.35 902.3,279.72 902.3,278.1 902.3,276.47 902.3,274.84 902.3,273.21 902.3,271.58 902.3,269.95 902.3,268.32 902.3,266.69 902.3,265.06 902.3,263.44 902.3,261.81 902.3,260.18 902.3,258.55 902.3,256.92 902.3,255.29 902.3,253.66 902.3,252.03 902.3,250.4 902.3,248.77 902.3,247.14 902.3,245.52 902.3,243.89 902.3,242.26 902.3,240.63 902.3,239 902.3,237.37 902.3,235.74 902.3,234.11 902.3,232.48 902.3,230.85 902.3,229.23 902.3,227.6 902.3,225.97 902.3,224.34 902.3,222.71 902.3,221.08 902.3,219.45 902.3,217.82 902.3,216.19 902.3,214.56 902.3,212.94 902.3,211.31 902.3,209.68 902.3,208.05 902.3,206.42 902.3,204.79 902.3,203.16 902.3,201.53 902.3,199.9 902.3,198.27 902.3,196.65 902.3,195.02 902.3,193.39 902.3,191.76 902.3,190.13 902.3,188.5 902.3,186.87 902.3,185.24 902.3,183.61 902.3,181.98 902.3,180.36 902.3,178.73 902.3,177.1 902.3,175.47 902.3,173.84 902.3,172.21 902.3,170.58 902.3,168.95 902.3,167.32 902.3,165.69 902.3,164.07 902.3,162.44 902.3,160.81 902.3,159.18 902.3,157.55 902.3,155.92 902.3,154.29 902.3,152.66 902.3,151.03 902.3,149.41 902.3,147.78 902.3,146.15 902.3,144.52 902.3,142.89 902.3,141.26 902.3,139.63 902.3,138 902.3,136.37 902.3,134.74 902.3,133.11 902.3,131.49 902.3,129.86 902.3,128.23 902.3,126.6 902.3,124.97 902.3,123.34 902.3,121.71 902.3,120.08 902.3,118.45 902.3,116.82 902.3,115.2 902.3,113.57 902.3,111.94 902.3,110.31 902.3,108.68 902.3,107.05 902.3,105.42 902.3,103.79 902.3,102.16 902.3,100.53 902.3,98.91 902.3,97.28 902.3,95.65 902.3,94.02 902.3,92.39 902.3,90.76 902.3,89.13 902.3,87.5 902.3,85.87 902.3,84.24 902.3,82.62 902.3,80.99 902.3,79.36 902.3,77.73 902.3,76.1 902.3,74.47 902.3,72.84 902.3,71.21 902.3,69.58 902.3,67.95 902.3,66.33 902.3,64.7 902.3,63.07 902.3,61.44 902.3,59.81 902.3,58.18 902.3,56.55 902.3,54.92 902.3,53.29 902.3,51.66 902.3,50.04 902.3,48.41 902.3,46.78 902.3,45.15 902.3,43.52 902.3,41.89 902.3,40.26 902.3,38.63 902.3,37 902.3,35.38 902.3,33.75 902.3,32.12 902.3,30.49 902.3,28.86 902.3,27.23"/><polyline points="902.3,613.67 901.87,612.04 901.45,610.41 901.02,608.78 900.59,607.15 900.17,605.52 899.74,603.9 899.32,602.27 898.89,600.64 898.47,599.01 898.04,597.38 897.62,595.75 897.19,594.12 896.77,592.49 896.34,590.86 895.92,589.24 895.5,587.61 895.08,585.98 894.66,584.35 894.23,582.72 893.81,581.09 893.39,579.46 892.98,577.83 892.56,576.2 892.14,574.57 891.72,572.94 891.31,571.32 890.89,569.69 890.48,568.06 890.06,566.43 889.65,564.8 889.24,563.17 888.83,561.54 888.42,559.91 888.01,558.28 887.6,556.65 887.2,555.03 886.79,553.4 886.39,551.77 885.99,550.14 885.59,548.51 885.19,546.88 884.79,545.25 884.39,543.62 883.99,541.99 883.6,540.37 883.2,538.74 882.81,537.11 882.42,535.48 882.03,533.85 881.65,532.22 881.26,530.59 880.88,528.96 880.49,527.33 880.11,525.7 879.73,524.08 879.36,522.45 878.98,520.82 878.61,519.19 878.24,517.56 877.86,515.93 877.5,514.3 877.13,512.67 876.77,511.04 876.4,509.41 876.04,507.78 875.68,506.16 875.33,504.53 874.97,502.9 874.62,501.27 874.27,499.64 873.92,498.01 873.57,496.38 873.23,494.75 872.89,493.12 872.55,491.5 872.21,489.87 871.88,488.24 871.55,486.61 871.21,484.98 870.89,483.35 870.56,481.72 870.24,480.09 869.92,478.46 869.6,476.83 869.28,475.2 868.97,473.58 868.66,471.95 868.35,470.32 868.05,468.69 867.74,467.06 867.44,465.43 867.15,463.8 866.85,462.17 866.56,460.54 866.27,458.91 865.98,457.29 865.7,455.66 865.42,454.03 865.14,452.4 864.86,450.77 864.59,449.14 864.32,447.51 864.05,445.88 863.79,444.25 863.53,442.62 863.27,441 863.02,439.37 862.76,437.74 862.51,436.11 862.27,434.48 862.02,432.85 861.78,431.22 861.55,429.59 861.31,427.96 861.08,426.33 860.86,424.71 860.63,423.08 860.41,421.45 860.19,419.82 859.98,418.19 859.77,416.56 859.56,414.93 859.35,413.3 859.15,411.67 858.95,410.04 858.76,408.42 858.56,406.79 858.38,405.16 858.19,403.53 858.01,401.9 857.83,400.27 857.66,398.64 857.48,397.01 857.31,395.38 857.15,393.75 856.99,392.13 856.83,390.5 856.68,388.87 856.52,387.24 856.38,385.61 856.23,383.98 856.09,382.35 855.96,380.72 855.82,379.09 855.69,377.46 855.57,375.84 855.44,374.21 855.32,372.58 855.21,370.95 855.1,369.32 854.99,367.69 854.88,366.06 854.78,364.43 854.68,362.8 854.59,361.18 854.5,359.55 854.41,357.92 854.33,356.29 854.25,354.66 854.17,353.03 854.1,351.4 854.03,349.77 853.97,348.14 853.91,346.51 853.85,344.88 853.79,343.26 853.74,341.63 853.7,340 853.65,338.37 853.62,336.74 853.58,335.11 853.55,333.48 853.52,331.85 853.5,330.22 853.48,328.59 853.46,326.97 853.45,325.34 853.44,323.71 853.43,322.08 853.43,320.45 853.43,318.82 853.44,317.19 853.45,315.56 853.46,313.93 853.48,312.31 853.5,310.68 853.52,309.05 853.55,307.42 853.58,305.79 853.62,304.16 853.65,302.53 853.7,300.9 853.74,299.27 853.79,297.64 853.85,296.01 853.91,294.39 853.97,292.76 854.03,291.13 854.1,289.5 854.17,287.87 854.25,286.24 854.33,284.61 854.41,282.98 854.5,281.35 854.59,279.72 854.68,278.1 854.78,276.47 854.88,274.84 854.99,273.21 855.1,271.58 855.21,269.95 855.32,268.32 855.44,266.69 855.57,265.06 855.69,263.44 855.82,261.81 855.96,260.18 856.09,258.55 856.23,256.92 856.38,255.29 856.52,253.66 856.68,252.03 856.83,250.4 856.99,248.77 857.15,247.14 857.31,245.52 857.48,243.89 857.66,242.26 857.83,240.63 858.01,239 858.19,237.37 858.38,235.74 858.56,234.11 858.76,232.48 858.95,230.85 859.15,229.23 859.35,227.6 859.56,225.97 859.77,224.34 859.98,222.71 860.19,221.08 860.41,219.45 860.63,217.82 860.86,216.19 861.08,214.56 861.31,212.94 861.55,211.31 861.78,209.68 862.02,208.05 862.27,206.42 862.51,204.79 862.76,203.16 863.02,201.53 863.27,199.9 863.53,198.27 863.79,196.65 864.05,195.02 864.32,193.39 864.59,191.76 864.86,190.13 865.14,188.5 865.42,186.87 865.7,185.24 865.98,183.61 866.27,181.98 866.56,180.36 866.85,178.73 867.15,177.1 867.44,175.47 867.74,173.84 868.05,172.21 868.35,170.58 868.66,168.95 868.97,167.32 869.28,165.69 869.6,164.07 869.92,162.44 870.24,160.81 870.56,159.18 870.89,157.55 871.21,155.92 871.55,154.29 871.88,152.66 872.21,151.03 872.55,149.41 872.89,147.78 873.23,146.15 873.57,144.52 873.92,142.89 874.27,141.26 874.62,139.63 874.97,138 875.33,136.37 875.68,134.74 876.04,133.11 876.4,131.49 876.77,129.86 877.13,128.23 877.5,126.6 877.86,124.97 878.24,123.34 878.61,121.71 878.98,120.08 879.36,118.45 879.73,116.82 880.11,115.2 880.49,113.57 880.88,111.94 881.26,110.31 881.65,108.68 882.03,107.05 882.42,105.42 882.81,103.79 883.2,102.16 883.6,100.53 883.99,98.91 884.39,97.28 884.79,95.65 885.19,94.02 885.59,92.39 885.99,90.76 886.39,89.13 886.79,87.5 887.2,85.87 887.6,84.24 888.01,82.62 888.42,80.99 888.83,79.36 889.24,77.73 889.65,76.1 890.06,74.47 890.48,72.84 890.89,71.21 891.31,69.58 891.72,67.95 892.14,66.33 892.56,64.7 892.98,63.07 893.39,61.44 893.81,59.81 894.23,58.18 894.66,56.55 895.08,54.92 895.5,53.29 895.92,51.66 896.34,50.04 896.77,48.41 897.19,46.78 897.62,45.15 898.04,43.52 898.47,41.89 898.89,40.26 899.32,38.63 899.74,37 900.17,35.38 900.59,33.75 901.02,32.12 901.45,30.49 901.87,28.86 902.3,27.23"/><polyline points="902.3,613.67 901.45,612.04 900.59,610.41 899.74,608.78 898.89,607.15 898.04,605.52 897.18,603.9 896.33,602.27 895.48,600.64 894.63,599.01 893.78,597.38 892.93,595.75 892.08,594.12 891.24,592.49 890.39,590.86 889.54,589.24 888.7,587.61 887.85,585.98 887.01,584.35 886.17,582.72 885.33,581.09 884.49,579.46 883.65,577.83 882.81,576.2 881.98,574.57 881.15,572.94 880.31,571.32 879.48,569.69 878.65,568.06 877.83,566.43 877,564.8 876.18,563.17 875.36,561.54 874.54,559.91 873.72,558.28 872.91,556.65 872.1,555.03 871.29,553.4 870.48,551.77 869.67,550.14 868.87,548.51 868.07,546.88 867.27,545.25 866.48,543.62 865.69,541.99 864.9,540.37 864.11,538.74 863.33,537.11 862.55,535.48 861.77,533.85 860.99,532.22 860.22,530.59 859.45,528.96 858.69,527.33 857.93,525.7 857.17,524.08 856.41,522.45 855.66,520.82 854.91,519.19 854.17,517.56 853.43,515.93 852.69,514.3 851.96,512.67 851.23,511.04 850.51,509.41 849.78,507.78 849.07,506.16 848.35,504.53 847.64,502.9 846.94,501.27 846.24,499.64 845.54,498.01 844.85,496.38 844.16,494.75 843.48,493.12 842.8,491.5 842.13,489.87 841.46,488.24 840.79,486.61 840.13,484.98 839.47,483.35 838.82,481.72 838.18,480.09 837.54,478.46 836.9,476.83 836.27,475.2 835.64,473.58 835.02,471.95 834.4,470.32 833.79,468.69 833.19,467.06 832.59,465.43 831.99,463.8 831.4,462.17 830.82,460.54 830.24,458.91 829.67,457.29 829.1,455.66 828.53,454.03 827.98,452.4 827.43,450.77 826.88,449.14 826.34,447.51 825.81,445.88 825.28,444.25 824.76,442.62 824.24,441 823.73,439.37 823.23,437.74 822.73,436.11 822.24,434.48 821.75,432.85 821.27,431.22 820.8,429.59 820.33,427.96 819.87,426.33 819.41,424.71 818.96,423.08 818.52,421.45 818.08,419.82 817.65,418.19 817.23,416.56 816.81,414.93 816.4,413.3 816,411.67 815.6,410.04 815.21,408.42 814.83,406.79 814.45,405.16 814.08,403.53 813.72,401.9 813.36,400.27 813.01,398.64 812.67,397.01 812.33,395.38 812,393.75 811.68,392.13 811.36,390.5 811.05,388.87 810.75,387.24 810.45,385.61 810.17,383.98 809.89,382.35 809.61,380.72 809.34,379.09 809.08,377.46 808.83,375.84 808.58,374.21 808.35,372.58 808.11,370.95 807.89,369.32 807.67,367.69 807.46,366.06 807.26,364.43 807.07,362.8 806.88,361.18 806.7,359.55 806.52,357.92 806.36,356.29 806.2,354.66 806.04,353.03 805.9,351.4 805.76,349.77 805.63,348.14 805.51,346.51 805.4,344.88 805.29,343.26 805.19,341.63 805.1,340 805.01,338.37 804.93,336.74 804.86,335.11 804.8,333.48 804.74,331.85 804.69,330.22 804.65,328.59 804.62,326.97 804.59,325.34 804.57,323.71 804.56,322.08 804.56,320.45 804.56,318.82 804.57,317.19 804.59,315.56 804.62,313.93 804.65,312.31 804.69,310.68 804.74,309.05 804.8,307.42 804.86,305.79 804.93,304.16 805.01,302.53 805.1,300.9 805.19,299.27 805.29,297.64 805.4,296.01 805.51,294.39 805.63,292.76 805.76,291.13 805.9,289.5 806.04,287.87 806.2,286.24 806.36,284.61 806.52,282.98 806.7,281.35 806.88,279.72 807.07,278.1 807.26,276.47 807.46,274.84 807.67,273.21 807.89,271.58 808.11,269.95 808.35,268.32 808.58,266.69 808.83,265.06 809.08,263.44 809.34,261.81 809.61,260.18 809.89,258.55 810.17,256.92 810.45,255.29 810.75,253.66 811.05,252.03 811.36,250.4 811.68,248.77 812,247.14 812.33,245.52 812.67,243.89 813.01,242.26 813.36,240.63 813.72,239 814.08,237.37 814.45,235.74 814.83,234.11 815.21,232.48 815.6,230.85 816,229.23 816.4,227.6 816.81,225.97 817.23,224.34 817.65,222.71 818.08,221.08 818.52,219.45 818.96,217.82 819.41,216.19 819.87,214.56 820.33,212.94 820.8,211.31 821.27,209.68 821.75,208.05 822.24,206.42 822.73,204.79 823.23,203.16 823.73,201.53 824.24,199.9 824.76,198.27 825.28,196.65 825.81,195.02 826.34,193.39 826.88,191.76 827.43,190.13 827.98,188.5 828.53,186.87 829.1,185.24 829.67,183.61 830.24,181.98 830.82,180.36 831.4,178.73 831.99,177.1 832.59,175.47 833.19,173.84 833.79,172.21 834.4,170.58 835.02,168.95 835.64,167.32 836.27,165.69 836.9,164.07 837.54,162.44 838.18,160.81 838.82,159.18 839.47,157.55 840.13,155.92 840.79,154.29 841.46,152.66 842.13,151.03 842.8,149.41 843.48,147.78 844.16,146.15 844.85,144.52 845.54,142.89 846.24,141.26 846.94,139.63 847.64,138 848.35,136.37 849.07,134.74 849.78,133.11 850.51,131.49 851.23,129.86 851.96,128.23 852.69,126.6 853.43,124.97 854.17,123.34 854.91,121.71 855.66,120.08 856.41,118.45 857.17,116.82 857.93,115.2 858.69,113.57 859.45,111.94 860.22,110.31 860.99,108.68 861.77,107.05 862.55,105.42 863.33,103.79 864.11,102.16 864.9,100.53 865.69,98.91 866.48,97.28 867.27,95.65 868.07,94.02 868.87,92.39 869.67,90.76 870.48,89.13 871.29,87.5 872.1,85.87 872.91,84.24 873.72,82.62 874.54,80.99 875.36,79.36 876.18,77.73 877,76.1 877.83,74.47 878.65,72.84 879.48,71.21 880.31,69.58 881.15,67.95 881.98,66.33 882.81,64.7 883.65,63.07 884.49,61.44 885.33,59.81 886.17,58.18 887.01,56.55 887.85,54.92 888.7,53.29 889.54,51.66 890.39,50.04 891.24,48.41 892.08,46.78 892.93,45.15 893.78,43.52 894.63,41.89 895.48,40.26 896.33,38.63 897.18,37 898.04,35.38 898.89,33.75 899.74,32.12 900.59,30.49 901.45,28.86 902.3,27.23"/><polyline points="902.3,613.67 901.02,612.04 899.74,610.41 898.46,608.78 897.18,607.15 895.9,605.52 894.63,603.9 893.35,602.27 892.07,600.64 890.8,599.01 889.52,597.38 888.25,595.75 886.98,594.12 885.7,592.49 884.43,590.86 883.16,589.24 881.9,587.61 880.63,585.98 879.37,584.35 878.1,582.72 876.84,581.09 875.58,579.46 874.33,577.83 873.07,576.2 871.82,574.57 870.57,572.94 869.32,571.32 868.07,569.69 866.83,568.06 865.59,566.43 864.35,564.8 863.12,563.17 861.89,561.54 860.66,559.91 859.44,558.28 858.21,556.65 857,555.03 855.78,553.4 854.57,551.77 853.36,550.14 852.16,548.51 850.96,546.88 849.76,545.25 848.57,543.62 847.38,541.99 846.19,540.37 845.01,538.74 843.84,537.11 842.67,535.48 841.5,533.85 840.34,532.22 839.18,530.59 838.03,528.96 836.88,527.33 835.74,525.7 834.6,524.08 833.47,522.45 832.34,520.82 831.22,519.19 830.11,517.56 828.99,515.93 827.89,514.3 826.79,512.67 825.7,511.04 824.61,509.41 823.53,507.78 822.45,506.16 821.38,504.53 820.32,502.9 819.26,501.27 818.21,499.64 817.16,498.01 816.12,496.38 815.09,494.75 814.07,493.12 813.05,491.5 812.04,489.87 811.03,488.24 810.04,486.61 809.04,484.98 808.06,483.35 807.08,481.72 806.12,480.09 805.15,478.46 804.2,476.83 803.25,475.2 802.31,473.58 801.38,471.95 800.46,470.32 799.54,468.69 798.63,467.06 797.73,465.43 796.84,463.8 795.95,462.17 795.08,460.54 794.21,458.91 793.35,457.29 792.5,455.66 791.65,454.03 790.82,452.4 789.99,450.77 789.17,449.14 788.36,447.51 787.56,445.88 786.77,444.25 785.99,442.62 785.21,441 784.45,439.37 783.69,437.74 782.94,436.11 782.2,434.48 781.47,432.85 780.75,431.22 780.04,429.59 779.34,427.96 778.65,426.33 777.97,424.71 777.29,423.08 776.63,421.45 775.98,419.82 775.33,418.19 774.7,416.56 774.07,414.93 773.46,413.3 772.85,411.67 772.26,410.04 771.67,408.42 771.09,406.79 770.53,405.16 769.97,403.53 769.43,401.9 768.89,400.27 768.37,398.64 767.85,397.01 767.34,395.38 766.85,393.75 766.37,392.13 765.89,390.5 765.43,388.87 764.97,387.24 764.53,385.61 764.1,383.98 763.68,382.35 763.27,380.72 762.87,379.09 762.48,377.46 762.1,375.84 761.73,374.21 761.37,372.58 761.02,370.95 760.69,369.32 760.36,367.69 760.04,366.06 759.74,364.43 759.45,362.8 759.17,361.18 758.89,359.55 758.63,357.92 758.38,356.29 758.14,354.66 757.92,353.03 757.7,351.4 757.5,349.77 757.3,348.14 757.12,346.51 756.94,344.88 756.78,343.26 756.63,341.63 756.49,340 756.36,338.37 756.25,336.74 756.14,335.11 756.05,333.48 755.96,331.85 755.89,330.22 755.83,328.59 755.78,326.97 755.74,325.34 755.71,323.71 755.7,322.08 755.69,320.45 755.7,318.82 755.71,317.19 755.74,315.56 755.78,313.93 755.83,312.31 755.89,310.68 755.96,309.05 756.05,307.42 756.14,305.79 756.25,304.16 756.36,302.53 756.49,300.9 756.63,299.27 756.78,297.64 756.94,296.01 757.12,294.39 757.3,292.76 757.5,291.13 757.7,289.5 757.92,287.87 758.14,286.24 758.38,284.61 758.63,282.98 758.89,281.35 759.17,279.72 759.45,278.1 759.74,276.47 760.04,274.84 760.36,273.21 760.69,271.58 761.02,269.95 761.37,268.32 761.73,266.69 762.1,265.06 762.48,263.44 762.87,261.81 763.27,260.18 763.68,258.55 764.1,256.92 764.53,255.29 764.97,253.66 765.43,252.03 765.89,250.4 766.37,248.77 766.85,247.14 767.34,245.52 767.85,243.89 768.37,242.26 768.89,240.63 769.43,239 769.97,237.37 770.53,235.74 771.09,234.11 771.67,232.48 772.26,230.85 772.85,229.23 773.46,227.6 774.07,225.97 774.7,224.34 775.33,222.71 775.98,221.08 776.63,219.45 777.29,217.82 777.97,216.19 778.65,214.56 779.34,212.94 780.04,211.31 780.75,209.68 781.47,208.05 782.2,206.42 782.94,204.79 783.69,203.16 784.45,201.53 785.21,199.9 785.99,198.27 786.77,196.65 787.56,195.02 788.36,193.39 789.17,191.76 789.99,190.13 790.82,188.5 791.65,186.87 792.5,185.24 793.35,183.61 794.21,181.98 795.08,180.36 795.95,178.73 796.84,177.1 797.73,175.47 798.63,173.84 799.54,172.21 800.46,170.58 801.38,168.95 802.31,167.32 803.25,165.69 804.2,164.07 805.15,162.44 806.12,160.81 807.08,159.18 808.06,157.55 809.04,155.92 810.04,154.29 811.03,152.66 812.04,151.03 813.05,149.41 814.07,147.78 815.09,146.15 816.12,144.52 817.16,142.89 818.21,141.26 819.26,139.63 820.32,138 821.38,136.37 822.45,134.74 823.53,133.11 824.61,131.49 825.7,129.86 826.79,128.23 827.89,126.6 828.99,124.97 830.11,123.34 831.22,121.71 832.34,120.08 833.47,118.45 834.6,116.82 835.74,115.2 836.88,113.57 838.03,111.94 839.18,110.31 840.34,108.68 841.5,107.05 842.67,105.42 843.84,103.79 845.01,102.16 846.19,100.53 847.38,98.91 848.57,97.28 849.76,95.65 850.96,94.02 852.16,92.39 853.36,90.76 854.57,89.13 855.78,87.5 857,85.87 858.21,84.24 859.44,82.62 860.66,80.99 861.89,79.36 863.12,77.73 864.35,76.1 865.59,74.47 866.83,72.84 868.07,71.21 869.32,69.58 870.57,67.95 871.82,66.33 873.07,64.7 874.33,63.07 875.58,61.44 876.84,59.81 878.1,58.18 879.37,56.55 880.63,54.92 881.9,53.29 883.16,51.66 884.43,50.04 885.7,48.41 886.98,46.78 888.25,45.15 889.52,43.52 890.8,41.89 892.07,40.26 893.35,38.63 894.63,37 895.9,35.38 897.18,33.75 898.46,32.12 899.74,30.49 901.02,28.86 902.3,27.23"/><polyline points="902.3,613.67 900.59,612.04 898.89,610.41 897.18,608.78 895.48,607.15 893.77,605.52 892.07,603.9 890.37,602.27 888.66,600.64 886.96,599.01 885.26,597.38 883.56,595.75 881.87,594.12 880.17,592.49 878.48,590.86 876.78,589.24 875.09,587.61 873.41,585.98 871.72,584.35 870.04,582.72 868.36,581.09 866.68,579.46 865,577.83 863.33,576.2 861.66,574.57 859.99,572.94 858.33,571.32 856.67,569.69 855.01,568.06 853.36,566.43 851.71,564.8 850.06,563.17 848.42,561.54 846.78,559.91 845.15,558.28 843.52,556.65 841.89,555.03 840.27,553.4 838.66,551.77 837.05,550.14 835.44,548.51 833.84,546.88 832.25,545.25 830.66,543.62 829.07,541.99 827.49,540.37 825.92,538.74 824.35,537.11 822.79,535.48 821.24,533.85 819.69,532.22 818.14,530.59 816.61,528.96 815.08,527.33 813.55,525.7 812.04,524.08 810.53,522.45 809.03,520.82 807.53,519.19 806.04,517.56 804.56,515.93 803.09,514.3 801.62,512.67 800.16,511.04 798.71,509.41 797.27,507.78 795.83,506.16 794.41,504.53 792.99,502.9 791.58,501.27 790.18,499.64 788.78,498.01 787.4,496.38 786.02,494.75 784.66,493.12 783.3,491.5 781.95,489.87 780.61,488.24 779.28,486.61 777.96,484.98 776.65,483.35 775.35,481.72 774.05,480.09 772.77,478.46 771.5,476.83 770.24,475.2 768.98,473.58 767.74,471.95 766.51,470.32 765.29,468.69 764.07,467.06 762.87,465.43 761.68,463.8 760.5,462.17 759.33,460.54 758.18,458.91 757.03,457.29 755.89,455.66 754.77,454.03 753.66,452.4 752.55,450.77 751.46,449.14 750.38,447.51 749.32,445.88 748.26,444.25 747.22,442.62 746.18,441 745.16,439.37 744.15,437.74 743.16,436.11 742.17,434.48 741.2,432.85 740.24,431.22 739.29,429.59 738.36,427.96 737.43,426.33 736.52,424.71 735.63,423.08 734.74,421.45 733.87,419.82 733.01,418.19 732.16,416.56 731.33,414.93 730.51,413.3 729.7,411.67 728.91,410.04 728.13,408.42 727.36,406.79 726.6,405.16 725.86,403.53 725.13,401.9 724.42,400.27 723.72,398.64 723.03,397.01 722.36,395.38 721.7,393.75 721.05,392.13 720.42,390.5 719.8,388.87 719.2,387.24 718.61,385.61 718.03,383.98 717.47,382.35 716.92,380.72 716.39,379.09 715.87,377.46 715.36,375.84 714.87,374.21 714.39,372.58 713.93,370.95 713.48,369.32 713.05,367.69 712.63,366.06 712.22,364.43 711.83,362.8 711.45,361.18 711.09,359.55 710.74,357.92 710.41,356.29 710.09,354.66 709.79,353.03 709.5,351.4 709.23,349.77 708.97,348.14 708.72,346.51 708.49,344.88 708.28,343.26 708.08,341.63 707.89,340 707.72,338.37 707.56,336.74 707.42,335.11 707.3,333.48 707.18,331.85 707.09,330.22 707.01,328.59 706.94,326.97 706.89,325.34 706.85,323.71 706.83,322.08 706.82,320.45 706.83,318.82 706.85,317.19 706.89,315.56 706.94,313.93 707.01,312.31 707.09,310.68 707.18,309.05 707.3,307.42 707.42,305.79 707.56,304.16 707.72,302.53 707.89,300.9 708.08,299.27 708.28,297.64 708.49,296.01 708.72,294.39 708.97,292.76 709.23,291.13 709.5,289.5 709.79,287.87 710.09,286.24 710.41,284.61 710.74,282.98 711.09,281.35 711.45,279.72 711.83,278.1 712.22,276.47 712.63,274.84 713.05,273.21 713.48,271.58 713.93,269.95 714.39,268.32 714.87,266.69 715.36,265.06 715.87,263.44 716.39,261.81 716.92,260.18 717.47,258.55 718.03,256.92 718.61,255.29 719.2,253.66 719.8,252.03 720.42,250.4 721.05,248.77 721.7,247.14 722.36,245.52 723.03,243.89 723.72,242.26 724.42,240.63 725.13,239 725.86,237.37 726.6,235.74 727.36,234.11 728.13,232.48 728.91,230.85 729.7,229.23 730.51,227.6 731.33,225.97 732.16,224.34 733.01,222.71 733.87,221.08 734.74,219.45 735.63,217.82 736.52,216.19 737.43,214.56 738.36,212.94 739.29,211.31 740.24,209.68 741.2,208.05 742.17,206.42 743.16,204.79 744.15,203.16 745.16,201.53 746.18,199.9 747.22,198.27 748.26,196.65 749.32,195.02 750.38,193.39 751.46,191.76 752.55,190.13 753.66,188.5 754.77,186.87 755.89,185.24 757.03,183.61 758.18,181.98 759.33,180.36 760.5,178.73 761.68,177.1 762.87,175.47 764.07,173.84 765.29,172.21 766.51,170.58 767.74,168.95 768.98,167.32 770.24,165.69 771.5,164.07 772.77,162.44 774.05,160.81 775.35,159.18 776.65,157.55 777.96,155.92 779.28,154.29 780.61,152.66 781.95,151.03 783.3,149.41 784.66,147.78 786.02,146.15 787.4,144.52 788.78,142.89 790.18,141.26 791.58,139.63 792.99,138 794.41,136.37 795.83,134.74 797.27,133.11 798.71,131.49 800.16,129.86 801.62,128.23 803.09,126.6 804.56,124.97 806.04,123.34 807.53,121.71 809.03,120.08 810.53,118.45 812.04,116.82 813.55,115.2 815.08,113.57 816.61,111.94 818.14,110.31 819.69,108.68 821.24,107.05 822.79,105.42 824.35,103.79 825.92,102.16 827.49,100.53 829.07,98.91 830.66,97.28 832.25,95.65 833.84,94.02 835.44,92.39 837.05,90.76 838.66,89.13 840.27,87.5 841.89,85.87 843.52,84.24 845.15,82.62 846.78,80.99 848.42,79.36 850.06,77.73 851.71,76.1 853.36,74.47 855.01,72.84 856.67,71.21 858.33,69.58 859.99,67.95 861.66,66.33 863.33,64.7 865,63.07 866.68,61.44 868.36,59.81 870.04,58.18 871.72,56.55 873.41,54.92 875.09,53.29 876.78,51.66 878.48,50.04 880.17,48.41 881.87,46.78 883.56,45.15 885.26,43.52 886.96,41.89 888.66,40.26 890.37,38.63 892.07,37 893.77,35.38 895.48,33.75 897.18,32.12 898.89,30.49 900.59,28.86 902.3,27.23"/><polyline points="902.3,613.67 900.17,612.04 898.04,610.41 895.9,608.78 893.77,607.15 891.64,605.52 889.51,603.9 887.38,602.27 885.26,600.64 883.13,599.01 881,597.38 878.88,595.75 876.76,594.12 874.64,592.49 872.52,590.86 870.41,589.24 868.29,587.61 866.18,585.98 864.08,584.35 861.97,582.72 859.87,581.09 857.77,579.46 855.68,577.83 853.58,576.2 851.5,574.57 849.41,572.94 847.33,571.32 845.26,569.69 843.19,568.06 841.12,566.43 839.06,564.8 837,563.17 834.95,561.54 832.9,559.91 830.86,558.28 828.82,556.65 826.79,555.03 824.77,553.4 822.75,551.77 820.73,550.14 818.73,548.51 816.73,546.88 814.73,545.25 812.75,543.62 810.76,541.99 808.79,540.37 806.82,538.74 804.87,537.11 802.91,535.48 800.97,533.85 799.03,532.22 797.1,530.59 795.18,528.96 793.27,527.33 791.37,525.7 789.47,524.08 787.58,522.45 785.71,520.82 783.84,519.19 781.98,517.56 780.12,515.93 778.28,514.3 776.45,512.67 774.63,511.04 772.81,509.41 771.01,507.78 769.22,506.16 767.43,504.53 765.66,502.9 763.9,501.27 762.15,499.64 760.41,498.01 758.67,496.38 756.96,494.75 755.25,493.12 753.55,491.5 751.86,489.87 750.19,488.24 748.53,486.61 746.87,484.98 745.23,483.35 743.61,481.72 741.99,480.09 740.39,478.46 738.8,476.83 737.22,475.2 735.65,473.58 734.1,471.95 732.56,470.32 731.03,468.69 729.52,467.06 728.02,465.43 726.53,463.8 725.05,462.17 723.59,460.54 722.15,458.91 720.71,457.29 719.29,455.66 717.89,454.03 716.49,452.4 715.12,450.77 713.75,449.14 712.4,447.51 711.07,445.88 709.75,444.25 708.44,442.62 707.15,441 705.88,439.37 704.62,437.74 703.37,436.11 702.14,434.48 700.92,432.85 699.72,431.22 698.54,429.59 697.37,427.96 696.22,426.33 695.08,424.71 693.96,423.08 692.85,421.45 691.76,419.82 690.69,418.19 689.63,416.56 688.59,414.93 687.56,413.3 686.55,411.67 685.56,410.04 684.58,408.42 683.62,406.79 682.68,405.16 681.75,403.53 680.84,401.9 679.95,400.27 679.08,398.64 678.22,397.01 677.37,395.38 676.55,393.75 675.74,392.13 674.95,390.5 674.18,388.87 673.42,387.24 672.69,385.61 671.97,383.98 671.26,382.35 670.58,380.72 669.91,379.09 669.26,377.46 668.63,375.84 668.01,374.21 667.42,372.58 666.84,370.95 666.28,369.32 665.73,367.69 665.21,366.06 664.7,364.43 664.21,362.8 663.74,361.18 663.29,359.55 662.86,357.92 662.44,356.29 662.04,354.66 661.66,353.03 661.3,351.4 660.96,349.77 660.63,348.14 660.33,346.51 660.04,344.88 659.77,343.26 659.52,341.63 659.29,340 659.07,338.37 658.88,336.74 658.7,335.11 658.55,333.48 658.41,331.85 658.28,330.22 658.18,328.59 658.1,326.97 658.03,325.34 657.99,323.71 657.96,322.08 657.95,320.45 657.96,318.82 657.99,317.19 658.03,315.56 658.1,313.93 658.18,312.31 658.28,310.68 658.41,309.05 658.55,307.42 658.7,305.79 658.88,304.16 659.07,302.53 659.29,300.9 659.52,299.27 659.77,297.64 660.04,296.01 660.33,294.39 660.63,292.76 660.96,291.13 661.3,289.5 661.66,287.87 662.04,286.24 662.44,284.61 662.86,282.98 663.29,281.35 663.74,279.72 664.21,278.1 664.7,276.47 665.21,274.84 665.73,273.21 666.28,271.58 666.84,269.95 667.42,268.32 668.01,266.69 668.63,265.06 669.26,263.44 669.91,261.81 670.58,260.18 671.26,258.55 671.97,256.92 672.69,255.29 673.42,253.66 674.18,252.03 674.95,250.4 675.74,248.77 676.55,247.14 677.37,245.52 678.22,243.89 679.08,242.26 679.95,240.63 680.84,239 681.75,237.37 682.68,235.74 683.62,234.11 684.58,232.48 685.56,230.85 686.55,229.23 687.56,227.6 688.59,225.97 689.63,224.34 690.69,222.71 691.76,221.08 692.85,219.45 693.96,217.82 695.08,216.19 696.22,214.56 697.37,212.94 698.54,211.31 699.72,209.68 700.92,208.05 702.14,206.42 703.37,204.79 704.62,203.16 705.88,201.53 707.15,199.9 708.44,198.27 709.75,196.65 711.07,195.02 712.4,193.39 713.75,191.76 715.12,190.13 716.49,188.5 717.89,186.87 719.29,185.24 720.71,183.61 722.15,181.98 723.59,180.36 725.05,178.73 726.53,177.1 728.02,175.47 729.52,173.84 731.03,172.21 732.56,170.58 734.1,168.95 735.65,167.32 737.22,165.69 738.8,164.07 740.39,162.44 741.99,160.81 743.61,159.18 745.23,157.55 746.87,155.92 748.53,154.29 750.19,152.66 751.86,151.03 753.55,149.41 755.25,147.78 756.96,146.15 758.67,144.52 760.41,142.89 762.15,141.26 763.9,139.63 765.66,138 767.43,136.37 769.22,134.74 771.01,133.11 772.81,131.49 774.63,129.86 776.45,128.23 778.28,126.6 780.12,124.97 781.98,123.34 783.84,121.71 785.71,120.08 787.58,118.45 789.47,116.82 791.37,115.2 793.27,113.57 795.18,111.94 797.1,110.31 799.03,108.68 800.97,107.05 802.91,105.42 804.87,103.79 806.82,102.16 808.79,100.53 810.76,98.91 812.75,97.28 814.73,95.65 816.73,94.02 818.73,92.39 820.73,90.76 822.75,89.13 824.77,87.5 826.79,85.87 828.82,84.24 830.86,82.62 832.9,80.99 834.95,79.36 837,77.73 839.06,76.1 841.12,74.47 843.19,72.84 845.26,71.21 847.33,69.58 849.41,67.95 851.5,66.33 853.58,64.7 855.68,63.07 857.77,61.44 859.87,59.81 861.97,58.18 864.08,56.55 866.18,54.92 868.29,53.29 870.41,51.66 872.52,50.04 874.64,48.41 876.76,46.78 878.88,45.15 881,43.52 883.13,41.89 885.26,40.26 887.38,38.63 889.51,37 891.64,35.38 893.77,33.75 895.9,32.12 898.04,30.49 900.17,28.86 902.3,27.23"/><polyline points="902.3,613.67 899.74,612.04 897.18,610.41 894.62,608.78 892.07,607.15 889.51,605.52 886.95,603.9 884.4,602.27 881.85,600.64 879.29,599.01 876.74,597.38 874.2,595.75 871.65,594.12 869.11,592.49 866.57,590.86 864.03,589.24 861.49,587.61 858.96,585.98 856.43,584.35 853.9,582.72 851.38,581.09 848.86,579.46 846.35,577.83 843.84,576.2 841.34,574.57 838.84,572.94 836.34,571.32 833.85,569.69 831.36,568.06 828.88,566.43 826.41,564.8 823.94,563.17 821.48,561.54 819.02,559.91 816.57,558.28 814.13,556.65 811.69,555.03 809.26,553.4 806.84,551.77 804.42,550.14 802.01,548.51 799.61,546.88 797.22,545.25 794.83,543.62 792.46,541.99 790.09,540.37 787.73,538.74 785.38,537.11 783.04,535.48 780.7,533.85 778.38,532.22 776.07,530.59 773.76,528.96 771.47,527.33 769.18,525.7 766.91,524.08 764.64,522.45 762.39,520.82 760.14,519.19 757.91,517.56 755.69,515.93 753.48,514.3 751.28,512.67 749.09,511.04 746.92,509.41 744.75,507.78 742.6,506.16 740.46,504.53 738.33,502.9 736.22,501.27 734.12,499.64 732.03,498.01 729.95,496.38 727.89,494.75 725.84,493.12 723.8,491.5 721.78,489.87 719.77,488.24 717.77,486.61 715.79,484.98 713.82,483.35 711.87,481.72 709.93,480.09 708.01,478.46 706.1,476.83 704.2,475.2 702.32,473.58 700.46,471.95 698.61,470.32 696.78,468.69 694.96,467.06 693.16,465.43 691.38,463.8 689.61,462.17 687.85,460.54 686.12,458.91 684.4,457.29 682.69,455.66 681,454.03 679.33,452.4 677.68,450.77 676.04,449.14 674.43,447.51 672.82,445.88 671.24,444.25 669.67,442.62 668.12,441 666.59,439.37 665.08,437.74 663.59,436.11 662.11,434.48 660.65,432.85 659.21,431.22 657.79,429.59 656.39,427.96 655,426.33 653.64,424.71 652.29,423.08 650.96,421.45 649.65,419.82 648.36,418.19 647.09,416.56 645.84,414.93 644.61,413.3 643.4,411.67 642.21,410.04 641.04,408.42 639.89,406.79 638.76,405.16 637.64,403.53 636.55,401.9 635.48,400.27 634.43,398.64 633.4,397.01 632.39,395.38 631.4,393.75 630.43,392.13 629.48,390.5 628.56,388.87 627.65,387.24 626.76,385.61 625.9,383.98 625.06,382.35 624.23,380.72 623.43,379.09 622.65,377.46 621.89,375.84 621.15,374.21 620.44,372.58 619.74,370.95 619.07,369.32 618.42,367.69 617.79,366.06 617.18,364.43 616.6,362.8 616.03,361.18 615.49,359.55 614.97,357.92 614.47,356.29 613.99,354.66 613.53,353.03 613.1,351.4 612.69,349.77 612.3,348.14 611.93,346.51 611.59,344.88 611.27,343.26 610.96,341.63 610.69,340 610.43,338.37 610.2,336.74 609.98,335.11 609.79,333.48 609.63,331.85 609.48,330.22 609.36,328.59 609.26,326.97 609.18,325.34 609.12,323.71 609.09,322.08 609.08,320.45 609.09,318.82 609.12,317.19 609.18,315.56 609.26,313.93 609.36,312.31 609.48,310.68 609.63,309.05 609.79,307.42 609.98,305.79 610.2,304.16 610.43,302.53 610.69,300.9 610.96,299.27 611.27,297.64 611.59,296.01 611.93,294.39 612.3,292.76 612.69,291.13 613.1,289.5 613.53,287.87 613.99,286.24 614.47,284.61 614.97,282.98 615.49,281.35 616.03,279.72 616.6,278.1 617.18,276.47 617.79,274.84 618.42,273.21 619.07,271.58 619.74,269.95 620.44,268.32 621.15,266.69 621.89,265.06 622.65,263.44 623.43,261.81 624.23,260.18 625.06,258.55 625.9,256.92 626.76,255.29 627.65,253.66 628.56,252.03 629.48,250.4 630.43,248.77 631.4,247.14 632.39,245.52 633.4,243.89 634.43,242.26 635.48,240.63 636.55,239 637.64,237.37 638.76,235.74 639.89,234.11 641.04,232.48 642.21,230.85 643.4,229.23 644.61,227.6 645.84,225.97 647.09,224.34 648.36,222.71 649.65,221.08 650.96,219.45 652.29,217.82 653.64,216.19 655,214.56 656.39,212.94 657.79,211.31 659.21,209.68 660.65,208.05 662.11,206.42 663.59,204.79 665.08,203.16 666.59,201.53 668.12,199.9 669.67,198.27 671.24,196.65 672.82,195.02 674.43,193.39 676.04,191.76 677.68,190.13 679.33,188.5 681,186.87 682.69,185.24 684.4,183.61 686.12,181.98 687.85,180.36 689.61,178.73 691.38,177.1 693.16,175.47 694.96,173.84 696.78,172.21 698.61,170.58 700.46,168.95 702.32,167.32 704.2,165.69 706.1,164.07 708.01,162.44 709.93,160.81 711.87,159.18 713.82,157.55 715.79,155.92 717.77,154.29 719.77,152.66 721.78,151.03 723.8,149.41 725.84,147.78 727.89,146.15 729.95,144.52 732.03,142.89 734.12,141.26 736.22,139.63 738.33,138 740.46,136.37 742.6,134.74 744.75,133.11 746.92,131.49 749.09,129.86 751.28,128.23 753.48,126.6 755.69,124.97 757.91,123.34 760.14,121.71 762.39,120.08 764.64,118.45 766.91,116.82 769.18,115.2 771.47,113.57 773.76,111.94 776.07,110.31 778.38,108.68 780.7,107.05 783.04,105.42 785.38,103.79 787.73,102.16 790.09,100.53 792.46,98.91 794.83,97.28 797.22,95.65 799.61,94.02 802.01,92.39 804.42,90.76 806.84,89.13 809.26,87.5 811.69,85.87 814.13,84.24 816.57,82.62 819.02,80.99 821.48,79.36 823.94,77.73 826.41,76.1 828.88,74.47 831.36,72.84 833.85,71.21 836.34,69.58 838.84,67.95 841.34,66.33 843.84,64.7 846.35,63.07 848.86,61.44 851.38,59.81 853.9,58.18 856.43,56.55 858.96,54.92 861.49,53.29 864.03,51.66 866.57,50.04 869.11,48.41 871.65,46.78 874.2,45.15 876.74,43.52 879.29,41.89 881.85,40.26 884.4,38.63 886.95,37 889.51,35.38 892.07,33.75 894.62,32.12 897.18,30.49 899.74,28.86 902.3,27.23"/><polyline points="902.3,613.67 899.31,612.04 896.33,610.41 893.35,608.78 890.36,607.15 887.38,605.52 884.4,603.9 881.42,602.27 878.44,600.64 875.46,599.01 872.48,597.38 869.51,595.75 866.54,594.12 863.57,592.49 860.61,590.86 857.65,589.24 854.69,587.61 851.74,585.98 848.79,584.35 845.84,582.72 842.9,581.09 839.96,579.46 837.03,577.83 834.1,576.2 831.18,574.57 828.26,572.94 825.35,571.32 822.44,569.69 819.54,568.06 816.65,566.43 813.76,564.8 810.88,563.17 808.01,561.54 805.14,559.91 802.28,558.28 799.43,556.65 796.59,555.03 793.75,553.4 790.93,551.77 788.11,550.14 785.3,548.51 782.5,546.88 779.71,545.25 776.92,543.62 774.15,541.99 771.39,540.37 768.63,538.74 765.89,537.11 763.16,535.48 760.44,533.85 757.73,532.22 755.03,530.59 752.34,528.96 749.66,527.33 746.99,525.7 744.34,524.08 741.7,522.45 739.07,520.82 736.45,519.19 733.85,517.56 731.25,515.93 728.68,514.3 726.11,512.67 723.56,511.04 721.02,509.41 718.5,507.78 715.98,506.16 713.49,504.53 711.01,502.9 708.54,501.27 706.09,499.64 703.65,498.01 701.22,496.38 698.82,494.75 696.43,493.12 694.05,491.5 691.69,489.87 689.34,488.24 687.02,486.61 684.7,484.98 682.41,483.35 680.13,481.72 677.87,480.09 675.62,478.46 673.4,476.83 671.19,475.2 669,473.58 666.82,471.95 664.66,470.32 662.53,468.69 660.41,467.06 658.3,465.43 656.22,463.8 654.16,462.17 652.11,460.54 650.08,458.91 648.08,457.29 646.09,455.66 644.12,454.03 642.17,452.4 640.24,450.77 638.33,449.14 636.45,447.51 634.58,445.88 632.73,444.25 630.9,442.62 629.09,441 627.31,439.37 625.54,437.74 623.8,436.11 622.08,434.48 620.37,432.85 618.69,431.22 617.04,429.59 615.4,427.96 613.78,426.33 612.19,424.71 610.62,423.08 609.07,421.45 607.55,419.82 606.04,418.19 604.56,416.56 603.1,414.93 601.67,413.3 600.25,411.67 598.86,410.04 597.5,408.42 596.15,406.79 594.83,405.16 593.53,403.53 592.26,401.9 591.01,400.27 589.79,398.64 588.58,397.01 587.4,395.38 586.25,393.75 585.12,392.13 584.01,390.5 582.93,388.87 581.87,387.24 580.84,385.61 579.83,383.98 578.85,382.35 577.89,380.72 576.95,379.09 576.04,377.46 575.16,375.84 574.3,374.21 573.46,372.58 572.65,370.95 571.87,369.32 571.11,367.69 570.37,366.06 569.66,364.43 568.98,362.8 568.32,361.18 567.69,359.55 567.08,357.92 566.5,356.29 565.94,354.66 565.41,353.03 564.9,351.4 564.42,349.77 563.97,348.14 563.54,346.51 563.14,344.88 562.76,343.26 562.41,341.63 562.08,340 561.78,338.37 561.51,336.74 561.26,335.11 561.04,333.48 560.85,331.85 560.68,330.22 560.54,328.59 560.42,326.97 560.33,325.34 560.26,323.71 560.22,322.08 560.21,320.45 560.22,318.82 560.26,317.19 560.33,315.56 560.42,313.93 560.54,312.31 560.68,310.68 560.85,309.05 561.04,307.42 561.26,305.79 561.51,304.16 561.78,302.53 562.08,300.9 562.41,299.27 562.76,297.64 563.14,296.01 563.54,294.39 563.97,292.76 564.42,291.13 564.9,289.5 565.41,287.87 565.94,286.24 566.5,284.61 567.08,282.98 567.69,281.35 568.32,279.72 568.98,278.1 569.66,276.47 570.37,274.84 571.11,273.21 571.87,271.58 572.65,269.95 573.46,268.32 574.3,266.69 575.16,265.06 576.04,263.44 576.95,261.81 577.89,260.18 578.85,258.55 579.83,256.92 580.84,255.29 581.87,253.66 582.93,252.03 584.01,250.4 585.12,248.77 586.25,247.14 587.4,245.52 588.58,243.89 589.79,242.26 591.01,240.63 592.26,239 593.53,237.37 594.83,235.74 596.15,234.11 597.5,232.48 598.86,230.85 600.25,229.23 601.67,227.6 603.1,225.97 604.56,224.34 606.04,222.71 607.55,221.08 609.07,219.45 610.62,217.82 612.19,216.19 613.78,214.56 615.4,212.94 617.04,211.31 618.69,209.68 620.37,208.05 622.08,206.42 623.8,204.79 625.54,203.16 627.31,201.53 629.09,199.9 630.9,198.27 632.73,196.65 634.58,195.02 636.45,193.39 638.33,191.76 640.24,190.13 642.17,188.5 644.12,186.87 646.09,185.24 648.08,183.61 650.08,181.98 652.11,180.36 654.16,178.73 656.22,177.1 658.3,175.47 660.41,173.84 662.53,172.21 664.66,170.58 666.82,168.95 669,167.32 671.19,165.69 673.4,164.07 675.62,162.44 677.87,160.81 680.13,159.18 682.41,157.55 684.7,155.92 687.02,154.29 689.34,152.66 691.69,151.03 694.05,149.41 696.43,147.78 698.82,146.15 701.22,144.52 703.65,142.89 706.09,141.26 708.54,139.63 711.01,138 713.49,136.37 715.98,134.74 718.5,133.11 721.02,131.49 723.56,129.86 726.11,128.23 728.68,126.6 731.25,124.97 733.85,123.34 736.45,121.71 739.07,120.08 741.7,118.45 744.34,116.82 746.99,115.2 749.66,113.57 752.34,111.94 755.03,110.31 757.73,108.68 760.44,107.05 763.16,105.42 765.89,103.79 768.63,102.16 771.39,100.53 774.15,98.91 776.92,97.28 779.71,95.65 782.5,94.02 785.3,92.39 788.11,90.76 790.93,89.13 793.75,87.5 796.59,85.87 799.43,84.24 802.28,82.62 805.14,80.99 808.01,79.36 810.88,77.73 813.76,76.1 816.65,74.47 819.54,72.84 822.44,71.21 825.35,69.58 828.26,67.95 831.18,66.33 834.1,64.7 837.03,63.07 839.96,61.44 842.9,59.81 845.84,58.18 848.79,56.55 851.74,54.92 854.69,53.29 857.65,51.66 860.61,50.04 863.57,48.41 866.54,46.78 869.51,45.15 872.48,43.52 875.46,41.89 878.44,40.26 881.42,38.63 884.4,37 887.38,35.38 890.36,33.75 893.35,32.12 896.33,30.49 899.31,28.86 902.3,27.23"/><polyline points="902.3,613.67 898.89,612.04 895.48,610.41 892.07,608.78 888.66,607.15 885.25,605.52 881.84,603.9 878.43,602.27 875.03,600.64 871.63,599.01 868.23,597.38 864.83,595.75 861.43,594.12 858.04,592.49 854.65,590.86 851.27,589.24 847.89,587.61 844.51,585.98 841.14,584.35 837.77,582.72 834.41,581.09 831.05,579.46 827.7,577.83 824.36,576.2 821.01,574.57 817.68,572.94 814.35,571.32 811.03,569.69 807.72,568.06 804.41,566.43 801.11,564.8 797.82,563.17 794.54,561.54 791.26,559.91 787.99,558.28 784.74,556.65 781.49,555.03 778.25,553.4 775.02,551.77 771.79,550.14 768.58,548.51 765.38,546.88 762.19,545.25 759.01,543.62 755.84,541.99 752.69,540.37 749.54,538.74 746.41,537.11 743.28,535.48 740.17,533.85 737.07,532.22 733.99,530.59 730.91,528.96 727.85,527.33 724.81,525.7 721.77,524.08 718.76,522.45 715.75,520.82 712.76,519.19 709.78,517.56 706.82,515.93 703.87,514.3 700.94,512.67 698.02,511.04 695.12,509.41 692.24,507.78 689.37,506.16 686.51,504.53 683.68,502.9 680.86,501.27 678.05,499.64 675.27,498.01 672.5,496.38 669.75,494.75 667.01,493.12 664.3,491.5 661.6,489.87 658.92,488.24 656.26,486.61 653.62,484.98 651,483.35 648.39,481.72 645.81,480.09 643.24,478.46 640.7,476.83 638.17,475.2 635.67,473.58 633.18,471.95 630.72,470.32 628.27,468.69 625.85,467.06 623.45,465.43 621.07,463.8 618.71,462.17 616.37,460.54 614.05,458.91 611.76,457.29 609.49,455.66 607.24,454.03 605.01,452.4 602.81,450.77 600.63,449.14 598.47,447.51 596.33,445.88 594.22,444.25 592.13,442.62 590.07,441 588.02,439.37 586.01,437.74 584.01,436.11 582.04,434.48 580.1,432.85 578.18,431.22 576.28,429.59 574.41,427.96 572.57,426.33 570.75,424.71 568.95,423.08 567.18,421.45 565.44,419.82 563.72,418.19 562.03,416.56 560.36,414.93 558.72,413.3 557.1,411.67 555.51,410.04 553.95,408.42 552.42,406.79 550.91,405.16 549.43,403.53 547.97,401.9 546.54,400.27 545.14,398.64 543.77,397.01 542.42,395.38 541.1,393.75 539.81,392.13 538.54,390.5 537.31,388.87 536.1,387.24 534.92,385.61 533.76,383.98 532.64,382.35 531.54,380.72 530.47,379.09 529.43,377.46 528.42,375.84 527.44,374.21 526.49,372.58 525.56,370.95 524.66,369.32 523.79,367.69 522.95,366.06 522.14,364.43 521.36,362.8 520.61,361.18 519.88,359.55 519.19,357.92 518.52,356.29 517.89,354.66 517.28,353.03 516.7,351.4 516.15,349.77 515.63,348.14 515.14,346.51 514.68,344.88 514.25,343.26 513.85,341.63 513.48,340 513.14,338.37 512.83,336.74 512.55,335.11 512.29,333.48 512.07,331.85 511.88,330.22 511.71,328.59 511.58,326.97 511.47,325.34 511.4,323.71 511.35,322.08 511.34,320.45 511.35,318.82 511.4,317.19 511.47,315.56 511.58,313.93 511.71,312.31 511.88,310.68 512.07,309.05 512.29,307.42 512.55,305.79 512.83,304.16 513.14,302.53 513.48,300.9 513.85,299.27 514.25,297.64 514.68,296.01 515.14,294.39 515.63,292.76 516.15,291.13 516.7,289.5 517.28,287.87 517.89,286.24 518.52,284.61 519.19,282.98 519.88,281.35 520.61,279.72 521.36,278.1 522.14,276.47 522.95,274.84 523.79,273.21 524.66,271.58 525.56,269.95 526.49,268.32 527.44,266.69 528.42,265.06 529.43,263.44 530.47,261.81 531.54,260.18 532.64,258.55 533.76,256.92 534.92,255.29 536.1,253.66 537.31,252.03 538.54,250.4 539.81,248.77 541.1,247.14 542.42,245.52 543.77,243.89 545.14,242.26 546.54,240.63 547.97,239 549.43,237.37 550.91,235.74 552.42,234.11 553.95,232.48 555.51,230.85 557.1,229.23 558.72,227.6 560.36,225.97 562.03,224.34 563.72,222.71 565.44,221.08 567.18,219.45 568.95,217.82 570.75,216.19 572.57,214.56 574.41,212.94 576.28,211.31 578.18,209.68 580.1,208.05 582.04,206.42 584.01,204.79 586.01,203.16 588.02,201.53 590.07,199.9 592.13,198.27 594.22,196.65 596.33,195.02 598.47,193.39 600.63,191.76 602.81,190.13 605.01,188.5 607.24,186.87 609.49,185.24 611.76,183.61 614.05,181.98 616.37,180.36 618.71,178.73 621.07,177.1 623.45,175.47 625.85,173.84 628.27,172.21 630.72,170.58 633.18,168.95 635.67,167.32 638.17,165.69 640.7,164.07 643.24,162.44 645.81,160.81 648.39,159.18 651,157.55 653.62,155.92 656.26,154.29 658.92,152.66 661.6,151.03 664.3,149.41 667.01,147.78 669.75,146.15 672.5,144.52 675.27,142.89 678.05,141.26 680.86,139.63 683.68,138 686.51,136.37 689.37,134.74 692.24,133.11 695.12,131.49 698.02,129.86 700.94,128.23 703.87,126.6 706.82,124.97 709.78,123.34 712.76,121.71 715.75,120.08 718.76,118.45 721.77,116.82 724.81,115.2 727.85,113.57 730.91,111.94 733.99,110.31 737.07,108.68 740.17,107.05 743.28,105.42 746.41,103.79 749.54,102.16 752.69,100.53 755.84,98.91 759.01,97.28 762.19,95.65 765.38,94.02 768.58,92.39 771.79,90.76 775.02,89.13 778.25,87.5 781.49,85.87 784.74,84.24 787.99,82.62 791.26,80.99 794.54,79.36 797.82,77.73 801.11,76.1 804.41,74.47 807.72,72.84 811.03,71.21 814.35,69.58 817.68,67.95 821.01,66.33 824.36,64.7 827.7,63.07 831.05,61.44 834.41,59.81 837.77,58.18 841.14,56.55 844.51,54.92 847.89,53.29 851.27,51.66 854.65,50.04 858.04,48.41 861.43,46.78 864.83,45.15 868.23,43.52 871.63,41.89 875.03,40.26 878.43,38.63 881.84,37 885.25,35.38 888.66,33.75 892.07,32.12 895.48,30.49 898.89,28.86 902.3,27.23"/><polyline points="902.3,613.67 898.46,612.04 894.62,610.41 890.79,608.78 886.95,607.15 883.11,605.52 879.28,603.9 875.45,602.27 871.62,600.64 867.79,599.01 863.97,597.38 860.14,595.75 856.33,594.12 852.51,592.49 848.7,590.86 844.89,589.24 841.09,587.61 837.29,585.98 833.5,584.35 829.71,582.72 825.92,581.09 822.15,579.46 818.38,577.83 814.61,576.2 810.85,574.57 807.1,572.94 803.36,571.32 799.62,569.69 795.9,568.06 792.18,566.43 788.46,564.8 784.76,563.17 781.07,561.54 777.38,559.91 773.71,558.28 770.04,556.65 766.39,555.03 762.74,553.4 759.11,551.77 755.48,550.14 751.87,548.51 748.27,546.88 744.68,545.25 741.1,543.62 737.54,541.99 733.98,540.37 730.44,538.74 726.92,537.11 723.41,535.48 719.91,533.85 716.42,532.22 712.95,530.59 709.49,528.96 706.05,527.33 702.62,525.7 699.21,524.08 695.81,522.45 692.43,520.82 689.07,519.19 685.72,517.56 682.38,515.93 679.07,514.3 675.77,512.67 672.49,511.04 669.23,509.41 665.98,507.78 662.75,506.16 659.54,504.53 656.35,502.9 653.18,501.27 650.02,499.64 646.89,498.01 643.77,496.38 640.68,494.75 637.6,493.12 634.55,491.5 631.51,489.87 628.5,488.24 625.51,486.61 622.53,484.98 619.58,483.35 616.65,481.72 613.75,480.09 610.86,478.46 608,476.83 605.16,475.2 602.34,473.58 599.54,471.95 596.77,470.32 594.02,468.69 591.29,467.06 588.59,465.43 585.91,463.8 583.26,462.17 580.63,460.54 578.02,458.91 575.44,457.29 572.89,455.66 570.36,454.03 567.85,452.4 565.37,450.77 562.92,449.14 560.49,447.51 558.09,445.88 555.71,444.25 553.36,442.62 551.04,441 548.74,439.37 546.47,437.74 544.23,436.11 542.01,434.48 539.82,432.85 537.66,431.22 535.53,429.59 533.43,427.96 531.35,426.33 529.3,424.71 527.28,423.08 525.29,421.45 523.33,419.82 521.4,418.19 519.49,416.56 517.62,414.93 515.77,413.3 513.95,411.67 512.17,410.04 510.41,408.42 508.68,406.79 506.98,405.16 505.32,403.53 503.68,401.9 502.07,400.27 500.5,398.64 498.95,397.01 497.43,395.38 495.95,393.75 494.5,392.13 493.07,390.5 491.68,388.87 490.32,387.24 488.99,385.61 487.7,383.98 486.43,382.35 485.2,380.72 484,379.09 482.83,377.46 481.69,375.84 480.58,374.21 479.51,372.58 478.47,370.95 477.46,369.32 476.48,367.69 475.53,366.06 474.62,364.43 473.74,362.8 472.9,361.18 472.08,359.55 471.3,357.92 470.55,356.29 469.83,354.66 469.15,353.03 468.5,351.4 467.89,349.77 467.3,348.14 466.75,346.51 466.23,344.88 465.75,343.26 465.3,341.63 464.88,340 464.49,338.37 464.14,336.74 463.83,335.11 463.54,333.48 463.29,331.85 463.07,330.22 462.89,328.59 462.74,326.97 462.62,325.34 462.54,323.71 462.49,322.08 462.47,320.45 462.49,318.82 462.54,317.19 462.62,315.56 462.74,313.93 462.89,312.31 463.07,310.68 463.29,309.05 463.54,307.42 463.83,305.79 464.14,304.16 464.49,302.53 464.88,300.9 465.3,299.27 465.75,297.64 466.23,296.01 466.75,294.39 467.3,292.76 467.89,291.13 468.5,289.5 469.15,287.87 469.83,286.24 470.55,284.61 471.3,282.98 472.08,281.35 472.9,279.72 473.74,278.1 474.62,276.47 475.53,274.84 476.48,273.21 477.46,271.58 478.47,269.95 479.51,268.32 480.58,266.69 481.69,265.06 482.83,263.44 484,261.81 485.2,260.18 486.43,258.55 487.7,256.92 488.99,255.29 490.32,253.66 491.68,252.03 493.07,250.4 494.5,248.77 495.95,247.14 497.43,245.52 498.95,243.89 500.5,242.26 502.07,240.63 503.68,239 505.32,237.37 506.98,235.74 508.68,234.11 510.41,232.48 512.17,230.85 513.95,229.23 515.77,227.6 517.62,225.97 519.49,224.34 521.4,222.71 523.33,221.08 525.29,219.45 527.28,217.82 529.3,216.19 531.35,214.56 533.43,212.94 535.53,211.31 537.66,209.68 539.82,208.05 542.01,206.42 544.23,204.79 546.47,203.16 548.74,201.53 551.04,199.9 553.36,198.27 555.71,196.65 558.09,195.02 560.49,193.39 562.92,191.76 565.37,190.13 567.85,188.5 570.36,186.87 572.89,185.24 575.44,183.61 578.02,181.98 580.63,180.36 583.26,178.73 585.91,177.1 588.59,175.47 591.29,173.84 594.02,172.21 596.77,170.58 599.54,168.95 602.34,167.32 605.16,165.69 608,164.07 610.86,162.44 613.75,160.81 616.65,159.18 619.58,157.55 622.53,155.92 625.51,154.29 628.5,152.66 631.51,151.03 634.55,149.41 637.6,147.78 640.68,146.15 643.77,144.52 646.89,142.89 650.02,141.26 653.18,139.63 656.35,138 659.54,136.37 662.75,134.74 665.98,133.11 669.23,131.49 672.49,129.86 675.77,128.23 679.07,126.6 682.38,124.97 685.72,123.34 689.07,121.71 692.43,120.08 695.81,118.45 699.21,116.82 702.62,115.2 706.05,113.57 709.49,111.94 712.95,110.31 716.42,108.68 719.91,107.05 723.41,105.42 726.92,103.79 730.44,102.16 733.98,100.53 737.54,98.91 741.1,97.28 744.68,95.65 748.27,94.02 751.87,92.39 755.48,90.76 759.11,89.13 762.74,87.5 766.39,85.87 770.04,84.24 773.71,82.62 777.38,80.99 781.07,79.36 784.76,77.73 788.46,76.1 792.18,74.47 795.9,72.84 799.62,71.21 803.36,69.58 807.1,67.95 810.85,66.33 814.61,64.7 818.38,63.07 822.15,61.44 825.92,59.81 829.71,58.18 833.5,56.55 837.29,54.92 841.09,53.29 844.89,51.66 848.7,50.04 852.51,48.41 856.33,46.78 860.14,45.15 863.97,43.52 867.79,41.89 871.62,40.26 875.45,38.63 879.28,37 883.11,35.38 886.95,33.75 890.79,32.12 894.62,30.49 898.46,28.86 902.3,27.23"/><polyline points="902.3,613.67 898.04,612.04 893.77,610.41 889.51,608.78 885.24,607.15 880.98,605.52 876.72,603.9 872.47,602.27 868.21,600.64 863.96,599.01 859.71,597.38 855.46,595.75 851.22,594.12 846.98,592.49 842.74,590.86 838.51,589.24 834.29,587.61 830.07,585.98 825.85,584.35 821.64,582.72 817.44,581.09 813.24,579.46 809.05,577.83 804.87,576.2 800.69,574.57 796.53,572.94 792.37,571.32 788.22,569.69 784.07,568.06 779.94,566.43 775.82,564.8 771.7,563.17 767.6,561.54 763.5,559.91 759.42,558.28 755.35,556.65 751.28,555.03 747.23,553.4 743.19,551.77 739.17,550.14 735.15,548.51 731.15,546.88 727.17,545.25 723.19,543.62 719.23,541.99 715.28,540.37 711.35,538.74 707.43,537.11 703.53,535.48 699.64,533.85 695.77,532.22 691.91,530.59 688.07,528.96 684.24,527.33 680.43,525.7 676.64,524.08 672.87,522.45 669.11,520.82 665.37,519.19 661.65,517.56 657.95,515.93 654.27,514.3 650.6,512.67 646.95,511.04 643.33,509.41 639.72,507.78 636.13,506.16 632.57,504.53 629.02,502.9 625.5,501.27 621.99,499.64 618.51,498.01 615.05,496.38 611.61,494.75 608.19,493.12 604.8,491.5 601.43,489.87 598.08,488.24 594.75,486.61 591.45,484.98 588.17,483.35 584.91,481.72 581.68,480.09 578.48,478.46 575.3,476.83 572.14,475.2 569.01,473.58 565.9,471.95 562.82,470.32 559.77,468.69 556.74,467.06 553.73,465.43 550.76,463.8 547.81,462.17 544.89,460.54 541.99,458.91 539.13,457.29 536.29,455.66 533.47,454.03 530.69,452.4 527.93,450.77 525.21,449.14 522.51,447.51 519.84,445.88 517.2,444.25 514.59,442.62 512.01,441 509.46,439.37 506.93,437.74 504.44,436.11 501.98,434.48 499.55,432.85 497.15,431.22 494.78,429.59 492.44,427.96 490.13,426.33 487.86,424.71 485.61,423.08 483.4,421.45 481.22,419.82 479.07,418.19 476.96,416.56 474.87,414.93 472.82,413.3 470.8,411.67 468.82,410.04 466.87,408.42 464.95,406.79 463.06,405.16 461.21,403.53 459.39,401.9 457.6,400.27 455.85,398.64 454.13,397.01 452.45,395.38 450.8,393.75 449.19,392.13 447.6,390.5 446.06,388.87 444.55,387.24 443.07,385.61 441.63,383.98 440.23,382.35 438.85,380.72 437.52,379.09 436.22,377.46 434.95,375.84 433.72,374.21 432.53,372.58 431.37,370.95 430.25,369.32 429.17,367.69 428.12,366.06 427.1,364.43 426.13,362.8 425.18,361.18 424.28,359.55 423.41,357.92 422.58,356.29 421.78,354.66 421.02,353.03 420.3,351.4 419.62,349.77 418.97,348.14 418.36,346.51 417.78,344.88 417.24,343.26 416.74,341.63 416.28,340 415.85,338.37 415.46,336.74 415.11,335.11 414.79,333.48 414.51,331.85 414.27,330.22 414.07,328.59 413.9,326.97 413.77,325.34 413.67,323.71 413.62,322.08 413.6,320.45 413.62,318.82 413.67,317.19 413.77,315.56 413.9,313.93 414.07,312.31 414.27,310.68 414.51,309.05 414.79,307.42 415.11,305.79 415.46,304.16 415.85,302.53 416.28,300.9 416.74,299.27 417.24,297.64 417.78,296.01 418.36,294.39 418.97,292.76 419.62,291.13 420.3,289.5 421.02,287.87 421.78,286.24 422.58,284.61 423.41,282.98 424.28,281.35 425.18,279.72 426.13,278.1 427.1,276.47 428.12,274.84 429.17,273.21 430.25,271.58 431.37,269.95 432.53,268.32 433.72,266.69 434.95,265.06 436.22,263.44 437.52,261.81 438.85,260.18 440.23,258.55 441.63,256.92 443.07,255.29 444.55,253.66 446.06,252.03 447.6,250.4 449.19,248.77 450.8,247.14 452.45,245.52 454.13,243.89 455.85,242.26 457.6,240.63 459.39,239 461.21,237.37 463.06,235.74 464.95,234.11 466.87,232.48 468.82,230.85 470.8,229.23 472.82,227.6 474.87,225.97 476.96,224.34 479.07,222.71 481.22,221.08 483.4,219.45 485.61,217.82 487.86,216.19 490.13,214.56 492.44,212.94 494.78,211.31 497.15,209.68 499.55,208.05 501.98,206.42 504.44,204.79 506.93,203.16 509.46,201.53 512.01,199.9 514.59,198.27 517.2,196.65 519.84,195.02 522.51,193.39 525.21,191.76 527.93,190.13 530.69,188.5 533.47,186.87 536.29,185.24 539.13,183.61 541.99,181.98 544.89,180.36 547.81,178.73 550.76,177.1 553.73,175.47 556.74,173.84 559.77,172.21 562.82,170.58 565.9,168.95 569.01,167.32 572.14,165.69 575.3,164.07 578.48,162.44 581.68,160.81 584.91,159.18 588.17,157.55 591.45,155.92 594.75,154.29 598.08,152.66 601.43,151.03 604.8,149.41 608.19,147.78 611.61,146.15 615.05,144.52 618.51,142.89 621.99,141.26 625.5,139.63 629.02,138 632.57,136.37 636.13,134.74 639.72,133.11 643.33,131.49 646.95,129.86 650.6,128.23 654.27,126.6 657.95,124.97 661.65,123.34 665.37,121.71 669.11,120.08 672.87,118.45 676.64,116.82 680.43,115.2 684.24,113.57 688.07,111.94 691.91,110.31 695.77,108.68 699.64,107.05 703.53,105.42 707.43,103.79 711.35,102.16 715.28,100.53 719.23,98.91 723.19,97.28 727.17,95.65 731.15,94.02 735.15,92.39 739.17,90.76 743.19,89.13 747.23,87.5 751.28,85.87 755.35,84.24 759.42,82.62 763.5,80.99 767.6,79.36 771.7,77.73 775.82,76.1 779.94,74.47 784.07,72.84 788.22,71.21 792.37,69.58 796.53,67.95 800.69,66.33 804.87,64.7 809.05,63.07 813.24,61.44 817.44,59.81 821.64,58.18 825.85,56.55 830.07,54.92 834.29,53.29 838.51,51.66 842.74,50.04 846.98,48.41 851.22,46.78 855.46,45.15 859.71,43.52 863.96,41.89 868.21,40.26 872.47,38.63 876.72,37 880.98,35.38 885.24,33.75 889.51,32.12 893.77,30.49 898.04,28.86 902.3,27.23"/><polyline points="902.3,613.67 897.61,612.04 892.92,610.41 888.23,608.78 883.54,607.15 878.85,605.52 874.17,603.9 869.48,602.27 864.8,600.64 860.12,599.01 855.45,597.38 850.78,595.75 846.11,594.12 841.45,592.49 836.79,590.86 832.13,589.24 827.48,587.61 822.84,585.98 818.21,584.35 813.58,582.72 808.95,581.09 804.34,579.46 799.73,577.83 795.13,576.2 790.53,574.57 785.95,572.94 781.37,571.32 776.81,569.69 772.25,568.06 767.7,566.43 763.17,564.8 758.64,563.17 754.13,561.54 749.62,559.91 745.13,558.28 740.65,556.65 736.18,555.03 731.73,553.4 727.28,551.77 722.86,550.14 718.44,548.51 714.04,546.88 709.65,545.25 705.28,543.62 700.92,541.99 696.58,540.37 692.25,538.74 687.94,537.11 683.65,535.48 679.37,533.85 675.11,532.22 670.87,530.59 666.64,528.96 662.44,527.33 658.25,525.7 654.08,524.08 649.93,522.45 645.79,520.82 641.68,519.19 637.59,517.56 633.51,515.93 629.46,514.3 625.43,512.67 621.42,511.04 617.43,509.41 613.46,507.78 609.52,506.16 605.6,504.53 601.69,502.9 597.82,501.27 593.96,499.64 590.13,498.01 586.32,496.38 582.54,494.75 578.78,493.12 575.05,491.5 571.34,489.87 567.65,488.24 564,486.61 560.36,484.98 556.76,483.35 553.18,481.72 549.62,480.09 546.1,478.46 542.6,476.83 539.12,475.2 535.68,473.58 532.26,471.95 528.87,470.32 525.51,468.69 522.18,467.06 518.88,465.43 515.6,463.8 512.36,462.17 509.15,460.54 505.96,458.91 502.81,457.29 499.68,455.66 496.59,454.03 493.53,452.4 490.5,450.77 487.5,449.14 484.53,447.51 481.59,445.88 478.69,444.25 475.82,442.62 472.98,441 470.17,439.37 467.4,437.74 464.66,436.11 461.95,434.48 459.27,432.85 456.63,431.22 454.03,429.59 451.46,427.96 448.92,426.33 446.41,424.71 443.95,423.08 441.51,421.45 439.11,419.82 436.75,418.19 434.42,416.56 432.13,414.93 429.87,413.3 427.65,411.67 425.47,410.04 423.32,408.42 421.21,406.79 419.14,405.16 417.1,403.53 415.1,401.9 413.13,400.27 411.21,398.64 409.32,397.01 407.46,395.38 405.65,393.75 403.87,392.13 402.14,390.5 400.44,388.87 398.77,387.24 397.15,385.61 395.56,383.98 394.02,382.35 392.51,380.72 391.04,379.09 389.61,377.46 388.22,375.84 386.87,374.21 385.55,372.58 384.28,370.95 383.05,369.32 381.85,367.69 380.7,366.06 379.58,364.43 378.51,362.8 377.47,361.18 376.48,359.55 375.52,357.92 374.61,356.29 373.73,354.66 372.9,353.03 372.1,351.4 371.35,349.77 370.63,348.14 369.96,346.51 369.33,344.88 368.74,343.26 368.19,341.63 367.67,340 367.2,338.37 366.78,336.74 366.39,335.11 366.04,333.48 365.73,331.85 365.47,330.22 365.24,328.59 365.06,326.97 364.91,325.34 364.81,323.71 364.75,322.08 364.73,320.45 364.75,318.82 364.81,317.19 364.91,315.56 365.06,313.93 365.24,312.31 365.47,310.68 365.73,309.05 366.04,307.42 366.39,305.79 366.78,304.16 367.2,302.53 367.67,300.9 368.19,299.27 368.74,297.64 369.33,296.01 369.96,294.39 370.63,292.76 371.35,291.13 372.1,289.5 372.9,287.87 373.73,286.24 374.61,284.61 375.52,282.98 376.48,281.35 377.47,279.72 378.51,278.1 379.58,276.47 380.7,274.84 381.85,273.21 383.05,271.58 384.28,269.95 385.55,268.32 386.87,266.69 388.22,265.06 389.61,263.44 391.04,261.81 392.51,260.18 394.02,258.55 395.56,256.92 397.15,255.29 398.77,253.66 400.44,252.03 402.14,250.4 403.87,248.77 405.65,247.14 407.46,245.52 409.32,243.89 411.21,242.26 413.13,240.63 415.1,239 417.1,237.37 419.14,235.74 421.21,234.11 423.32,232.48 425.47,230.85 427.65,229.23 429.87,227.6 432.13,225.97 434.42,224.34 436.75,222.71 439.11,221.08 441.51,219.45 443.95,217.82 446.41,216.19 448.92,214.56 451.46,212.94 454.03,211.31 456.63,209.68 459.27,208.05 461.95,206.42 464.66,204.79 467.4,203.16 470.17,201.53 472.98,199.9 475.82,198.27 478.69,196.65 481.59,195.02 484.53,193.39 487.5,191.76 490.5,190.13 493.53,188.5 496.59,186.87 499.68,185.24 502.81,183.61 505.96,181.98 509.15,180.36 512.36,178.73 515.6,177.1 518.88,175.47 522.18,173.84 525.51,172.21 528.87,170.58 532.26,168.95 535.68,167.32 539.12,165.69 542.6,164.07 546.1,162.44 549.62,160.81 553.18,159.18 556.76,157.55 560.36,155.92 564,154.29 567.65,152.66 571.34,151.03 575.05,149.41 578.78,147.78 582.54,146.15 586.32,144.52 590.13,142.89 593.96,141.26 597.82,139.63 601.69,138 605.6,136.37 609.52,134.74 613.46,133.11 617.43,131.49 621.42,129.86 625.43,128.23 629.46,126.6 633.51,124.97 637.59,123.34 641.68,121.71 645.79,120.08 649.93,118.45 654.08,116.82 658.25,115.2 662.44,113.57 666.64,111.94 670.87,110.31 675.11,108.68 679.37,107.05 683.65,105.42 687.94,103.79 692.25,102.16 696.58,100.53 700.92,98.91 705.28,97.28 709.65,95.65 714.04,94.02 718.44,92.39 722.86,90.76 727.28,89.13 731.73,87.5 736.18,85.87 740.65,84.24 745.13,82.62 749.62,80.99 754.13,79.36 758.64,77.73 763.17,76.1 767.7,74.47 772.25,72.84 776.81,71.21 781.37,69.58 785.95,67.95 790.53,66.33 795.13,64.7 799.73,63.07 804.34,61.44 808.95,59.81 813.58,58.18 818.21,56.55 822.84,54.92 827.48,53.29 832.13,51.66 836.79,50.04 841.45,48.41 846.11,46.78 850.78,45.15 855.45,43.52 860.12,41.89 864.8,40.26 869.48,38.63 874.17,37 878.85,35.38 883.54,33.75 888.23,32.12 892.92,30.49 897.61,28.86 902.3,27.23"/><polyline points="902.3,613.67 897.18,612.04 892.07,610.41 886.95,608.78 881.83,607.15 876.72,605.52 871.61,603.9 866.5,602.27 861.39,600.64 856.29,599.01 851.19,597.38 846.09,595.75 841,594.12 835.91,592.49 830.83,590.86 825.75,589.24 820.68,587.61 815.62,585.98 810.56,584.35 805.51,582.72 800.47,581.09 795.43,579.46 790.4,577.83 785.38,576.2 780.37,574.57 775.37,572.94 770.38,571.32 765.4,569.69 760.43,568.06 755.47,566.43 750.52,564.8 745.58,563.17 740.66,561.54 735.74,559.91 730.84,558.28 725.95,556.65 721.08,555.03 716.22,553.4 711.37,551.77 706.54,550.14 701.73,548.51 696.92,546.88 692.14,545.25 687.37,543.62 682.62,541.99 677.88,540.37 673.16,538.74 668.46,537.11 663.77,535.48 659.11,533.85 654.46,532.22 649.83,530.59 645.22,528.96 640.63,527.33 636.06,525.7 631.51,524.08 626.98,522.45 622.48,520.82 617.99,519.19 613.52,517.56 609.08,515.93 604.66,514.3 600.26,512.67 595.89,511.04 591.53,509.41 587.21,507.78 582.9,506.16 578.62,504.53 574.37,502.9 570.14,501.27 565.93,499.64 561.75,498.01 557.6,496.38 553.47,494.75 549.37,493.12 545.3,491.5 541.25,489.87 537.23,488.24 533.24,486.61 529.28,484.98 525.34,483.35 521.44,481.72 517.56,480.09 513.71,478.46 509.9,476.83 506.11,475.2 502.35,473.58 498.62,471.95 494.92,470.32 491.26,468.69 487.62,467.06 484.02,465.43 480.45,463.8 476.91,462.17 473.4,460.54 469.93,458.91 466.49,457.29 463.08,455.66 459.71,454.03 456.37,452.4 453.06,450.77 449.79,449.14 446.55,447.51 443.35,445.88 440.18,444.25 437.05,442.62 433.95,441 430.89,439.37 427.86,437.74 424.87,436.11 421.92,434.48 419,432.85 416.12,431.22 413.28,429.59 410.47,427.96 407.7,426.33 404.97,424.71 402.28,423.08 399.62,421.45 397.01,419.82 394.43,418.19 391.89,416.56 389.39,414.93 386.93,413.3 384.5,411.67 382.12,410.04 379.78,408.42 377.47,406.79 375.21,405.16 372.99,403.53 370.8,401.9 368.66,400.27 366.56,398.64 364.5,397.01 362.48,395.38 360.5,393.75 358.56,392.13 356.67,390.5 354.81,388.87 353,387.24 351.23,385.61 349.5,383.98 347.81,382.35 346.17,380.72 344.56,379.09 343,377.46 341.48,375.84 340.01,374.21 338.58,372.58 337.19,370.95 335.84,369.32 334.54,367.69 333.28,366.06 332.06,364.43 330.89,362.8 329.76,361.18 328.68,359.55 327.63,357.92 326.63,356.29 325.68,354.66 324.77,353.03 323.9,351.4 323.08,349.77 322.3,348.14 321.57,346.51 320.88,344.88 320.23,343.26 319.63,341.63 319.07,340 318.56,338.37 318.09,336.74 317.67,335.11 317.29,333.48 316.95,331.85 316.66,330.22 316.42,328.59 316.22,326.97 316.06,325.34 315.95,323.71 315.88,322.08 315.86,320.45 315.88,318.82 315.95,317.19 316.06,315.56 316.22,313.93 316.42,312.31 316.66,310.68 316.95,309.05 317.29,307.42 317.67,305.79 318.09,304.16 318.56,302.53 319.07,300.9 319.63,299.27 320.23,297.64 320.88,296.01 321.57,294.39 322.3,292.76 323.08,291.13 323.9,289.5 324.77,287.87 325.68,286.24 326.63,284.61 327.63,282.98 328.68,281.35 329.76,279.72 330.89,278.1 332.06,276.47 333.28,274.84 334.54,273.21 335.84,271.58 337.19,269.95 338.58,268.32 340.01,266.69 341.48,265.06 343,263.44 344.56,261.81 346.17,260.18 347.81,258.55 349.5,256.92 351.23,255.29 353,253.66 354.81,252.03 356.67,250.4 358.56,248.77 360.5,247.14 362.48,245.52 364.5,243.89 366.56,242.26 368.66,240.63 370.8,239 372.99,237.37 375.21,235.74 377.47,234.11 379.78,232.48 382.12,230.85 384.5,229.23 386.93,227.6 389.39,225.97 391.89,224.34 394.43,222.71 397.01,221.08 399.62,219.45 402.28,217.82 404.97,216.19 407.7,214.56 410.47,212.94 413.28,211.31 416.12,209.68 419,208.05 421.92,206.42 424.87,204.79 427.86,203.16 430.89,201.53 433.95,199.9 437.05,198.27 440.18,196.65 443.35,195.02 446.55,193.39 449.79,191.76 453.06,190.13 456.37,188.5 459.71,186.87 463.08,185.24 466.49,183.61 469.93,181.98 473.4,180.36 476.91,178.73 480.45,177.1 484.02,175.47 487.62,173.84 491.26,172.21 494.92,170.58 498.62,168.95 502.35,167.32 506.11,165.69 509.9,164.07 513.71,162.44 517.56,160.81 521.44,159.18 525.34,157.55 529.28,155.92 533.24,154.29 537.23,152.66 541.25,151.03 545.3,149.41 549.37,147.78 553.47,146.15 557.6,144.52 561.75,142.89 565.93,141.26 570.14,139.63 574.37,138 578.62,136.37 582.9,134.74 587.21,133.11 591.53,131.49 595.89,129.86 600.26,128.23 604.66,126.6 609.08,124.97 613.52,123.34 617.99,121.71 622.48,120.08 626.98,118.45 631.51,116.82 636.06,115.2 640.63,113.57 645.22,111.94 649.83,110.31 654.46,108.68 659.11,107.05 663.77,105.42 668.46,103.79 673.16,102.16 677.88,100.53 682.62,98.91 687.37,97.28 692.14,95.65 696.92,94.02 701.73,92.39 706.54,90.76 711.37,89.13 716.22,87.5 721.08,85.87 725.95,84.24 730.84,82.62 735.74,80.99 740.66,79.36 745.58,77.73 750.52,76.1 755.47,74.47 760.43,72.84 765.4,71.21 770.38,69.58 775.37,67.95 780.37,66.33 785.38,64.7 790.4,63.07 795.43,61.44 800.47,59.81 805.51,58.18 810.56,56.55 815.62,54.92 820.68,53.29 825.75,51.66 830.83,50.04 835.91,48.41 841,46.78 846.09,45.15 851.19,43.52 856.29,41.89 861.39,40.26 866.5,38.63 871.61,37 876.72,35.38 881.83,33.75 886.95,32.12 892.07,30.49 897.18,28.86 902.3,27.23"/></g><polyline fill="none" stroke="#fff" stroke-opacity="0.34" stroke-width="1.39" stroke-dasharray="1.39 2.29" points="813.82,426.33 813.52,425.33 813.22,424.33 812.93,423.33 812.63,422.33 812.34,421.33 812.06,420.33 811.77,419.33 811.49,418.33 811.21,417.33 810.93,416.33 810.65,415.33 810.38,414.33 810.11,413.33 809.85,412.33 809.58,411.33 809.32,410.33 809.06,409.33 808.8,408.33 808.55,407.33 808.3,406.33 808.05,405.33 807.81,404.33 807.56,403.33 807.32,402.33 807.09,401.33 806.85,400.33 806.62,399.33 806.39,398.33 806.16,397.33 805.94,396.33 805.72,395.33 805.5,394.33 805.29,393.33 805.07,392.33 804.86,391.33 804.66,390.33 804.45,389.33 804.25,388.32 804.05,387.32 803.86,386.32 803.66,385.32 803.47,384.32 803.29,383.32 803.1,382.32 802.92,381.32 802.74,380.32 802.57,379.32 802.39,378.32 802.22,377.32 802.06,376.32 801.89,375.32 801.73,374.32 801.57,373.32 801.42,372.32 801.26,371.32 801.11,370.32 800.97,369.32 800.82,368.32 800.68,367.32 800.54,366.32 800.41,365.32 800.28,364.32 800.15,363.32 800.02,362.32 799.9,361.32 799.78,360.32 799.66,359.32 799.54,358.32 799.43,357.32 799.32,356.32 799.22,355.32 799.11,354.32 799.01,353.32 798.92,352.32 798.82,351.32 798.73,350.31 798.64,349.31 798.56,348.31 798.48,347.31 798.4,346.31 798.32,345.31 798.25,344.31 798.18,343.31 798.11,342.31 798.05,341.31 797.99,340.31 797.93,339.31 797.87,338.31 797.82,337.31 797.77,336.31 797.72,335.31 797.68,334.31 797.64,333.31 797.6,332.31 797.57,331.31 797.54,330.31 797.51,329.31 797.49,328.31 797.46,327.31 797.44,326.31 797.43,325.31 797.41,324.31 797.4,323.31 797.4,322.31 797.39,321.31 797.39,320.31 797.39,319.31 797.4,318.31 797.41,317.31 797.42,316.31 797.43,315.31 797.45,314.31 797.47,313.31 797.49,312.31 797.52,311.3 797.55,310.3 797.58,309.3 797.61,308.3 797.65,307.3 797.69,306.3 797.74,305.3 797.78,304.3 797.83,303.3 797.89,302.3 797.94,301.3 798,300.3 798.06,299.3 798.13,298.3 798.2,297.3 798.27,296.3 798.34,295.3 798.42,294.3 798.5,293.3 798.58,292.3 798.67,291.3 798.76,290.3 798.85,289.3 798.94,288.3 799.04,287.3 799.14,286.3 799.25,285.3 799.35,284.3 799.46,283.3 799.58,282.3 799.69,281.3 799.81,280.3 799.93,279.3 800.06,278.3 800.18,277.3 800.31,276.3 800.45,275.3 800.58,274.29 800.72,273.29 800.86,272.29 801.01,271.29 801.16,270.29 801.31,269.29 801.46,268.29 801.62,267.29 801.78,266.29 801.94,265.29 802.1,264.29 802.27,263.29 802.44,262.29 802.62,261.29 802.79,260.29 802.97,259.29 803.16,258.29 803.34,257.29 803.53,256.29 803.72,255.29 803.91,254.29 804.11,253.29 804.31,252.29 804.51,251.29 804.72,250.29 804.92,249.29 805.13,248.29 805.35,247.29 805.56,246.29 805.78,245.29 806,244.29 806.23,243.29 806.46,242.29 806.69,241.29 806.92,240.29 807.15,239.29 807.39,238.29 807.63,237.29 807.88,236.28 808.12,235.28 808.37,234.28 808.62,233.28 808.88,232.28 809.13,231.28 809.39,230.28 809.66,229.28 809.92,228.28 810.19,227.28 810.46,226.28 810.73,225.28 811.01,224.28 811.29,223.28 811.57,222.28 811.85,221.28 812.14,220.28 812.43,219.28 812.72,218.28 813.01,217.28 813.31,216.28 813.61,215.28 813.91,214.28 814.21,213.28 814.52,212.28 814.83,211.28 815.14,210.28 815.45,209.28 815.77,208.28 816.09,207.28 816.41,206.28 816.73,205.28 817.06,204.28 817.39,203.28 817.72,202.28 818.06,201.28 818.39,200.28 818.73,199.28 819.07,198.27 819.41,197.27 819.76,196.27 820.11,195.27 820.46,194.27 820.81,193.27 821.17,192.27 821.52,191.27 821.88,190.27 822.25,189.27 822.61,188.27 822.98,187.27 823.35,186.27 823.72,185.27 824.09,184.27 824.47,183.27 824.85,182.27 825.23,181.27 825.61,180.27 825.99,179.27 826.38,178.27 826.77,177.27 827.16,176.27 827.55,175.27 827.95,174.27 828.35,173.27 828.75,172.27 829.15,171.27 829.55,170.27 829.96,169.27 830.37,168.27 830.78,167.27 831.19,166.27 831.6,165.27 832.02,164.27 832.44,163.27 832.86,162.27 833.28,161.27 833.71,160.26 834.13,159.26 834.56,158.26 834.99,157.26 835.42,156.26 835.86,155.26 836.29,154.26 836.73,153.26 837.17,152.26 837.61,151.26 838.05,150.26 838.5,149.26 838.95,148.26 839.4,147.26 839.85,146.26 840.3,145.26 840.75,144.26 841.21,143.26 841.67,142.26 842.13,141.26 842.59,140.26 843.05,139.26 843.52,138.26 843.98,137.26 844.45,136.26 844.92,135.26 845.39,134.26 845.87,133.26 846.34,132.26 846.82,131.26 847.29,130.26 847.77,129.26 848.25,128.26 848.74,127.26 849.22,126.26 849.71,125.26 850.19,124.26 850.68,123.26 851.17,122.25 851.66,121.25 852.16,120.25 852.65,119.25 853.15,118.25 853.65,117.25 854.14,116.25 854.64,115.25 855.15,114.25 855.65,113.25 856.15,112.25 856.66,111.25 857.17,110.25 857.67,109.25 858.18,108.25 858.69,107.25 859.21,106.25 859.72,105.25 860.23,104.25 860.75,103.25 861.26,102.25 861.78,101.25 862.3,100.25 862.82,99.25 863.34,98.25 863.87,97.25 864.39,96.25 864.91,95.25 865.44,94.25 865.97,93.25 866.49,92.25 867.02,91.25 867.55,90.25 868.08,89.25 868.62,88.25 869.15,87.25 869.68,86.25 870.22,85.25 870.75,84.24 871.29,83.24 871.83,82.24 872.37,81.24 872.91,80.24 873.45,79.24 873.99,78.24 874.53,77.24 875.07,76.24 875.61,75.24 876.16,74.24 876.7,73.24 877.25,72.24 877.79,71.24 878.34,70.24 878.89,69.24 879.44,68.24 879.99,67.24 880.54,66.24 881.09,65.24 881.64,64.24 882.19,63.24 882.74,62.24 883.29,61.24 883.85,60.24 884.4,59.24 884.95,58.24 885.51,57.24 886.06,56.24 886.62,55.24 887.18,54.24 887.73,53.24 888.29,52.24 888.85,51.24 889.4,50.24 889.96,49.24 890.52,48.24 891.08,47.24 891.64,46.23 892.2,45.23 892.76,44.23 893.32,43.23 893.88,42.23 894.44,41.23 895,40.23 895.56,39.23 896.12,38.23 896.68,37.23 897.24,36.23 897.8,35.23 898.37,34.23 898.93,33.23 899.49,32.23 900.05,31.23 900.61,30.23 901.18,29.23 901.74,28.23 902.3,27.23"/><polyline fill="none" stroke="#fff" stroke-opacity="0.34" stroke-width="1.39" stroke-dasharray="1.39 2.29" points="902.3,27.23 903.72,27.78 905.14,28.33 906.57,28.88 907.99,29.44 909.41,29.99 910.83,30.54 912.26,31.09 913.68,31.64 915.1,32.19 916.52,32.74 917.94,33.29 919.36,33.85 920.78,34.4 922.21,34.95 923.63,35.5 925.05,36.05 926.47,36.6 927.89,37.15 929.31,37.71 930.73,38.26 932.15,38.81 933.57,39.36 934.99,39.91 936.41,40.46 937.82,41.01 939.24,41.57 940.66,42.12 942.08,42.67 943.5,43.22 944.91,43.77 946.33,44.32 947.74,44.87 949.16,45.42 950.58,45.98 951.99,46.53 953.41,47.08 954.82,47.63 956.23,48.18 957.65,48.73"/><polyline fill="none" stroke="#8a8a8a" stroke-width="1.4" points="957.65,48.73 959.69,49.53 961.73,50.33 963.77,51.13 965.81,51.92 967.85,52.72 969.89,53.52 971.93,54.32 973.96,55.11 976,55.91 978.03,56.71 980.06,57.51 982.09,58.3 984.12,59.1 986.15,59.9 988.17,60.7 990.19,61.5 992.22,62.29 994.24,63.09 996.26,63.89 998.27,64.69 1000.29,65.48 1002.3,66.28 1004.31,67.08 1006.32,67.88 1008.33,68.67 1010.34,69.47 1012.34,70.27 1014.35,71.07 1016.35,71.86"/><text x="299.33" y="330.2" font-size="10.6" fill="#8c8c8c" textLength="27.47" lengthAdjust="spacingAndGlyphs">+180</text><circle cx="330.23" cy="323.4" r="0.85" fill="none" stroke="#8c8c8c" stroke-width="0.65"/><text x="397.07" y="330.2" font-size="10.6" fill="#8c8c8c" textLength="27.47" lengthAdjust="spacingAndGlyphs">+150</text><circle cx="427.97" cy="323.4" r="0.85" fill="none" stroke="#8c8c8c" stroke-width="0.65"/><text x="494.81" y="330.2" font-size="10.6" fill="#8c8c8c" textLength="27.47" lengthAdjust="spacingAndGlyphs">+120</text><circle cx="525.71" cy="323.4" r="0.85" fill="none" stroke="#8c8c8c" stroke-width="0.65"/><text x="595.73" y="330.2" font-size="10.6" fill="#8c8c8c" textLength="21.1" lengthAdjust="spacingAndGlyphs">+90</text><circle cx="620.27" cy="323.4" r="0.85" fill="none" stroke="#8c8c8c" stroke-width="0.65"/><text x="693.47" y="330.2" font-size="10.6" fill="#8c8c8c" textLength="21.1" lengthAdjust="spacingAndGlyphs">+60</text><circle cx="718.01" cy="323.4" r="0.85" fill="none" stroke="#8c8c8c" stroke-width="0.65"/><text x="791.21" y="330.2" font-size="10.6" fill="#8c8c8c" textLength="21.1" lengthAdjust="spacingAndGlyphs">+30</text><circle cx="815.75" cy="323.4" r="0.85" fill="none" stroke="#8c8c8c" stroke-width="0.65"/><text x="892.13" y="330.2" font-size="10.6" fill="#8c8c8c" textLength="14.74" lengthAdjust="spacingAndGlyphs">+0</text><circle cx="910.31" cy="323.4" r="0.85" fill="none" stroke="#8c8c8c" stroke-width="0.65"/><text x="983.51" y="330.2" font-size="10.6" fill="#8c8c8c" textLength="27.47" lengthAdjust="spacingAndGlyphs">+330</text><circle cx="1014.41" cy="323.4" r="0.85" fill="none" stroke="#8c8c8c" stroke-width="0.65"/><text x="1081.25" y="330.2" font-size="10.6" fill="#8c8c8c" textLength="27.47" lengthAdjust="spacingAndGlyphs">+300</text><circle cx="1112.15" cy="323.4" r="0.85" fill="none" stroke="#8c8c8c" stroke-width="0.65"/><text x="1178.99" y="330.2" font-size="10.6" fill="#8c8c8c" textLength="27.47" lengthAdjust="spacingAndGlyphs">+270</text><circle cx="1209.89" cy="323.4" r="0.85" fill="none" stroke="#8c8c8c" stroke-width="0.65"/><text x="1276.73" y="330.2" font-size="10.6" fill="#8c8c8c" textLength="27.47" lengthAdjust="spacingAndGlyphs">+240</text><circle cx="1307.63" cy="323.4" r="0.85" fill="none" stroke="#8c8c8c" stroke-width="0.65"/><text x="1374.47" y="330.2" font-size="10.6" fill="#8c8c8c" textLength="27.47" lengthAdjust="spacingAndGlyphs">+210</text><circle cx="1405.37" cy="323.4" r="0.85" fill="none" stroke="#8c8c8c" stroke-width="0.65"/><text x="1472.21" y="330.2" font-size="10.6" fill="#8c8c8c" textLength="27.47" lengthAdjust="spacingAndGlyphs">+180</text><circle cx="1503.11" cy="323.4" r="0.85" fill="none" stroke="#8c8c8c" stroke-width="0.65"/><text x="889.55" y="25" font-size="10.6" fill="#8c8c8c" textLength="21.1" lengthAdjust="spacingAndGlyphs">+90</text><circle cx="914.09" cy="18.2" r="0.85" fill="none" stroke="#8c8c8c" stroke-width="0.65"/><text x="889.55" y="122.8" font-size="10.6" fill="#8c8c8c" textLength="21.1" lengthAdjust="spacingAndGlyphs">+60</text><circle cx="914.09" cy="116" r="0.85" fill="none" stroke="#8c8c8c" stroke-width="0.65"/><text x="889.55" y="220.6" font-size="10.6" fill="#8c8c8c" textLength="21.1" lengthAdjust="spacingAndGlyphs">+30</text><circle cx="914.09" cy="213.8" r="0.85" fill="none" stroke="#8c8c8c" stroke-width="0.65"/><text x="889.55" y="428" font-size="10.6" fill="#8c8c8c" textLength="21.1" lengthAdjust="spacingAndGlyphs">−30</text><circle cx="914.09" cy="421.2" r="0.85" fill="none" stroke="#8c8c8c" stroke-width="0.65"/><text x="889.55" y="526" font-size="10.6" fill="#8c8c8c" textLength="21.1" lengthAdjust="spacingAndGlyphs">−60</text><circle cx="914.09" cy="519.2" r="0.85" fill="none" stroke="#8c8c8c" stroke-width="0.65"/><text x="889.55" y="624.3" font-size="10.6" fill="#8c8c8c" textLength="21.1" lengthAdjust="spacingAndGlyphs">−90</text><circle cx="914.09" cy="617.5" r="0.85" fill="none" stroke="#8c8c8c" stroke-width="0.65"/><polyline fill="none" stroke="#2ab07f" stroke-width="1.39" stroke-dasharray="1.39 2.29" points="590.42,261.76 590.55,261.23 590.69,260.71 590.83,260.18 590.98,259.66 591.12,259.13 591.27,258.61 591.42,258.08 591.58,257.56 591.73,257.03 591.89,256.51 592.05,255.98 592.22,255.46 592.38,254.93 592.55,254.41 592.72,253.88 592.9,253.36 593.07,252.83 593.25,252.31 593.43,251.79 593.61,251.26 593.8,250.74 593.99,250.21 594.18,249.69 594.37,249.16 594.56,248.64 594.76,248.12 594.96,247.59 595.16,247.07 595.37,246.54 595.57,246.02 595.78,245.5 595.99,244.97 596.21,244.45 596.42,243.92 596.64,243.4 596.86,242.88 597.09,242.35 597.31,241.83 597.54,241.31 597.77,240.78 598,240.26 598.24,239.74 598.48,239.21 598.72,238.69 598.96,238.17 599.2,237.65 599.45,237.12 599.7,236.6 599.95,236.08 600.2,235.55 600.46,235.03 600.72,234.51 600.98,233.99 601.24,233.46 601.51,232.94 601.77,232.42 602.04,231.9 602.32,231.38 602.59,230.85 602.87,230.33 603.15,229.81 603.43,229.29 603.71,228.77 604,228.24 604.29,227.72 604.58,227.2 604.87,226.68 605.16,226.16 605.46,225.64 605.76,225.12 606.06,224.59 606.37,224.07 606.67,223.55 606.98,223.03 607.29,222.51 607.6,221.99 607.92,221.47 608.24,220.95 608.56,220.43 608.88,219.91 609.2,219.39 609.53,218.87 609.85,218.35 610.19,217.83 610.52,217.31 610.85,216.79 611.19,216.27 611.53,215.75 611.87,215.23 612.21,214.71 612.56,214.19 612.91,213.67 613.26,213.15 613.61,212.63 613.96,212.11 614.32,211.59 614.68,211.08 615.04,210.56 615.4,210.04 615.76,209.52 616.13,209 616.5,208.48 616.87,207.97 617.24,207.45 617.62,206.93 618,206.41 618.37,205.89 618.76,205.38 619.14,204.86 619.52,204.34 619.91,203.82 620.3,203.31 620.69,202.79 621.09,202.27 621.48,201.76 621.88,201.24 622.28,200.72 622.68,200.21 623.08,199.69 623.49,199.17 623.9,198.66 624.31,198.14 624.72,197.63 625.13,197.11 625.55,196.6 625.96,196.08 626.38,195.57 626.8,195.05 627.23,194.54 627.65,194.02 628.08,193.51 628.51,192.99 628.94,192.48 629.37,191.96 629.81,191.45 630.24,190.94 630.68,190.42 631.12,189.91 631.56,189.4 632.01,188.88 632.45,188.37 632.9,187.86 633.35,187.34 633.8,186.83 634.25,186.32 634.71,185.81 635.17,185.29 635.62,184.78 636.08,184.27 636.55,183.76 637.01,183.25 637.48,182.74 637.94,182.23 638.41,181.71 638.88,181.2 639.36,180.69 639.83,180.18 640.31,179.67 640.78,179.16 641.26,178.65 641.74,178.14 642.23,177.63 642.71,177.13 643.2,176.62 643.68,176.11 644.17,175.6 644.67,175.09 645.16,174.58 645.65,174.08 646.15,173.57 646.64,173.06 647.14,172.55 647.64,172.05 648.15,171.54 648.65,171.03 649.16,170.53 649.66,170.02 650.17,169.51 650.68,169.01 651.19,168.5 651.7,168 652.22,167.49 652.73,166.99 653.25,166.48 653.77,165.98 654.29,165.48 654.81,164.97 655.33,164.47 655.86,163.97 656.38,163.46 656.91,162.96 657.44,162.46 657.97,161.96 658.5,161.46 659.03,160.95 659.57,160.45 660.1,159.95 660.64,159.45 661.18,158.95 661.71,158.45 662.25,157.95 662.8,157.45 663.34,156.95 663.88,156.46 664.43,155.96 664.97,155.46 665.52,154.96 666.07,154.46 666.62,153.97 667.17,153.47 667.72,152.97 668.28,152.48 668.83,151.98 669.39,151.49 669.94,150.99 670.5,150.5 671.06,150 671.62,149.51 672.18,149.02 672.74,148.52 673.3,148.03 673.86,147.54 674.43,147.05 674.99,146.56 675.56,146.07 676.13,145.58 676.69,145.09 677.26,144.6 677.83,144.11 678.4,143.62 678.97,143.13 679.55,142.64 680.12,142.15 680.69,141.67 681.27,141.18 681.84,140.69 682.42,140.21 682.99,139.72 683.57,139.24 684.15,138.75 684.72,138.27 685.3,137.79 685.88,137.31 686.46,136.82 687.04,136.34 687.62,135.86 688.2,135.38 688.79,134.9 689.37,134.42 689.95,133.94 690.53,133.46 691.12,132.99 691.7,132.51 692.28,132.03 692.87,131.56 693.45,131.08 694.04,130.61 694.62,130.13 695.21,129.66 695.79,129.19 696.38,128.72 696.96,128.24 697.55,127.77 698.13,127.3 698.72,126.84 699.3,126.37 699.89,125.9 700.47,125.43 701.06,124.97 701.64,124.5 702.23,124.04 702.81,123.57 703.39,123.11 703.98,122.65 704.56,122.18 705.14,121.72 705.73,121.26 706.31,120.8 706.89,120.35 707.47,119.89 708.05,119.43 708.63,118.98 709.21,118.52 709.79,118.07 710.37,117.62 710.95,117.16 711.53,116.71 712.1,116.26 712.68,115.81 713.25,115.37 713.82,114.92 714.4,114.47 714.97,114.03 715.54,113.59 716.11,113.14 716.67,112.7 717.24,112.26 717.81,111.82 718.37,111.38 718.93,110.95 719.49,110.51 720.05,110.08 720.61,109.64 721.17,109.21 721.72,108.78 722.27,108.35 722.82,107.93 723.37,107.5 723.92,107.07 724.47,106.65 725.01,106.23 725.55,105.81 726.09,105.39 726.63,104.97 727.16,104.55 727.69,104.14 728.22,103.72 728.75,103.31 729.27,102.9 729.79,102.49 730.31,102.09 730.83,101.68 731.34,101.28 731.85,100.87 732.36,100.47 732.86,100.08 733.36,99.68 733.86,99.29 734.35,98.89 734.84,98.5 735.33,98.11 735.81,97.73 736.29,97.34 736.77,96.96 737.24,96.58 737.71,96.2 738.17,95.82 738.63,95.45 739.08,95.08 739.53,94.71 739.98,94.34 740.41,93.97 740.85,93.61 741.28,93.25 741.7,92.89 742.12,92.54 742.54,92.19 742.95,91.83 743.35,91.49 743.75,91.14 744.14,90.8 744.52,90.46 744.9,90.12 745.27,89.79 745.64,89.46 746,89.13 746.35,88.81 746.7,88.48 747.04,88.17 747.37,87.85 747.69,87.54 748.01,87.23 748.32,86.92 748.62,86.62 748.91,86.32 749.2,86.02 749.47,85.73 749.74,85.44 750,85.16 750.25,84.87 750.49,84.6 750.72,84.32 750.95,84.05 751.16,83.79 751.36,83.52 751.55,83.26 751.74,83.01 751.91,82.76 752.07,82.51 752.22,82.27 752.36,82.03 752.49,81.8 752.61,81.57 752.71,81.34 752.81,81.12 752.89,80.91 752.96,80.7 753.02,80.49 753.06,80.29 753.09,80.09 753.11,79.9 753.12,79.71 753.11,79.53 753.09,79.35 753.05,79.17 753,79.01 752.94,78.84 752.86,78.69 752.77,78.53 752.66,78.39 752.54,78.25 752.4,78.11 752.25,77.98 752.08,77.85 751.9,77.73 751.7,77.62 751.48,77.51 751.25,77.4 751,77.31 750.74,77.21 750.46,77.13 750.16,77.04 749.84,76.97 749.51,76.9 749.16,76.84 748.79,76.78 748.6,76.75"/><polyline fill="none" stroke="#2ab07f" stroke-width="1.39" stroke-dasharray="1.39 2.29" points="1056,76.74 1055.31,76.69 1054.63,76.65 1053.98,76.62 1053.34,76.58 1052.72,76.56 1052.12,76.54 1051.53,76.53 1050.97,76.52 1050.42,76.52 1049.88,76.52 1049.37,76.53 1048.87,76.55 1048.39,76.57 1047.93,76.6 1047.48,76.64 1047.05,76.68 1046.64,76.72 1046.24,76.77 1045.86,76.83 1045.5,76.89 1045.15,76.96 1044.82,77.04 1044.5,77.12 1044.2,77.2 1043.92,77.3 1043.74,77.36"/><polyline fill="none" stroke="#2ab07f" stroke-width="1.6" stroke-linecap="round" points="1043.74,77.36 1043.61,77.41 1043.48,77.46 1043.35,77.52 1043.23,77.57 1043.12,77.63 1043.01,77.68 1042.9,77.74 1042.79,77.8 1042.69,77.86 1042.6,77.92 1042.5,77.99 1042.41,78.05 1042.33,78.12 1042.24,78.19 1042.16,78.26 1042.09,78.33 1042.02,78.4 1041.95,78.47 1041.88,78.55 1041.82,78.62 1041.76,78.7 1041.71,78.78 1041.66,78.86 1041.61,78.94 1041.56,79.02 1041.52,79.1 1041.48,79.19 1041.45,79.27 1041.42,79.36 1041.39,79.45 1041.36,79.54 1041.34,79.63 1041.32,79.72 1041.31,79.82 1041.29,79.91 1041.28,80.01 1041.28,80.1 1041.27,80.2 1041.27,80.3 1041.27,80.4 1041.28,80.5 1041.29,80.61 1041.3,80.71 1041.31,80.82 1041.33,80.92 1041.35,81.03 1041.37,81.14 1041.4,81.25 1041.43,81.36 1041.46,81.47 1041.49,81.59 1041.53,81.7 1041.56,81.82 1041.61,81.93 1041.65,82.05 1041.7,82.17 1041.75,82.29 1041.8,82.41 1041.85,82.53 1041.91,82.65 1041.97,82.78 1042.03,82.9 1042.09,83.03 1042.16,83.16 1042.23,83.28 1042.3,83.41 1042.37,83.54 1042.45,83.67 1042.53,83.81 1042.61,83.94 1042.69,84.07 1042.78,84.21 1042.86,84.34 1042.95,84.48 1043.05,84.62 1043.14,84.76 1043.24,84.9 1043.33,85.04 1043.43,85.18 1043.54,85.32 1043.64,85.46 1043.75,85.61 1043.85,85.75 1043.96,85.9 1044.08,86.05 1044.19,86.19 1044.31,86.34 1044.43,86.49 1044.54,86.64 1044.67,86.79 1044.79,86.94 1044.92,87.1 1045,87.2"/><rect x="1043.7" y="85.9" width="2.6" height="2.6" fill="#f0613f"/><polyline fill="none" stroke="#2ab07f" stroke-width="1.39" stroke-dasharray="1.39 2.29" points="593.54,261.66 594.06,261.18 594.58,260.7 595.09,260.22 595.62,259.74 596.14,259.26 596.66,258.78 597.19,258.3 597.72,257.82 598.25,257.34 598.78,256.87 599.32,256.39 599.86,255.91 600.39,255.43 600.93,254.95 601.48,254.47 602.02,254 602.57,253.52 603.12,253.04 603.67,252.56 604.22,252.09 604.77,251.61 605.33,251.13 605.88,250.65 606.44,250.18 607,249.7 607.57,249.22 608.13,248.75 608.7,248.27 609.27,247.8 609.84,247.32 610.41,246.84 610.98,246.37 611.56,245.89 612.14,245.42 612.71,244.94 613.3,244.47 613.88,243.99 614.46,243.52 615.05,243.04 615.64,242.57 616.23,242.1 616.82,241.62 617.41,241.15 618.01,240.67 618.6,240.2 619.2,239.73 619.8,239.25 620.4,238.78 621,238.31 621.61,237.84 622.22,237.36 622.82,236.89 623.43,236.42 624.05,235.95 624.66,235.48 625.27,235 625.89,234.53 626.51,234.06 627.13,233.59 627.75,233.12 628.37,232.65 629,232.18 629.62,231.71 630.25,231.24 630.88,230.77 631.51,230.3 632.14,229.83 632.78,229.36 633.41,228.89 634.05,228.42 634.69,227.96 635.33,227.49 635.97,227.02 636.61,226.55 637.26,226.08 637.9,225.62 638.55,225.15 639.2,224.68 639.85,224.22 640.5,223.75 641.15,223.28 641.81,222.82 642.46,222.35 643.12,221.89 643.78,221.42 644.44,220.96 645.1,220.49 645.77,220.03 646.43,219.57 647.1,219.1 647.76,218.64 648.43,218.17 649.1,217.71 649.77,217.25 650.45,216.79 651.12,216.32 651.79,215.86 652.47,215.4 653.15,214.94 653.83,214.48 654.51,214.02 655.19,213.56 655.87,213.1 656.56,212.64 657.24,212.18 657.93,211.72 658.62,211.26 659.31,210.8 660,210.34 660.69,209.88 661.38,209.43 662.07,208.97 662.77,208.51 663.46,208.05 664.16,207.6 664.86,207.14 665.56,206.68 666.26,206.23 666.96,205.77 667.66,205.32 668.37,204.86 669.07,204.41 669.78,203.96 670.49,203.5 671.19,203.05 671.9,202.6 672.61,202.14 673.33,201.69 674.04,201.24 674.75,200.79 675.47,200.34 676.18,199.89 676.9,199.44 677.61,198.99 678.33,198.54 679.05,198.09 679.77,197.64 680.49,197.19 681.21,196.74 681.94,196.3 682.66,195.85 683.39,195.4 684.11,194.95 684.84,194.51 685.56,194.06 686.29,193.62 687.02,193.17 687.75,192.73 688.48,192.29 689.21,191.84 689.94,191.4 690.68,190.96 691.41,190.51 692.15,190.07 692.88,189.63 693.62,189.19 694.35,188.75 695.09,188.31 695.83,187.87 696.57,187.43 697.31,186.99 698.05,186.56 698.79,186.12 699.53,185.68 700.27,185.25 701.01,184.81 701.76,184.37 702.5,183.94 703.24,183.5 703.99,183.07 704.74,182.64 705.48,182.2 706.23,181.77 706.98,181.34 707.72,180.91 708.47,180.48 709.22,180.05 709.97,179.62 710.72,179.19 711.47,178.76 712.22,178.33 712.97,177.91 713.72,177.48 714.47,177.05 715.23,176.63 715.98,176.2 716.73,175.78 717.49,175.35 718.24,174.93 718.99,174.51 719.75,174.09 720.5,173.67 721.26,173.24 722.01,172.82 722.77,172.41 723.52,171.99 724.28,171.57 725.04,171.15 725.79,170.73 726.55,170.32 727.31,169.9 728.06,169.49 728.82,169.07 729.58,168.66 730.34,168.25 731.1,167.84 731.85,167.43 732.61,167.02 733.37,166.61 734.13,166.2 734.89,165.79 735.64,165.38 736.4,164.98 737.16,164.57 737.92,164.16 738.68,163.76 739.44,163.36 740.2,162.95 740.95,162.55 741.71,162.15 742.47,161.75 743.23,161.35 743.99,160.95 744.75,160.55 745.5,160.16 746.26,159.76 747.02,159.37 747.78,158.97 748.53,158.58 749.29,158.19 750.05,157.79 750.8,157.4 751.56,157.01 752.32,156.63 753.07,156.24 753.83,155.85 754.58,155.46 755.34,155.08 756.09,154.7 756.85,154.31 757.6,153.93 758.36,153.55 759.11,153.17 759.86,152.79 760.62,152.41 761.37,152.03 762.12,151.66 762.87,151.28 763.62,150.91 764.37,150.54 765.12,150.16 765.87,149.79 766.62,149.42 767.37,149.06 768.12,148.69 768.87,148.32 769.61,147.96 770.36,147.59 771.11,147.23 771.85,146.87 772.6,146.51 773.34,146.15 774.08,145.79 774.83,145.44 775.57,145.08 776.31,144.73 777.05,144.37 777.79,144.02 778.53,143.67 779.27,143.32 780,142.97 780.74,142.63 781.48,142.28 782.21,141.94 782.94,141.59 783.68,141.25 784.41,140.91 785.14,140.58 785.87,140.24 786.6,139.9 787.33,139.57 788.06,139.24 788.79,138.9 789.51,138.57 790.24,138.25 790.96,137.92 791.69,137.59 792.41,137.27 793.13,136.95 793.85,136.63 794.57,136.31 795.29,135.99 796,135.67 796.72,135.36 797.43,135.05 798.15,134.74 798.86,134.43 799.57,134.12 800.28,133.81 800.99,133.51 801.7,133.21 802.41,132.9 803.11,132.6 803.82,132.31 804.52,132.01 805.22,131.72 805.92,131.43 806.62,131.13 807.32,130.85 808.02,130.56 808.71,130.27 809.41,129.99 810.1,129.71 810.79,129.43 811.48,129.15 812.17,128.88 812.86,128.6 813.54,128.33 814.23,128.06 814.91,127.8 815.59,127.53 816.27,127.27 816.95,127 817.63,126.75 818.31,126.49 818.98,126.23 819.66,125.98 820.33,125.73 821,125.48 821.67,125.23 822.33,124.99 823,124.75 823.67,124.51 824.33,124.27 824.99,124.03 825.65,123.8 826.31,123.57 826.97,123.34 827.62,123.11 828.27,122.89 828.93,122.67 829.58,122.45 830.23,122.23 830.87,122.02 831.52,121.8 832.17,121.59 832.81,121.39 833.45,121.18 834.09,120.98 834.73,120.78 835.36,120.58 836,120.39 836.63,120.19 837.26,120 837.9,119.82 838.52,119.63 839.15,119.45 839.78,119.27 840.4,119.09 841.02,118.92 841.64,118.75 842.26,118.58 842.88,118.41 843.5,118.25 844.11,118.09 844.72,117.93 845.34,117.77 845.95,117.62 846.55,117.47 847.16,117.32 847.77,117.18 848.37,117.04 848.97,116.9 849.57,116.76 850.17,116.63 850.77,116.5 851.36,116.37 851.96,116.25 852.55,116.13 853.14,116.01 853.73,115.9 854.32,115.78 854.91,115.67 855.5,115.57 856.08,115.46 856.66,115.36 857.24,115.27 857.82,115.17 858.4,115.08 858.98,114.99 859.56,114.91 860.13,114.82 860.7,114.74 861.27,114.67 861.84,114.59 862.41,114.52 862.98,114.46 863.55,114.39 864.11,114.33 864.68,114.27 865.24,114.22 865.8,114.17 866.36,114.12 866.92,114.07 867.48,114.03 868.04,113.99 868.59,113.96 869.15,113.92 869.7,113.89 870.25,113.87 870.8,113.84 871.35,113.82 871.9,113.81 872.45,113.79 873,113.78 873.54,113.78 874.09,113.77 874.63,113.77 875.17,113.77 875.72,113.78 876.26,113.79 876.8,113.8 877.34,113.81 877.88,113.83 878.41,113.85 878.95,113.88 879.49,113.9 880.02,113.93 880.56,113.97 881.09,114 881.63,114.04 882.16,114.09 882.69,114.13 883.13,114.17"/><polyline fill="none" stroke="#2ab07f" stroke-width="1.6" stroke-linecap="round" points="883.13,114.17 883.4,114.2 883.66,114.23 883.93,114.25 884.19,114.28 884.46,114.31 884.72,114.34 884.99,114.37 885.25,114.4 885.52,114.43 885.78,114.46 886.05,114.5 886.31,114.53 886.57,114.57 886.84,114.6 887.1,114.64 887.36,114.68 887.63,114.71 887.89,114.75 888.15,114.79 888.42,114.83 888.68,114.87 888.94,114.92 889.2,114.96 889.47,115 889.73,115.05 889.99,115.09 890.25,115.14 890.52,115.18 890.78,115.23 891.04,115.28 891.3,115.33 891.56,115.38 891.82,115.43 892.09,115.48 892.35,115.53 892.61,115.58 892.87,115.63 893.13,115.69 893.39,115.74 893.65,115.8 893.91,115.85 894.18,115.91 894.44,115.97 894.7,116.03 894.96,116.08 895.22,116.14 895.48,116.2 895.74,116.27 896,116.33 896.26,116.39 896.52,116.45 896.78,116.52 897.04,116.58 897.3,116.65 897.56,116.71 897.82,116.78 898.08,116.85 898.34,116.92 898.61,116.99 898.87,117.06 899.13,117.13 899.39,117.2 899.65,117.27 899.91,117.34 900.17,117.42 900.43,117.49 900.69,117.56 900.95,117.64 901.21,117.72 901.47,117.79 901.73,117.87 901.99,117.95 902.25,118.03 902.51,118.11 902.77,118.19 903.03,118.27 903.29,118.35 903.55,118.43 903.81,118.51 904.07,118.6 904.33,118.68 904.59,118.77 904.85,118.85 905.11,118.94 905.37,119.03 905.63,119.11 905.89,119.2 906.15,119.29 906.41,119.38 906.67,119.47 906.93,119.56 907.19,119.65 907.45,119.75 907.71,119.84 907.97,119.93 908.23,120.03 908.49,120.12 908.75,120.22 909.01,120.31 909.27,120.41 909.53,120.51 909.79,120.61 910.05,120.7 910.32,120.8 910.58,120.9 910.84,121 911.1,121.1 911.36,121.21 911.62,121.31 911.88,121.41 912.14,121.52 912.4,121.62 912.66,121.72 912.93,121.83 913.1,121.9"/><rect x="911.8" y="120.6" width="2.6" height="2.6" fill="#f0613f"/><polyline fill="none" stroke="#2ab07f" stroke-width="1.39" stroke-dasharray="1.39 2.29" points="592.25,265.24 592.92,264.75 593.59,264.27 594.27,263.78 594.95,263.29 595.63,262.81 596.31,262.32 596.99,261.83 597.68,261.35 598.37,260.86 599.05,260.38 599.75,259.89 600.44,259.41 601.13,258.92 601.83,258.44 602.53,257.95 603.23,257.47 603.93,256.99 604.64,256.51 605.34,256.02 606.05,255.54 606.76,255.06 607.47,254.58 608.18,254.1 608.9,253.62 609.61,253.14 610.33,252.66 611.05,252.18 611.77,251.7 612.5,251.22 613.22,250.74 613.95,250.27 614.68,249.79 615.41,249.31 616.14,248.83 616.87,248.36 617.6,247.88 618.34,247.41 619.08,246.93 619.82,246.46 620.56,245.98 621.3,245.51 622.04,245.04 622.79,244.57 623.54,244.09 624.28,243.62 625.03,243.15 625.79,242.68 626.54,242.21 627.29,241.74 628.05,241.27 628.81,240.8 629.56,240.33 630.32,239.86 631.08,239.4 631.85,238.93 632.61,238.46 633.38,238 634.14,237.53 634.91,237.07 635.68,236.6 636.45,236.14 637.22,235.68 638,235.21 638.77,234.75 639.55,234.29 640.32,233.83 641.1,233.37 641.88,232.91 642.66,232.45 643.44,231.99 644.22,231.53 645.01,231.07 645.79,230.62 646.58,230.16 647.36,229.7 648.15,229.25 648.94,228.79 649.73,228.34 650.52,227.88 651.32,227.43 652.11,226.98 652.9,226.53 653.7,226.08 654.5,225.63 655.29,225.18 656.09,224.73 656.89,224.28 657.69,223.83 658.49,223.38 659.29,222.94 660.1,222.49 660.9,222.04 661.71,221.6 662.51,221.16 663.32,220.71 664.13,220.27 664.93,219.83 665.74,219.39 666.55,218.95 667.36,218.51 668.17,218.07 668.98,217.63 669.8,217.19 670.61,216.76 671.42,216.32 672.24,215.89 673.05,215.45 673.87,215.02 674.68,214.59 675.5,214.15 676.32,213.72 677.14,213.29 677.96,212.86 678.78,212.43 679.6,212.01 680.42,211.58 681.24,211.15 682.06,210.73 682.88,210.3 683.7,209.88 684.52,209.46 685.35,209.03 686.17,208.61 686.99,208.19 687.82,207.77 688.64,207.36 689.47,206.94 690.29,206.52 691.12,206.11 691.95,205.69 692.77,205.28 693.6,204.86 694.43,204.45 695.25,204.04 696.08,203.63 696.91,203.22 697.73,202.81 698.56,202.41 699.39,202 700.22,201.6 701.05,201.19 701.88,200.79 702.7,200.39 703.53,199.99 704.36,199.59 705.19,199.19 706.02,198.79 706.85,198.39 707.68,198 708.51,197.6 709.34,197.21 710.16,196.82 710.99,196.42 711.82,196.03 712.65,195.65 713.48,195.26 714.31,194.87 715.14,194.48 715.97,194.1 716.79,193.72 717.62,193.33 718.45,192.95 719.28,192.57 720.1,192.19 720.93,191.82 721.76,191.44 722.59,191.07 723.41,190.69 724.24,190.32 725.06,189.95 725.89,189.58 726.72,189.21 727.54,188.84 728.36,188.48 729.19,188.11 730.01,187.75 730.84,187.39 731.66,187.03 732.48,186.67 733.3,186.31 734.13,185.95 734.95,185.6 735.77,185.24 736.59,184.89 737.41,184.54 738.23,184.19 739.05,183.84 739.86,183.49 740.68,183.15 741.5,182.8 742.31,182.46 743.13,182.12 743.95,181.78 744.76,181.44 745.57,181.1 746.39,180.77 747.2,180.43 748.01,180.1 748.82,179.77 749.63,179.44 750.44,179.12 751.25,178.79 752.06,178.47 752.87,178.14 753.67,177.82 754.48,177.5 755.28,177.18 756.09,176.87 756.89,176.55 757.69,176.24 758.49,175.93 759.3,175.62 760.09,175.31 760.89,175.01 761.69,174.7 762.49,174.4 763.28,174.1 764.08,173.8 764.87,173.5 765.67,173.21 766.46,172.91 767.25,172.62 768.04,172.33 768.83,172.04 769.62,171.75 770.41,171.47 771.19,171.19 771.98,170.91 772.76,170.63 773.55,170.35 774.33,170.07 775.11,169.8 775.89,169.53 776.67,169.26 777.44,168.99 778.22,168.73 779,168.46 779.77,168.2 780.54,167.94 781.31,167.68 782.09,167.43 782.85,167.17 783.62,166.92 784.39,166.67 785.16,166.42 785.92,166.18 786.68,165.94 787.45,165.69 788.21,165.46 788.97,165.22 789.73,164.98 790.48,164.75 791.24,164.52 791.99,164.29 792.75,164.07 793.5,163.84 794.25,163.62 795,163.4 795.75,163.18 796.5,162.97 797.24,162.75 797.99,162.54 798.73,162.33 799.47,162.13 800.21,161.92 800.95,161.72 801.69,161.52 802.43,161.33 803.16,161.13 803.9,160.94 804.63,160.75 805.36,160.56 806.09,160.38 806.82,160.19 807.55,160.01 808.28,159.83 809,159.66 809.72,159.49 810.45,159.31 811.17,159.15 811.89,158.98 812.6,158.82 813.32,158.66 814.04,158.5 814.75,158.34 815.46,158.19 816.18,158.04 816.89,157.89 817.6,157.74 818.3,157.6 819.01,157.46 819.71,157.32 820.42,157.18 821.12,157.05 821.82,156.92 822.52,156.79 823.22,156.67 823.92,156.54 824.61,156.42 825.31,156.3 826,156.19 826.69,156.08 827.39,155.97 828.08,155.86 828.76,155.75 829.45,155.65 830.14,155.55 830.82,155.46 831.5,155.36 832.19,155.27 832.87,155.18 833.55,155.1 834.23,155.01 834.9,154.93 835.58,154.86 836.26,154.78 836.93,154.71 837.6,154.64 838.27,154.57 838.94,154.51 839.61,154.45 840.28,154.39 840.95,154.33 841.61,154.28 842.28,154.23 842.94,154.18 843.61,154.13 844.27,154.09 844.93,154.05 845.59,154.02 846.25,153.98 846.9,153.95 847.56,153.92 848.22,153.9 848.87,153.87 849.52,153.85 850.18,153.84 850.83,153.82 851.48,153.81 852.13,153.8 852.78,153.8 853.42,153.79 854.07,153.79 854.72,153.79 855.36,153.8 856.01,153.81 856.65,153.82 857.29,153.83 857.93,153.85 858.57,153.87 859.21,153.89 859.85,153.91 860.49,153.94 861.13,153.97 861.77,154 862.4,154.04 863.04,154.07 863.67,154.12 864.31,154.16 864.94,154.21 865.57,154.26 866.21,154.31 866.84,154.36 867.47,154.42 868.1,154.48 868.73,154.54 869.36,154.61 869.98,154.68 870.61,154.75 871.24,154.82 871.87,154.9 872.49,154.98 873.12,155.06 873.74,155.15 874.37,155.23 874.99,155.32 875.61,155.42 876.24,155.51 876.86,155.61 877.48,155.71 878.1,155.81 878.73,155.92 879.35,156.03 879.97,156.14 880.59,156.25 881.21,156.37 881.83,156.49 882.45,156.61 883.07,156.74 883.68,156.86 884.3,156.99 884.92,157.12 885.54,157.26 886.16,157.4 886.77,157.54 887.39,157.68 888.01,157.82 888.62,157.97 889.24,158.12 889.86,158.27 890.47,158.43 891.09,158.59 891.7,158.75 892.32,158.91 892.93,159.07 893.55,159.24 894.16,159.41 894.78,159.58 895.39,159.76 896.01,159.93 896.62,160.11 897.24,160.3 897.85,160.48 898.47,160.67 899.08,160.86 899.69,161.05 900.31,161.24 900.92,161.44 901.54,161.64 902.15,161.84 902.76,162.04 903.38,162.24 903.99,162.45 904.61,162.66 905.22,162.87 905.84,163.09 906.45,163.3 907.06,163.52 907.68,163.74 908.29,163.97 908.91,164.19 909.52,164.42 910.14,164.65 910.75,164.88 911.37,165.12 911.98,165.35 912.6,165.59 913.21,165.83 913.83,166.07 914.44,166.32 915.06,166.56 915.67,166.81 916.29,167.06 916.91,167.32 917.52,167.57 918.14,167.83 918.76,168.09 919.37,168.35 919.99,168.61 920.61,168.88 921.22,169.14 921.84,169.41 922.46,169.68 923.08,169.95 923.69,170.23 924.31,170.51 924.93,170.78 925.55,171.06 926.17,171.35 926.78,171.63 927.4,171.92 928.02,172.2 928.64,172.49 929.26,172.78 929.88,173.08 930.5,173.37 931.12,173.67 931.74,173.97 932.36,174.27 932.98,174.57 933.6,174.87 934.22,175.18 934.85,175.49 935.47,175.79 936.09,176.1 936.71,176.42 937.33,176.73 937.95,177.05 938.58,177.36 939.2,177.68 939.82,178 940.45,178.32 941.07,178.65 941.48,178.86"/><polyline fill="none" stroke="#2ab07f" stroke-width="1.6" stroke-linecap="round" points="941.48,178.86 941.8,179.03 942.11,179.19 942.42,179.35 942.73,179.52 943.04,179.68 943.36,179.85 943.67,180.01 943.98,180.18 944.29,180.34 944.6,180.51 944.92,180.68 945.23,180.85 945.54,181.01 945.85,181.18 946.17,181.35 946.48,181.52 946.79,181.69 947,181.8"/><rect x="945.7" y="180.5" width="2.6" height="2.6" fill="#f0613f"/><ellipse cx="586.8" cy="267.3" rx="31.7" ry="17.3" transform="rotate(-38.7 586.8 267.3)" fill="none" stroke="#2ab07f" stroke-width="2.1"/><g stroke="#ff0000" stroke-width="2.6" transform="translate(588.3,268.9) rotate(-12)"><line x1="-4" y1="0" x2="4" y2="0"/><line x1="0" y1="-3.9" x2="0" y2="3.9"/></g><text x="586.3" y="271.1" font-size="11.66" fill="#ffffff" text-anchor="middle" textLength="19.55" lengthAdjust="spacingAndGlyphs">ORI</text><text x="315.7" y="29.8" style="font-family:&quot;Liberation Mono&quot;,monospace" font-size="13.95" transform="translate(0 29.8) scale(1 1.11) translate(0 -29.8)" textLength="50.17" lengthAdjust="spacingAndGlyphs" fill="#fff" stroke="#fff" stroke-width="0.12" xml:space="preserve">UK002L</text><text x="315.7" y="42.8" style="font-family:&quot;Liberation Mono&quot;,monospace" font-size="13.95" transform="translate(0 42.8) scale(1 1.11) translate(0 -42.8)" textLength="317.77" lengthAdjust="spacingAndGlyphs" fill="#fff" stroke="#fff" stroke-width="0.12" xml:space="preserve">Beg: 20251028 00:46:30 (sol = 214.50°)</text><text x="315.7" y="55.8" style="font-family:&quot;Liberation Mono&quot;,monospace" font-size="13.95" transform="translate(0 55.8) scale(1 1.11) translate(0 -55.8)" textLength="317.77" lengthAdjust="spacingAndGlyphs" fill="#fff" stroke="#fff" stroke-width="0.12" xml:space="preserve">End: 20251028 05:35:11 (sol = 214.70°)</text><text x="315.7" y="68.8" style="font-family:&quot;Liberation Mono&quot;,monospace" font-size="13.95" transform="translate(0 68.8) scale(1 1.11) translate(0 -68.8)" textLength="317.77" lengthAdjust="spacingAndGlyphs" fill="#fff" stroke="#fff" stroke-width="0.12" xml:space="preserve">--------------------------------------</text><text x="315.7" y="81.8" style="font-family:&quot;Liberation Mono&quot;,monospace" font-size="13.95" transform="translate(0 81.8) scale(1 1.11) translate(0 -81.8)" textLength="50.17" lengthAdjust="spacingAndGlyphs" fill="#fff" stroke="#fff" stroke-width="0.12" xml:space="preserve">ORI: 3</text><text x="315.7" y="94.8" style="font-family:&quot;Liberation Mono&quot;,monospace" font-size="13.95" transform="translate(0 94.8) scale(1 1.11) translate(0 -94.8)" textLength="50.17" lengthAdjust="spacingAndGlyphs" fill="#fff" stroke="#fff" stroke-width="0.12" xml:space="preserve">...: 1</text><text x="0" y="0" font-size="30.2" fill="#585858" transform="translate(148.95 696.1) rotate(-90) scale(0.8559 1)">APR</text><text x="0" y="0" font-size="30.2" fill="#585858" transform="translate(294.75 701.09) rotate(-90) scale(0.8619 1)">MAY</text><text x="0" y="0" font-size="30.2" fill="#585858" transform="translate(435.25 690.44) rotate(-90) scale(0.8318 1)">JUN</text><text x="0" y="0" font-size="30.2" fill="#585858" transform="translate(576.45 682.51) rotate(-90) scale(0.7601 1)">JUL</text><text x="0" y="0" font-size="30.2" fill="#585858" transform="translate(724.25 698) rotate(-90) scale(0.8396 1)">AUG</text><text x="0" y="0" font-size="30.2" fill="#585858" transform="translate(871.65 693.77) rotate(-90) scale(0.8196 1)">SEP</text><text x="0" y="0" font-size="30.2" fill="#585858" transform="translate(1017.45 700.54) rotate(-90) scale(0.9022 1)">OCT</text><text x="0" y="0" font-size="30.2" fill="#585858" transform="translate(1170.35 704.38) rotate(-90) scale(0.8992 1)">NOV</text><text x="0" y="0" font-size="30.2" fill="#585858" transform="translate(1319.45 700.94) rotate(-90) scale(0.8830 1)">DEC</text><text x="0" y="0" font-size="30.2" fill="#585858" transform="translate(1468.75 688.55) rotate(-90) scale(0.8408 1)">JAN</text><text x="0" y="0" font-size="30.2" fill="#585858" transform="translate(1628.45 695.73) rotate(-90) scale(0.8415 1)">FEB</text><text x="0" y="0" font-size="30.2" fill="#585858" transform="translate(1765.95 704.86) rotate(-90) scale(0.8904 1)">MAR</text><line x1="1073" y1="642" x2="1073" y2="842.3" stroke="#ff0000" stroke-width="2" stroke-dasharray="5.4 2"/><g stroke-width="4"><line x1="106.2" y1="834" x2="130" y2="834" stroke="#bddf26"/><line x1="165" y1="834" x2="344.9" y2="834" stroke="#bddf26"/><line x1="366.1" y1="834" x2="624.8" y2="834" stroke="#bddf26"/><line x1="636" y1="834" x2="786.9" y2="834" stroke="#bddf26"/><line x1="807" y1="834" x2="900" y2="834" stroke="#bddf26"/><line x1="920" y1="834" x2="972.9" y2="834" stroke="#bddf26"/><line x1="984.1" y1="834" x2="1065.9" y2="834" stroke="#bddf26"/><line x1="1082" y1="834" x2="1203.9" y2="834" stroke="#bddf26"/><line x1="1243.9" y1="834" x2="1325.8" y2="834" stroke="#bddf26"/><line x1="1336.9" y1="834" x2="1355.9" y2="834" stroke="#bddf26"/><line x1="1381.1" y1="834" x2="1443.8" y2="834" stroke="#bddf26"/><line x1="1459.2" y1="834" x2="1511.8" y2="834" stroke="#bddf26"/><line x1="1523.2" y1="834" x2="1547" y2="834" stroke="#bddf26"/><line x1="1723.9" y1="834" x2="1748" y2="834" stroke="#bddf26"/><line x1="1757.8" y1="834" x2="1782" y2="834" stroke="#bddf26"/><line x1="165" y1="818" x2="189" y2="818" stroke="#81d34d"/><line x1="224" y1="818" x2="287" y2="818" stroke="#81d34d"/><line x1="312.1" y1="818" x2="341" y2="818" stroke="#81d34d"/><line x1="366.1" y1="818" x2="493.1" y2="818" stroke="#81d34d"/><line x1="508.1" y1="818" x2="653.8" y2="818" stroke="#81d34d"/><line x1="704.1" y1="818" x2="738" y2="818" stroke="#81d34d"/><line x1="773.1" y1="818" x2="846" y2="818" stroke="#81d34d"/><line x1="870.9" y1="818" x2="987.9" y2="818" stroke="#81d34d"/><line x1="1003" y1="818" x2="1017" y2="818" stroke="#81d34d"/><line x1="1061.9" y1="818" x2="1213" y2="818" stroke="#81d34d"/><line x1="1243.9" y1="818" x2="1266.9" y2="818" stroke="#81d34d"/><line x1="1293" y1="818" x2="1315.9" y2="818" stroke="#81d34d"/><line x1="1342" y1="818" x2="1365" y2="818" stroke="#81d34d"/><line x1="1386.1" y1="818" x2="1429" y2="818" stroke="#81d34d"/><line x1="1459.2" y1="818" x2="1482.9" y2="818" stroke="#81d34d"/><line x1="1547.9" y1="818" x2="1571.1" y2="818" stroke="#81d34d"/><line x1="165" y1="802" x2="189" y2="802" stroke="#4ec36b"/><line x1="258.2" y1="802" x2="488" y2="802" stroke="#4ec36b"/><line x1="508.1" y1="802" x2="614.9" y2="802" stroke="#4ec36b"/><line x1="626.1" y1="802" x2="717.8" y2="802" stroke="#4ec36b"/><line x1="729" y1="802" x2="826" y2="802" stroke="#4ec36b"/><line x1="949.1" y1="802" x2="1149.8" y2="802" stroke="#4ec36b"/><line x1="1159.9" y1="802" x2="1247.8" y2="802" stroke="#4ec36b"/><line x1="1257.9" y1="802" x2="1443.8" y2="802" stroke="#4ec36b"/><line x1="1459.2" y1="802" x2="1482.9" y2="802" stroke="#4ec36b"/><line x1="1553.1" y1="802" x2="1576" y2="802" stroke="#4ec36b"/><line x1="194" y1="785" x2="218" y2="785" stroke="#2ab07f"/><line x1="322" y1="785" x2="507" y2="785" stroke="#2ab07f"/><line x1="518.1" y1="785" x2="541.8" y2="785" stroke="#2ab07f"/><line x1="557" y1="785" x2="683.9" y2="785" stroke="#2ab07f"/><line x1="807" y1="785" x2="831" y2="785" stroke="#2ab07f"/><line x1="953.9" y1="785" x2="972.9" y2="785" stroke="#2ab07f"/><line x1="988.9" y1="785" x2="1124.9" y2="785" stroke="#2ab07f"/><line x1="1155.1" y1="785" x2="1217.9" y2="785" stroke="#2ab07f"/><line x1="1243.9" y1="785" x2="1266.9" y2="785" stroke="#2ab07f"/><line x1="1317" y1="785" x2="1341" y2="785" stroke="#2ab07f"/><line x1="1396.1" y1="785" x2="1419" y2="785" stroke="#2ab07f"/><line x1="1464.1" y1="785" x2="1650.1" y2="785" stroke="#2ab07f"/><line x1="341" y1="769" x2="370" y2="769" stroke="#1e9b8a"/><line x1="410" y1="769" x2="448" y2="769" stroke="#1e9b8a"/><line x1="469" y1="769" x2="493.1" y2="769" stroke="#1e9b8a"/><line x1="527.9" y1="769" x2="546" y2="769" stroke="#1e9b8a"/><line x1="562" y1="769" x2="590.9" y2="769" stroke="#1e9b8a"/><line x1="616.1" y1="769" x2="648.8" y2="769" stroke="#1e9b8a"/><line x1="959.1" y1="769" x2="987.9" y2="769" stroke="#1e9b8a"/><line x1="1061.9" y1="769" x2="1085.9" y2="769" stroke="#1e9b8a"/><line x1="1101" y1="769" x2="1124.9" y2="769" stroke="#1e9b8a"/><line x1="1159.9" y1="769" x2="1194" y2="769" stroke="#1e9b8a"/><line x1="1249" y1="769" x2="1271.9" y2="769" stroke="#1e9b8a"/><line x1="1425.1" y1="769" x2="1511.8" y2="769" stroke="#1e9b8a"/><line x1="420" y1="752" x2="444.1" y2="752" stroke="#25858e"/><line x1="532.9" y1="752" x2="556" y2="752" stroke="#25858e"/><line x1="567" y1="752" x2="590.9" y2="752" stroke="#25858e"/><line x1="621.1" y1="752" x2="743" y2="752" stroke="#25858e"/><line x1="969.1" y1="752" x2="1134.9" y2="752" stroke="#25858e"/><line x1="1185" y1="752" x2="1346" y2="752" stroke="#25858e"/><line x1="1469.1" y1="752" x2="1492.9" y2="752" stroke="#25858e"/><line x1="429.9" y1="736" x2="453" y2="736" stroke="#2d708e"/><line x1="577" y1="736" x2="733" y2="736" stroke="#2d708e"/><line x1="994" y1="736" x2="1104.9" y2="736" stroke="#2d708e"/><line x1="1116" y1="736" x2="1222.9" y2="736" stroke="#2d708e"/><line x1="1263" y1="736" x2="1292" y2="736" stroke="#2d708e"/><line x1="1489.1" y1="736" x2="1511.8" y2="736" stroke="#2d708e"/><line x1="592.1" y1="720" x2="614.9" y2="720" stroke="#375a8c"/><line x1="655" y1="720" x2="772.1" y2="720" stroke="#375a8c"/><line x1="1072.1" y1="720" x2="1243" y2="720" stroke="#375a8c"/><line x1="1263" y1="720" x2="1286.9" y2="720" stroke="#375a8c"/><line x1="595.9" y1="703" x2="733" y2="703" stroke="#424086"/><line x1="1092.1" y1="703" x2="1119.9" y2="703" stroke="#424086"/><line x1="1200" y1="703" x2="1222.9" y2="703" stroke="#424086"/><line x1="1273.1" y1="703" x2="1326" y2="703" stroke="#424086"/><line x1="1110.9" y1="687" x2="1134.9" y2="687" stroke="#482475"/></g><g stroke="#fff" stroke-opacity="0.33" stroke-width="2.08" stroke-dasharray="2.08 3.44"><line x1="75.1" y1="842.3" x2="75.1" y2="641.4"/><line x1="218.9" y1="842.3" x2="218.9" y2="641.4"/><line x1="364.9" y1="842.3" x2="364.9" y2="641.4"/><line x1="506" y1="842.3" x2="506" y2="641.4"/><line x1="651.2" y1="842.3" x2="651.2" y2="641.4"/><line x1="797.4" y1="842.3" x2="797.4" y2="641.4"/><line x1="940" y1="842.3" x2="940" y2="641.4"/><line x1="1091" y1="842.3" x2="1091" y2="641.4"/><line x1="1239" y1="842.3" x2="1239" y2="641.4"/><line x1="1394.2" y1="842.3" x2="1394.2" y2="641.4"/><line x1="1548" y1="842.3" x2="1548" y2="641.4"/><line x1="1687" y1="842.3" x2="1687" y2="641.4"/></g><g stroke="#fff" stroke-width="2.1" fill="none"><path d="M114 834h8M118 830v8"/><path d="M241 834h8M245 830v8"/><path d="M510.9 834h8M514.9 830v8"/><path d="M706.4 834h8M710.4 830v8"/><path d="M833.9 834h8M837.9 830v8"/><path d="M962 834h8M966 830v8"/><path d="M987 834h8M991 830v8"/><path d="M1117 834h8M1121 830v8"/><path d="M1295.7 834h8M1299.7 830v8"/><path d="M1341.6 834h8M1345.6 830v8"/><path d="M1413 834h8M1417 830v8"/><path d="M1481.8 834h8M1485.8 830v8"/><path d="M1530.9 834h8M1534.9 830v8"/><path d="M1731.7 834h8M1735.7 830v8"/><path d="M1765.7 834h8M1769.7 830v8"/><path d="M173 818h8M177 814v8"/><path d="M256 818h8M260 814v8"/><path d="M323.8 818h8M327.8 814v8"/><path d="M437.9 818h8M441.9 814v8"/><path d="M598.8 818h8M602.8 814v8"/><path d="M716.8 818h8M720.8 814v8"/><path d="M793.7 818h8M797.7 814v8"/><path d="M939.6 818h8M943.6 814v8"/><path d="M1005.9 818h8M1009.9 814v8"/><path d="M1152.6 818h8M1156.6 814v8"/><path d="M1250.8 818h8M1254.8 814v8"/><path d="M1299.6 818h8M1303.6 814v8"/><path d="M1349.7 818h8M1353.7 814v8"/><path d="M1403 818h8M1407 814v8"/><path d="M1466.9 818h8M1470.9 814v8"/><path d="M1554.8 818h8M1558.8 814v8"/><path d="M174.8 802h8M178.8 798v8"/><path d="M379 802h8M383 798v8"/><path d="M544.7 802h8M548.7 798v8"/><path d="M682.8 802h8M686.8 798v8"/><path d="M741.7 802h8M745.7 798v8"/><path d="M1074.7 802h8M1078.7 798v8"/><path d="M1216.6 802h8M1220.6 798v8"/><path d="M1304.9 802h8M1308.9 798v8"/><path d="M1466.9 802h8M1470.9 798v8"/><path d="M1559.8 802h8M1563.8 798v8"/><path d="M201.8 785h8M205.8 781v8"/><path d="M400.6 785h8M404.6 781v8"/><path d="M525.8 785h8M529.8 781v8"/><path d="M638.6 785h8M642.6 781v8"/><path d="M814.7 785h8M818.7 781v8"/><path d="M959.9 785h8M963.9 781v8"/><path d="M1040.7 785h8M1044.7 781v8"/><path d="M1187.8 785h8M1191.8 781v8"/><path d="M1250.8 785h8M1254.8 781v8"/><path d="M1324.9 785h8M1328.9 781v8"/><path d="M1403 785h8M1407 781v8"/><path d="M1545.8 785h8M1549.8 781v8"/><path d="M355.9 769h8M359.9 765v8"/><path d="M426.7 769h8M430.7 765v8"/><path d="M476.8 769h8M480.8 765v8"/><path d="M535.6 769h8M539.6 765v8"/><path d="M570.6 769h8M574.6 765v8"/><path d="M630.8 769h8M634.8 765v8"/><path d="M974 769h8M978 765v8"/><path d="M1069.6 769h8M1073.6 765v8"/><path d="M1108.7 769h8M1112.7 765v8"/><path d="M1177.7 769h8M1181.7 765v8"/><path d="M1255.9 769h8M1259.9 765v8"/><path d="M1466.9 769h8M1470.9 765v8"/><path d="M427.6 752h8M431.6 748v8"/><path d="M539.9 752h8M543.9 748v8"/><path d="M574.7 752h8M578.7 748v8"/><path d="M703.9 752h8M707.9 748v8"/><path d="M1094.9 752h8M1098.9 748v8"/><path d="M1270.7 752h8M1274.7 748v8"/><path d="M1476.9 752h8M1480.9 748v8"/><path d="M437.9 736h8M441.9 732v8"/><path d="M630.8 736h8M634.8 732v8"/><path d="M1038.6 736h8M1042.6 732v8"/><path d="M1167.8 736h8M1171.8 732v8"/><path d="M1274.9 736h8M1278.9 732v8"/><path d="M1496.8 736h8M1500.8 732v8"/><path d="M598.8 720h8M602.8 716v8"/><path d="M726.8 720h8M730.8 716v8"/><path d="M1187.8 720h8M1191.8 716v8"/><path d="M1270.7 720h8M1274.7 716v8"/><path d="M687.7 703h8M691.7 699v8"/><path d="M1101.9 703h8M1105.9 699v8"/><path d="M1206.9 703h8M1210.9 699v8"/><path d="M1299.6 703h8M1303.6 699v8"/><path d="M1118.8 687h8M1122.8 683v8"/></g><text x="116.93" y="831.2" font-size="10.3" fill="#fff" text-anchor="middle" textLength="18.69" lengthAdjust="spacingAndGlyphs">KSE</text><text x="254.16" y="831.2" font-size="10.3" fill="#fff" text-anchor="middle" textLength="18.73" lengthAdjust="spacingAndGlyphs">ETA</text><text x="495.39" y="831.2" font-size="10.3" fill="#fff" text-anchor="middle" textLength="20.72" lengthAdjust="spacingAndGlyphs">NZC</text><text x="710.56" y="831.2" font-size="10.3" fill="#fff" text-anchor="middle" textLength="21.4" lengthAdjust="spacingAndGlyphs">NDA</text><text x="853.99" y="831.2" font-size="10.3" fill="#fff" text-anchor="middle" textLength="18.17" lengthAdjust="spacingAndGlyphs">SPE</text><text x="946.65" y="831.2" font-size="10.3" fill="#fff" text-anchor="middle" textLength="20.89" lengthAdjust="spacingAndGlyphs">ARD</text><text x="1024.53" y="831.2" font-size="10.3" fill="#fff" text-anchor="middle" textLength="19.81" lengthAdjust="spacingAndGlyphs">EGE</text><text x="1142.16" y="831.2" font-size="10.3" fill="#fff" text-anchor="middle" textLength="19.86" lengthAdjust="spacingAndGlyphs">NTA</text><text x="1285.3" y="831.2" font-size="10.3" fill="#fff" text-anchor="middle" textLength="23.31" lengthAdjust="spacingAndGlyphs">MON</text><text x="1343.15" y="831.2" font-size="10.3" fill="#fff" text-anchor="middle" textLength="20.04" lengthAdjust="spacingAndGlyphs">URS</text><text x="1412.05" y="831.2" font-size="10.3" fill="#fff" text-anchor="middle" textLength="19.9" lengthAdjust="spacingAndGlyphs">AHY</text><text x="1485.8" y="831.2" font-size="10.3" fill="#fff" text-anchor="middle" textLength="23.03" lengthAdjust="spacingAndGlyphs">GUM</text><text x="1535.12" y="831.2" font-size="10.3" fill="#fff" text-anchor="middle" textLength="20.9" lengthAdjust="spacingAndGlyphs">OHY</text><text x="1736.27" y="831.2" font-size="10.3" fill="#fff" text-anchor="middle" textLength="20.11" lengthAdjust="spacingAndGlyphs">XHE</text><text x="1769.7" y="831.2" font-size="10.3" fill="#fff" text-anchor="middle" textLength="15.66" lengthAdjust="spacingAndGlyphs">EVI</text><text x="176.81" y="815.2" font-size="10.3" fill="#fff" text-anchor="middle" textLength="19.97" lengthAdjust="spacingAndGlyphs">AVB</text><text x="254.51" y="815.2" font-size="10.3" fill="#fff" text-anchor="middle" textLength="17.49" lengthAdjust="spacingAndGlyphs">ELY</text><text x="324.1" y="815.2" font-size="10.3" fill="#fff" text-anchor="middle" textLength="21.82" lengthAdjust="spacingAndGlyphs">CAM</text><text x="431.98" y="815.2" font-size="10.3" fill="#fff" text-anchor="middle" textLength="19.87" lengthAdjust="spacingAndGlyphs">SSG</text><text x="578.06" y="815.2" font-size="10.3" fill="#fff" text-anchor="middle" textLength="19.3" lengthAdjust="spacingAndGlyphs">PCA</text><text x="720.65" y="815.2" font-size="10.3" fill="#fff" text-anchor="middle" textLength="21.25" lengthAdjust="spacingAndGlyphs">AUD</text><text x="809.2" y="815.2" font-size="10.3" fill="#fff" text-anchor="middle" textLength="20.52" lengthAdjust="spacingAndGlyphs">AUR</text><text x="930.77" y="815.2" font-size="10.3" fill="#fff" text-anchor="middle" textLength="20.31" lengthAdjust="spacingAndGlyphs">DSX</text><text x="1010.95" y="815.2" font-size="10.3" fill="#fff" text-anchor="middle" textLength="21.55" lengthAdjust="spacingAndGlyphs">OCU</text><text x="1138.07" y="815.2" font-size="10.3" fill="#fff" text-anchor="middle" textLength="20.55" lengthAdjust="spacingAndGlyphs">OER</text><text x="1254.71" y="815.2" font-size="10.3" fill="#fff" text-anchor="middle" textLength="21.34" lengthAdjust="spacingAndGlyphs">DKD</text><text x="1303.76" y="815.2" font-size="10.3" fill="#fff" text-anchor="middle" textLength="20.3" lengthAdjust="spacingAndGlyphs">DSV</text><text x="1353.15" y="815.2" font-size="10.3" fill="#fff" text-anchor="middle" textLength="18" lengthAdjust="spacingAndGlyphs">ALY</text><text x="1408.26" y="815.2" font-size="10.3" fill="#fff" text-anchor="middle" textLength="14.42" lengthAdjust="spacingAndGlyphs">JLE</text><text x="1471.44" y="815.2" font-size="10.3" fill="#fff" text-anchor="middle" textLength="19.74" lengthAdjust="spacingAndGlyphs">SCC</text><text x="1558.56" y="815.2" font-size="10.3" fill="#fff" text-anchor="middle" textLength="18.38" lengthAdjust="spacingAndGlyphs">FEV</text><text x="175.76" y="799.2" font-size="10.3" fill="#fff" text-anchor="middle" textLength="18.11" lengthAdjust="spacingAndGlyphs">LYR</text><text x="373.41" y="799.2" font-size="10.3" fill="#fff" text-anchor="middle" textLength="18.04" lengthAdjust="spacingAndGlyphs">JMC</text><text x="559.46" y="799.2" font-size="10.3" fill="#fff" text-anchor="middle" textLength="14.87" lengthAdjust="spacingAndGlyphs">JPE</text><text x="671.35" y="799.2" font-size="10.3" fill="#fff" text-anchor="middle" textLength="19.63" lengthAdjust="spacingAndGlyphs">PAU</text><text x="773.66" y="799.2" font-size="10.3" fill="#fff" text-anchor="middle" textLength="16.79" lengthAdjust="spacingAndGlyphs">NIA</text><text x="1049.52" y="799.2" font-size="10.3" fill="#fff" text-anchor="middle" textLength="18.76" lengthAdjust="spacingAndGlyphs">STA</text><text x="1206.3" y="799.2" font-size="10.3" fill="#fff" text-anchor="middle" textLength="22.57" lengthAdjust="spacingAndGlyphs">NOO</text><text x="1353.5" y="799.2" font-size="10.3" fill="#fff" text-anchor="middle" textLength="22.82" lengthAdjust="spacingAndGlyphs">COM</text><text x="1470.49" y="799.2" font-size="10.3" fill="#fff" text-anchor="middle" textLength="20.84" lengthAdjust="spacingAndGlyphs">NCC</text><text x="1564.16" y="799.2" font-size="10.3" fill="#fff" text-anchor="middle" textLength="19.22" lengthAdjust="spacingAndGlyphs">FED</text><text x="206.1" y="782.2" font-size="10.3" fill="#fff" text-anchor="middle" textLength="16.82" lengthAdjust="spacingAndGlyphs">HVI</text><text x="412.74" y="782.2" font-size="10.3" fill="#fff" text-anchor="middle" textLength="16.27" lengthAdjust="spacingAndGlyphs">ARI</text><text x="529.74" y="782.2" font-size="10.3" fill="#fff" text-anchor="middle" textLength="19.62" lengthAdjust="spacingAndGlyphs">SZC</text><text x="618.39" y="782.2" font-size="10.3" fill="#fff" text-anchor="middle" textLength="19.3" lengthAdjust="spacingAndGlyphs">CAP</text><text x="818.13" y="782.2" font-size="10.3" fill="#fff" text-anchor="middle" textLength="20.53" lengthAdjust="spacingAndGlyphs">NUE</text><text x="960.91" y="782.2" font-size="10.3" fill="#fff" text-anchor="middle" textLength="20.37" lengthAdjust="spacingAndGlyphs">OCT</text><text x="1059.6" y="782.2" font-size="10.3" fill="#fff" text-anchor="middle" textLength="17.27" lengthAdjust="spacingAndGlyphs">ORI</text><text x="1186.73" y="782.2" font-size="10.3" fill="#fff" text-anchor="middle" textLength="22.69" lengthAdjust="spacingAndGlyphs">AMO</text><text x="1254.69" y="782.2" font-size="10.3" fill="#fff" text-anchor="middle" textLength="20.13" lengthAdjust="spacingAndGlyphs">DPC</text><text x="1329.53" y="782.2" font-size="10.3" fill="#fff" text-anchor="middle" textLength="16.17" lengthAdjust="spacingAndGlyphs">XVI</text><text x="1407.47" y="782.2" font-size="10.3" fill="#fff" text-anchor="middle" textLength="21.41" lengthAdjust="spacingAndGlyphs">QUA</text><text x="1560.04" y="782.2" font-size="10.3" fill="#fff" text-anchor="middle" textLength="20.57" lengthAdjust="spacingAndGlyphs">AAN</text><text x="353.39" y="766.2" font-size="10.3" fill="#fff" text-anchor="middle" textLength="19.9" lengthAdjust="spacingAndGlyphs">TAH</text><text x="431.49" y="766.2" font-size="10.3" fill="#fff" text-anchor="middle" textLength="15.66" lengthAdjust="spacingAndGlyphs">JEA</text><text x="481.62" y="766.2" font-size="10.3" fill="#fff" text-anchor="middle" textLength="11.59" lengthAdjust="spacingAndGlyphs">JIP</text><text x="538.59" y="766.2" font-size="10.3" fill="#fff" text-anchor="middle" textLength="17.89" lengthAdjust="spacingAndGlyphs">PPS</text><text x="578.85" y="766.2" font-size="10.3" fill="#fff" text-anchor="middle" textLength="19.62" lengthAdjust="spacingAndGlyphs">ZCS</text><text x="632.77" y="766.2" font-size="10.3" fill="#fff" text-anchor="middle" textLength="21.77" lengthAdjust="spacingAndGlyphs">GDR</text><text x="970.96" y="766.2" font-size="10.3" fill="#fff" text-anchor="middle" textLength="20.89" lengthAdjust="spacingAndGlyphs">DRA</text><text x="1073.3" y="766.2" font-size="10.3" fill="#fff" text-anchor="middle" textLength="20.92" lengthAdjust="spacingAndGlyphs">LUM</text><text x="1113.05" y="766.2" font-size="10.3" fill="#fff" text-anchor="middle" textLength="19.73" lengthAdjust="spacingAndGlyphs">RPU</text><text x="1177.65" y="766.2" font-size="10.3" fill="#fff" text-anchor="middle" textLength="19.9" lengthAdjust="spacingAndGlyphs">THA</text><text x="1259.45" y="766.2" font-size="10.3" fill="#fff" text-anchor="middle" textLength="19.15" lengthAdjust="spacingAndGlyphs">PSU</text><text x="1470.7" y="766.2" font-size="10.3" fill="#fff" text-anchor="middle" textLength="20.11" lengthAdjust="spacingAndGlyphs">XCB</text><text x="431.91" y="749.2" font-size="10.3" fill="#fff" text-anchor="middle" textLength="16.41" lengthAdjust="spacingAndGlyphs">JRC</text><text x="544.5" y="749.2" font-size="10.3" fill="#fff" text-anchor="middle" textLength="20.71" lengthAdjust="spacingAndGlyphs">CAN</text><text x="578.1" y="749.2" font-size="10.3" fill="#fff" text-anchor="middle" textLength="19.51" lengthAdjust="spacingAndGlyphs">FAN</text><text x="680.86" y="749.2" font-size="10.3" fill="#fff" text-anchor="middle" textLength="18.76" lengthAdjust="spacingAndGlyphs">PER</text><text x="1049.67" y="749.2" font-size="10.3" fill="#fff" text-anchor="middle" textLength="19.37" lengthAdjust="spacingAndGlyphs">CTA</text><text x="1265.21" y="749.2" font-size="10.3" fill="#fff" text-anchor="middle" textLength="20.73" lengthAdjust="spacingAndGlyphs">HYD</text><text x="1481.63" y="749.2" font-size="10.3" fill="#fff" text-anchor="middle" textLength="22.16" lengthAdjust="spacingAndGlyphs">XUM</text><text x="441.47" y="733.2" font-size="10.3" fill="#fff" text-anchor="middle" textLength="21.19" lengthAdjust="spacingAndGlyphs">COR</text><text x="657.72" y="733.2" font-size="10.3" fill="#fff" text-anchor="middle" textLength="20.3" lengthAdjust="spacingAndGlyphs">SDA</text><text x="1048.8" y="733.2" font-size="10.3" fill="#fff" text-anchor="middle" textLength="16.67" lengthAdjust="spacingAndGlyphs">LMI</text><text x="1166.5" y="733.2" font-size="10.3" fill="#fff" text-anchor="middle" textLength="19.21" lengthAdjust="spacingAndGlyphs">LEO</text><text x="1274.31" y="733.2" font-size="10.3" fill="#fff" text-anchor="middle" textLength="19.39" lengthAdjust="spacingAndGlyphs">EHY</text><text x="1500.26" y="733.2" font-size="10.3" fill="#fff" text-anchor="middle" textLength="19.58" lengthAdjust="spacingAndGlyphs">ECV</text><text x="603.79" y="717.2" font-size="10.3" fill="#fff" text-anchor="middle" textLength="16.17" lengthAdjust="spacingAndGlyphs">JXA</text><text x="716.02" y="717.2" font-size="10.3" fill="#fff" text-anchor="middle" textLength="20.69" lengthAdjust="spacingAndGlyphs">KCG</text><text x="1156.95" y="717.2" font-size="10.3" fill="#fff" text-anchor="middle" textLength="21.4" lengthAdjust="spacingAndGlyphs">AND</text><text x="1274.61" y="717.2" font-size="10.3" fill="#fff" text-anchor="middle" textLength="21.62" lengthAdjust="spacingAndGlyphs">DAD</text><text x="666.6" y="700.2" font-size="10.3" fill="#fff" text-anchor="middle" textLength="15.76" lengthAdjust="spacingAndGlyphs">ERI</text><text x="1108.47" y="700.2" font-size="10.3" fill="#fff" text-anchor="middle" textLength="19.07" lengthAdjust="spacingAndGlyphs">SLD</text><text x="1211.4" y="700.2" font-size="10.3" fill="#fff" text-anchor="middle" textLength="20.57" lengthAdjust="spacingAndGlyphs">ORS</text><text x="1300.3" y="700.2" font-size="10.3" fill="#fff" text-anchor="middle" textLength="22.06" lengthAdjust="spacingAndGlyphs">GEM</text><text x="1123.1" y="684.2" font-size="10.3" fill="#fff" text-anchor="middle" textLength="21.87" lengthAdjust="spacingAndGlyphs">KUM</text><rect x="20.4" y="641.4" width="1765.1" height="200.9" fill="none" stroke="#fff" stroke-width="1.1"/><g stroke="#fff" stroke-width="1.1"><line x1="20.4" y1="842.3" x2="20.4" y2="846.5"/><line x1="265.55" y1="842.3" x2="265.55" y2="846.5"/><line x1="510.71" y1="842.3" x2="510.71" y2="846.5"/><line x1="755.86" y1="842.3" x2="755.86" y2="846.5"/><line x1="1001.01" y1="842.3" x2="1001.01" y2="846.5"/><line x1="1246.16" y1="842.3" x2="1246.16" y2="846.5"/><line x1="1491.32" y1="842.3" x2="1491.32" y2="846.5"/><line x1="1736.47" y1="842.3" x2="1736.47" y2="846.5"/></g><text x="19.8" y="861.8" font-size="13.24" fill="#fff" text-anchor="middle" textLength="7.95" lengthAdjust="spacingAndGlyphs">0</text><text x="264.95" y="861.8" font-size="13.24" fill="#fff" text-anchor="middle" textLength="15.91" lengthAdjust="spacingAndGlyphs">50</text><text x="510.11" y="861.8" font-size="13.24" fill="#fff" text-anchor="middle" textLength="23.86" lengthAdjust="spacingAndGlyphs">100</text><text x="755.26" y="861.8" font-size="13.24" fill="#fff" text-anchor="middle" textLength="23.86" lengthAdjust="spacingAndGlyphs">150</text><text x="1000.41" y="861.8" font-size="13.24" fill="#fff" text-anchor="middle" textLength="23.86" lengthAdjust="spacingAndGlyphs">200</text><text x="1245.56" y="861.8" font-size="13.24" fill="#fff" text-anchor="middle" textLength="23.86" lengthAdjust="spacingAndGlyphs">250</text><text x="1490.72" y="861.8" font-size="13.24" fill="#fff" text-anchor="middle" textLength="23.86" lengthAdjust="spacingAndGlyphs">300</text><text x="1735.87" y="861.8" font-size="13.24" fill="#fff" text-anchor="middle" textLength="23.86" lengthAdjust="spacingAndGlyphs">350</text><text x="902.6" y="882" font-size="14.72" fill="#fff" text-anchor="middle" textLength="146.69" lengthAdjust="spacingAndGlyphs">Solar longitude (deg)</text></svg></body></html>
